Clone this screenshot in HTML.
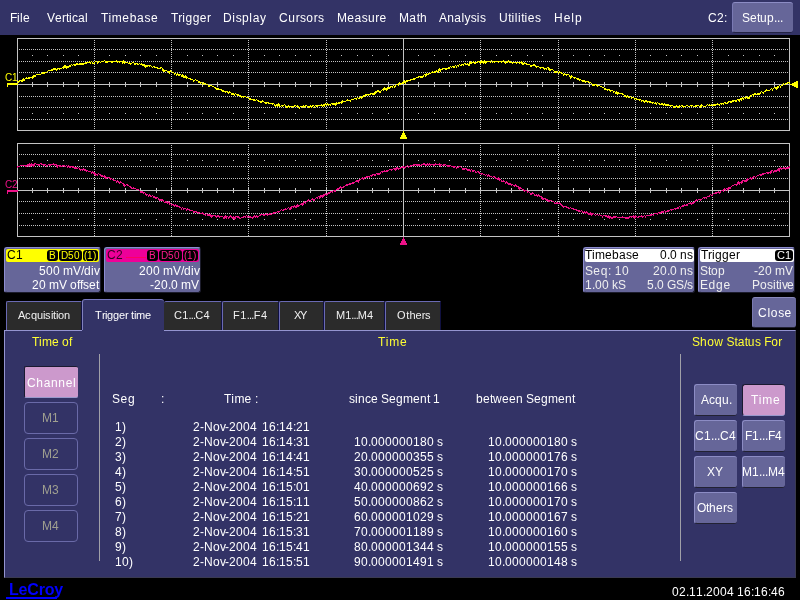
<!DOCTYPE html><html><head><meta charset="utf-8"><style>
*{margin:0;padding:0;box-sizing:border-box}
html,body{width:800px;height:600px;overflow:hidden;background:#000;font-family:"Liberation Sans", sans-serif;}
.a{position:absolute;white-space:pre;line-height:1}
.a b{display:inline-block;font-weight:normal}
</style></head><body><div style="position:absolute;left:0;top:0;width:800px;height:600px;will-change:transform">
<div style="position:absolute;left:0px;top:0px;width:800px;height:35px;background:#333366"></div><div class="a" style="left:10px;top:12px;font-size:12px;color:#fff;"><b style="width:7.000px">F</b><b style="width:3.000px">i</b><b style="width:3.000px">l</b><b style="width:7.000px">e</b></div><div class="a" style="left:47px;top:12px;font-size:12px;color:#fff;"><b style="width:8.000px">V</b><b style="width:7.000px">e</b><b style="width:4.000px">r</b><b style="width:3.000px">t</b><b style="width:3.000px">i</b><b style="width:6.000px">c</b><b style="width:7.000px">a</b><b style="width:3.000px">l</b></div><div class="a" style="left:101px;top:12px;font-size:12px;color:#fff;"><b style="width:7.429px">T</b><b style="width:3.429px">i</b><b style="width:10.429px">m</b><b style="width:7.429px">e</b><b style="width:7.429px">b</b><b style="width:7.429px">a</b><b style="width:6.429px">s</b><b style="width:7.000px">e</b></div><div class="a" style="left:171px;top:12px;font-size:12px;color:#fff;"><b style="width:7.167px">T</b><b style="width:4.167px">r</b><b style="width:3.167px">i</b><b style="width:7.167px">g</b><b style="width:7.167px">g</b><b style="width:7.167px">e</b><b style="width:4.000px">r</b></div><div class="a" style="left:223px;top:12px;font-size:12px;color:#fff;"><b style="width:9.333px">D</b><b style="width:3.333px">i</b><b style="width:6.333px">s</b><b style="width:7.333px">p</b><b style="width:3.333px">l</b><b style="width:7.333px">a</b><b style="width:6.000px">y</b></div><div class="a" style="left:279px;top:12px;font-size:12px;color:#fff;"><b style="width:9.333px">C</b><b style="width:7.333px">u</b><b style="width:4.333px">r</b><b style="width:6.333px">s</b><b style="width:7.333px">o</b><b style="width:4.333px">r</b><b style="width:6.000px">s</b></div><div class="a" style="left:337px;top:12px;font-size:12px;color:#fff;"><b style="width:10.250px">M</b><b style="width:7.250px">e</b><b style="width:7.250px">a</b><b style="width:6.250px">s</b><b style="width:7.250px">u</b><b style="width:4.250px">r</b><b style="width:7.000px">e</b></div><div class="a" style="left:399px;top:12px;font-size:12px;color:#fff;"><b style="width:10.333px">M</b><b style="width:7.333px">a</b><b style="width:3.333px">t</b><b style="width:7.000px">h</b></div><div class="a" style="left:439px;top:12px;font-size:12px;color:#fff;"><b style="width:8.143px">A</b><b style="width:7.143px">n</b><b style="width:7.143px">a</b><b style="width:3.143px">l</b><b style="width:6.143px">y</b><b style="width:6.143px">s</b><b style="width:3.143px">i</b><b style="width:6.000px">s</b></div><div class="a" style="left:499px;top:12px;font-size:12px;color:#fff;"><b style="width:9.250px">U</b><b style="width:3.250px">t</b><b style="width:3.250px">i</b><b style="width:3.250px">l</b><b style="width:3.250px">i</b><b style="width:3.250px">t</b><b style="width:3.250px">i</b><b style="width:7.250px">e</b><b style="width:6.000px">s</b></div><div class="a" style="left:554px;top:12px;font-size:12px;color:#fff;"><b style="width:9.667px">H</b><b style="width:7.667px">e</b><b style="width:3.667px">l</b><b style="width:7.000px">p</b></div><div class="a" style="left:708px;top:12px;font-size:12px;color:#fff;"><b style="width:9.000px">C</b><b style="width:7.000px">2</b><b style="width:3.000px">:</b></div><div style="position:absolute;left:732px;top:2px;width:61px;height:31px;background:#666699;border-radius:3px;border-top:1px solid #8c8cc4;border-left:1px solid #7a7ab4;border-bottom:1px solid #222244"></div><div class="a" style="left:742px;top:12px;font-size:12px;color:#fff;"><b style="width:8.000px">S</b><b style="width:7.000px">e</b><b style="width:3.000px">t</b><b style="width:7.000px">u</b><b style="width:7.000px">p</b><b style="width:3.000px">.</b><b style="width:3.000px">.</b><b style="width:3.000px">.</b></div><svg width="800" height="300" style="position:absolute;left:0;top:0" shape-rendering="crispEdges">
<rect x="17.5" y="38.5" width="772" height="92" fill="none" stroke="#c4c4c4" stroke-width="1"/><path d="M19 49h1v1h-1zM21 49h1v1h-1zM23 49h1v1h-1zM25 49h1v1h-1zM27 49h1v1h-1zM29 49h1v1h-1zM31 49h1v1h-1zM33 49h1v1h-1zM35 49h1v1h-1zM37 49h1v1h-1zM39 49h1v1h-1zM41 49h1v1h-1zM43 49h1v1h-1zM45 49h1v1h-1zM47 49h1v1h-1zM49 49h1v1h-1zM51 49h1v1h-1zM53 49h1v1h-1zM55 49h1v1h-1zM57 49h1v1h-1zM59 49h1v1h-1zM61 49h1v1h-1zM63 49h1v1h-1zM65 49h1v1h-1zM67 49h1v1h-1zM69 49h1v1h-1zM71 49h1v1h-1zM73 49h1v1h-1zM75 49h1v1h-1zM77 49h1v1h-1zM79 49h1v1h-1zM81 49h1v1h-1zM83 49h1v1h-1zM85 49h1v1h-1zM87 49h1v1h-1zM89 49h1v1h-1zM91 49h1v1h-1zM93 49h1v1h-1zM95 49h1v1h-1zM97 49h1v1h-1zM99 49h1v1h-1zM101 49h1v1h-1zM103 49h1v1h-1zM105 49h1v1h-1zM107 49h1v1h-1zM109 49h1v1h-1zM111 49h1v1h-1zM113 49h1v1h-1zM115 49h1v1h-1zM117 49h1v1h-1zM119 49h1v1h-1zM121 49h1v1h-1zM123 49h1v1h-1zM125 49h1v1h-1zM127 49h1v1h-1zM129 49h1v1h-1zM131 49h1v1h-1zM133 49h1v1h-1zM135 49h1v1h-1zM137 49h1v1h-1zM139 49h1v1h-1zM141 49h1v1h-1zM143 49h1v1h-1zM145 49h1v1h-1zM147 49h1v1h-1zM149 49h1v1h-1zM151 49h1v1h-1zM153 49h1v1h-1zM155 49h1v1h-1zM157 49h1v1h-1zM159 49h1v1h-1zM161 49h1v1h-1zM163 49h1v1h-1zM165 49h1v1h-1zM167 49h1v1h-1zM169 49h1v1h-1zM171 49h1v1h-1zM173 49h1v1h-1zM175 49h1v1h-1zM177 49h1v1h-1zM179 49h1v1h-1zM181 49h1v1h-1zM183 49h1v1h-1zM185 49h1v1h-1zM187 49h1v1h-1zM189 49h1v1h-1zM191 49h1v1h-1zM193 49h1v1h-1zM195 49h1v1h-1zM197 49h1v1h-1zM199 49h1v1h-1zM201 49h1v1h-1zM203 49h1v1h-1zM205 49h1v1h-1zM207 49h1v1h-1zM209 49h1v1h-1zM211 49h1v1h-1zM213 49h1v1h-1zM215 49h1v1h-1zM217 49h1v1h-1zM219 49h1v1h-1zM221 49h1v1h-1zM223 49h1v1h-1zM225 49h1v1h-1zM227 49h1v1h-1zM229 49h1v1h-1zM231 49h1v1h-1zM233 49h1v1h-1zM235 49h1v1h-1zM237 49h1v1h-1zM239 49h1v1h-1zM241 49h1v1h-1zM243 49h1v1h-1zM245 49h1v1h-1zM247 49h1v1h-1zM249 49h1v1h-1zM251 49h1v1h-1zM253 49h1v1h-1zM255 49h1v1h-1zM257 49h1v1h-1zM259 49h1v1h-1zM261 49h1v1h-1zM263 49h1v1h-1zM265 49h1v1h-1zM267 49h1v1h-1zM269 49h1v1h-1zM271 49h1v1h-1zM273 49h1v1h-1zM275 49h1v1h-1zM277 49h1v1h-1zM279 49h1v1h-1zM281 49h1v1h-1zM283 49h1v1h-1zM285 49h1v1h-1zM287 49h1v1h-1zM289 49h1v1h-1zM291 49h1v1h-1zM293 49h1v1h-1zM295 49h1v1h-1zM297 49h1v1h-1zM299 49h1v1h-1zM301 49h1v1h-1zM303 49h1v1h-1zM305 49h1v1h-1zM307 49h1v1h-1zM309 49h1v1h-1zM311 49h1v1h-1zM313 49h1v1h-1zM315 49h1v1h-1zM317 49h1v1h-1zM319 49h1v1h-1zM321 49h1v1h-1zM323 49h1v1h-1zM325 49h1v1h-1zM327 49h1v1h-1zM329 49h1v1h-1zM331 49h1v1h-1zM333 49h1v1h-1zM335 49h1v1h-1zM337 49h1v1h-1zM339 49h1v1h-1zM341 49h1v1h-1zM343 49h1v1h-1zM345 49h1v1h-1zM347 49h1v1h-1zM349 49h1v1h-1zM351 49h1v1h-1zM353 49h1v1h-1zM355 49h1v1h-1zM357 49h1v1h-1zM359 49h1v1h-1zM361 49h1v1h-1zM363 49h1v1h-1zM365 49h1v1h-1zM367 49h1v1h-1zM369 49h1v1h-1zM371 49h1v1h-1zM373 49h1v1h-1zM375 49h1v1h-1zM377 49h1v1h-1zM379 49h1v1h-1zM381 49h1v1h-1zM383 49h1v1h-1zM385 49h1v1h-1zM387 49h1v1h-1zM389 49h1v1h-1zM391 49h1v1h-1zM393 49h1v1h-1zM395 49h1v1h-1zM397 49h1v1h-1zM399 49h1v1h-1zM401 49h1v1h-1zM405 49h1v1h-1zM407 49h1v1h-1zM409 49h1v1h-1zM411 49h1v1h-1zM413 49h1v1h-1zM415 49h1v1h-1zM417 49h1v1h-1zM419 49h1v1h-1zM421 49h1v1h-1zM423 49h1v1h-1zM425 49h1v1h-1zM427 49h1v1h-1zM429 49h1v1h-1zM431 49h1v1h-1zM433 49h1v1h-1zM435 49h1v1h-1zM437 49h1v1h-1zM439 49h1v1h-1zM441 49h1v1h-1zM443 49h1v1h-1zM445 49h1v1h-1zM447 49h1v1h-1zM449 49h1v1h-1zM451 49h1v1h-1zM453 49h1v1h-1zM455 49h1v1h-1zM457 49h1v1h-1zM459 49h1v1h-1zM461 49h1v1h-1zM463 49h1v1h-1zM465 49h1v1h-1zM467 49h1v1h-1zM469 49h1v1h-1zM471 49h1v1h-1zM473 49h1v1h-1zM475 49h1v1h-1zM477 49h1v1h-1zM479 49h1v1h-1zM481 49h1v1h-1zM483 49h1v1h-1zM485 49h1v1h-1zM487 49h1v1h-1zM489 49h1v1h-1zM491 49h1v1h-1zM493 49h1v1h-1zM495 49h1v1h-1zM497 49h1v1h-1zM499 49h1v1h-1zM501 49h1v1h-1zM503 49h1v1h-1zM505 49h1v1h-1zM507 49h1v1h-1zM509 49h1v1h-1zM511 49h1v1h-1zM513 49h1v1h-1zM515 49h1v1h-1zM517 49h1v1h-1zM519 49h1v1h-1zM521 49h1v1h-1zM523 49h1v1h-1zM525 49h1v1h-1zM527 49h1v1h-1zM529 49h1v1h-1zM531 49h1v1h-1zM533 49h1v1h-1zM535 49h1v1h-1zM537 49h1v1h-1zM539 49h1v1h-1zM541 49h1v1h-1zM543 49h1v1h-1zM545 49h1v1h-1zM547 49h1v1h-1zM549 49h1v1h-1zM551 49h1v1h-1zM553 49h1v1h-1zM555 49h1v1h-1zM557 49h1v1h-1zM559 49h1v1h-1zM561 49h1v1h-1zM563 49h1v1h-1zM565 49h1v1h-1zM567 49h1v1h-1zM569 49h1v1h-1zM571 49h1v1h-1zM573 49h1v1h-1zM575 49h1v1h-1zM577 49h1v1h-1zM579 49h1v1h-1zM581 49h1v1h-1zM583 49h1v1h-1zM585 49h1v1h-1zM587 49h1v1h-1zM589 49h1v1h-1zM591 49h1v1h-1zM593 49h1v1h-1zM595 49h1v1h-1zM597 49h1v1h-1zM599 49h1v1h-1zM601 49h1v1h-1zM603 49h1v1h-1zM605 49h1v1h-1zM607 49h1v1h-1zM609 49h1v1h-1zM611 49h1v1h-1zM613 49h1v1h-1zM615 49h1v1h-1zM617 49h1v1h-1zM619 49h1v1h-1zM621 49h1v1h-1zM623 49h1v1h-1zM625 49h1v1h-1zM627 49h1v1h-1zM629 49h1v1h-1zM631 49h1v1h-1zM633 49h1v1h-1zM635 49h1v1h-1zM637 49h1v1h-1zM639 49h1v1h-1zM641 49h1v1h-1zM643 49h1v1h-1zM645 49h1v1h-1zM647 49h1v1h-1zM649 49h1v1h-1zM651 49h1v1h-1zM653 49h1v1h-1zM655 49h1v1h-1zM657 49h1v1h-1zM659 49h1v1h-1zM661 49h1v1h-1zM663 49h1v1h-1zM665 49h1v1h-1zM667 49h1v1h-1zM669 49h1v1h-1zM671 49h1v1h-1zM673 49h1v1h-1zM675 49h1v1h-1zM677 49h1v1h-1zM679 49h1v1h-1zM681 49h1v1h-1zM683 49h1v1h-1zM685 49h1v1h-1zM687 49h1v1h-1zM689 49h1v1h-1zM691 49h1v1h-1zM693 49h1v1h-1zM695 49h1v1h-1zM697 49h1v1h-1zM699 49h1v1h-1zM701 49h1v1h-1zM703 49h1v1h-1zM705 49h1v1h-1zM707 49h1v1h-1zM709 49h1v1h-1zM711 49h1v1h-1zM713 49h1v1h-1zM715 49h1v1h-1zM717 49h1v1h-1zM719 49h1v1h-1zM721 49h1v1h-1zM723 49h1v1h-1zM725 49h1v1h-1zM727 49h1v1h-1zM729 49h1v1h-1zM731 49h1v1h-1zM733 49h1v1h-1zM735 49h1v1h-1zM737 49h1v1h-1zM739 49h1v1h-1zM741 49h1v1h-1zM743 49h1v1h-1zM745 49h1v1h-1zM747 49h1v1h-1zM749 49h1v1h-1zM751 49h1v1h-1zM753 49h1v1h-1zM755 49h1v1h-1zM757 49h1v1h-1zM759 49h1v1h-1zM761 49h1v1h-1zM763 49h1v1h-1zM765 49h1v1h-1zM767 49h1v1h-1zM769 49h1v1h-1zM771 49h1v1h-1zM773 49h1v1h-1zM775 49h1v1h-1zM777 49h1v1h-1zM779 49h1v1h-1zM781 49h1v1h-1zM783 49h1v1h-1zM785 49h1v1h-1zM787 49h1v1h-1z" fill="#c4c4c4"/><path d="M19 61h1v1h-1zM21 61h1v1h-1zM23 61h1v1h-1zM25 61h1v1h-1zM27 61h1v1h-1zM29 61h1v1h-1zM31 61h1v1h-1zM33 61h1v1h-1zM35 61h1v1h-1zM37 61h1v1h-1zM39 61h1v1h-1zM41 61h1v1h-1zM43 61h1v1h-1zM45 61h1v1h-1zM47 61h1v1h-1zM49 61h1v1h-1zM51 61h1v1h-1zM53 61h1v1h-1zM55 61h1v1h-1zM57 61h1v1h-1zM59 61h1v1h-1zM61 61h1v1h-1zM63 61h1v1h-1zM65 61h1v1h-1zM67 61h1v1h-1zM69 61h1v1h-1zM71 61h1v1h-1zM73 61h1v1h-1zM75 61h1v1h-1zM77 61h1v1h-1zM79 61h1v1h-1zM81 61h1v1h-1zM83 61h1v1h-1zM85 61h1v1h-1zM87 61h1v1h-1zM89 61h1v1h-1zM91 61h1v1h-1zM93 61h1v1h-1zM95 61h1v1h-1zM97 61h1v1h-1zM99 61h1v1h-1zM101 61h1v1h-1zM103 61h1v1h-1zM105 61h1v1h-1zM107 61h1v1h-1zM109 61h1v1h-1zM111 61h1v1h-1zM113 61h1v1h-1zM115 61h1v1h-1zM117 61h1v1h-1zM119 61h1v1h-1zM121 61h1v1h-1zM123 61h1v1h-1zM125 61h1v1h-1zM127 61h1v1h-1zM129 61h1v1h-1zM131 61h1v1h-1zM133 61h1v1h-1zM135 61h1v1h-1zM137 61h1v1h-1zM139 61h1v1h-1zM141 61h1v1h-1zM143 61h1v1h-1zM145 61h1v1h-1zM147 61h1v1h-1zM149 61h1v1h-1zM151 61h1v1h-1zM153 61h1v1h-1zM155 61h1v1h-1zM157 61h1v1h-1zM159 61h1v1h-1zM161 61h1v1h-1zM163 61h1v1h-1zM165 61h1v1h-1zM167 61h1v1h-1zM169 61h1v1h-1zM171 61h1v1h-1zM173 61h1v1h-1zM175 61h1v1h-1zM177 61h1v1h-1zM179 61h1v1h-1zM181 61h1v1h-1zM183 61h1v1h-1zM185 61h1v1h-1zM187 61h1v1h-1zM189 61h1v1h-1zM191 61h1v1h-1zM193 61h1v1h-1zM195 61h1v1h-1zM197 61h1v1h-1zM199 61h1v1h-1zM201 61h1v1h-1zM203 61h1v1h-1zM205 61h1v1h-1zM207 61h1v1h-1zM209 61h1v1h-1zM211 61h1v1h-1zM213 61h1v1h-1zM215 61h1v1h-1zM217 61h1v1h-1zM219 61h1v1h-1zM221 61h1v1h-1zM223 61h1v1h-1zM225 61h1v1h-1zM227 61h1v1h-1zM229 61h1v1h-1zM231 61h1v1h-1zM233 61h1v1h-1zM235 61h1v1h-1zM237 61h1v1h-1zM239 61h1v1h-1zM241 61h1v1h-1zM243 61h1v1h-1zM245 61h1v1h-1zM247 61h1v1h-1zM249 61h1v1h-1zM251 61h1v1h-1zM253 61h1v1h-1zM255 61h1v1h-1zM257 61h1v1h-1zM259 61h1v1h-1zM261 61h1v1h-1zM263 61h1v1h-1zM265 61h1v1h-1zM267 61h1v1h-1zM269 61h1v1h-1zM271 61h1v1h-1zM273 61h1v1h-1zM275 61h1v1h-1zM277 61h1v1h-1zM279 61h1v1h-1zM281 61h1v1h-1zM283 61h1v1h-1zM285 61h1v1h-1zM287 61h1v1h-1zM289 61h1v1h-1zM291 61h1v1h-1zM293 61h1v1h-1zM295 61h1v1h-1zM297 61h1v1h-1zM299 61h1v1h-1zM301 61h1v1h-1zM303 61h1v1h-1zM305 61h1v1h-1zM307 61h1v1h-1zM309 61h1v1h-1zM311 61h1v1h-1zM313 61h1v1h-1zM315 61h1v1h-1zM317 61h1v1h-1zM319 61h1v1h-1zM321 61h1v1h-1zM323 61h1v1h-1zM325 61h1v1h-1zM327 61h1v1h-1zM329 61h1v1h-1zM331 61h1v1h-1zM333 61h1v1h-1zM335 61h1v1h-1zM337 61h1v1h-1zM339 61h1v1h-1zM341 61h1v1h-1zM343 61h1v1h-1zM345 61h1v1h-1zM347 61h1v1h-1zM349 61h1v1h-1zM351 61h1v1h-1zM353 61h1v1h-1zM355 61h1v1h-1zM357 61h1v1h-1zM359 61h1v1h-1zM361 61h1v1h-1zM363 61h1v1h-1zM365 61h1v1h-1zM367 61h1v1h-1zM369 61h1v1h-1zM371 61h1v1h-1zM373 61h1v1h-1zM375 61h1v1h-1zM377 61h1v1h-1zM379 61h1v1h-1zM381 61h1v1h-1zM383 61h1v1h-1zM385 61h1v1h-1zM387 61h1v1h-1zM389 61h1v1h-1zM391 61h1v1h-1zM393 61h1v1h-1zM395 61h1v1h-1zM397 61h1v1h-1zM399 61h1v1h-1zM401 61h1v1h-1zM405 61h1v1h-1zM407 61h1v1h-1zM409 61h1v1h-1zM411 61h1v1h-1zM413 61h1v1h-1zM415 61h1v1h-1zM417 61h1v1h-1zM419 61h1v1h-1zM421 61h1v1h-1zM423 61h1v1h-1zM425 61h1v1h-1zM427 61h1v1h-1zM429 61h1v1h-1zM431 61h1v1h-1zM433 61h1v1h-1zM435 61h1v1h-1zM437 61h1v1h-1zM439 61h1v1h-1zM441 61h1v1h-1zM443 61h1v1h-1zM445 61h1v1h-1zM447 61h1v1h-1zM449 61h1v1h-1zM451 61h1v1h-1zM453 61h1v1h-1zM455 61h1v1h-1zM457 61h1v1h-1zM459 61h1v1h-1zM461 61h1v1h-1zM463 61h1v1h-1zM465 61h1v1h-1zM467 61h1v1h-1zM469 61h1v1h-1zM471 61h1v1h-1zM473 61h1v1h-1zM475 61h1v1h-1zM477 61h1v1h-1zM479 61h1v1h-1zM481 61h1v1h-1zM483 61h1v1h-1zM485 61h1v1h-1zM487 61h1v1h-1zM489 61h1v1h-1zM491 61h1v1h-1zM493 61h1v1h-1zM495 61h1v1h-1zM497 61h1v1h-1zM499 61h1v1h-1zM501 61h1v1h-1zM503 61h1v1h-1zM505 61h1v1h-1zM507 61h1v1h-1zM509 61h1v1h-1zM511 61h1v1h-1zM513 61h1v1h-1zM515 61h1v1h-1zM517 61h1v1h-1zM519 61h1v1h-1zM521 61h1v1h-1zM523 61h1v1h-1zM525 61h1v1h-1zM527 61h1v1h-1zM529 61h1v1h-1zM531 61h1v1h-1zM533 61h1v1h-1zM535 61h1v1h-1zM537 61h1v1h-1zM539 61h1v1h-1zM541 61h1v1h-1zM543 61h1v1h-1zM545 61h1v1h-1zM547 61h1v1h-1zM549 61h1v1h-1zM551 61h1v1h-1zM553 61h1v1h-1zM555 61h1v1h-1zM557 61h1v1h-1zM559 61h1v1h-1zM561 61h1v1h-1zM563 61h1v1h-1zM565 61h1v1h-1zM567 61h1v1h-1zM569 61h1v1h-1zM571 61h1v1h-1zM573 61h1v1h-1zM575 61h1v1h-1zM577 61h1v1h-1zM579 61h1v1h-1zM581 61h1v1h-1zM583 61h1v1h-1zM585 61h1v1h-1zM587 61h1v1h-1zM589 61h1v1h-1zM591 61h1v1h-1zM593 61h1v1h-1zM595 61h1v1h-1zM597 61h1v1h-1zM599 61h1v1h-1zM601 61h1v1h-1zM603 61h1v1h-1zM605 61h1v1h-1zM607 61h1v1h-1zM609 61h1v1h-1zM611 61h1v1h-1zM613 61h1v1h-1zM615 61h1v1h-1zM617 61h1v1h-1zM619 61h1v1h-1zM621 61h1v1h-1zM623 61h1v1h-1zM625 61h1v1h-1zM627 61h1v1h-1zM629 61h1v1h-1zM631 61h1v1h-1zM633 61h1v1h-1zM635 61h1v1h-1zM637 61h1v1h-1zM639 61h1v1h-1zM641 61h1v1h-1zM643 61h1v1h-1zM645 61h1v1h-1zM647 61h1v1h-1zM649 61h1v1h-1zM651 61h1v1h-1zM653 61h1v1h-1zM655 61h1v1h-1zM657 61h1v1h-1zM659 61h1v1h-1zM661 61h1v1h-1zM663 61h1v1h-1zM665 61h1v1h-1zM667 61h1v1h-1zM669 61h1v1h-1zM671 61h1v1h-1zM673 61h1v1h-1zM675 61h1v1h-1zM677 61h1v1h-1zM679 61h1v1h-1zM681 61h1v1h-1zM683 61h1v1h-1zM685 61h1v1h-1zM687 61h1v1h-1zM689 61h1v1h-1zM691 61h1v1h-1zM693 61h1v1h-1zM695 61h1v1h-1zM697 61h1v1h-1zM699 61h1v1h-1zM701 61h1v1h-1zM703 61h1v1h-1zM705 61h1v1h-1zM707 61h1v1h-1zM709 61h1v1h-1zM711 61h1v1h-1zM713 61h1v1h-1zM715 61h1v1h-1zM717 61h1v1h-1zM719 61h1v1h-1zM721 61h1v1h-1zM723 61h1v1h-1zM725 61h1v1h-1zM727 61h1v1h-1zM729 61h1v1h-1zM731 61h1v1h-1zM733 61h1v1h-1zM735 61h1v1h-1zM737 61h1v1h-1zM739 61h1v1h-1zM741 61h1v1h-1zM743 61h1v1h-1zM745 61h1v1h-1zM747 61h1v1h-1zM749 61h1v1h-1zM751 61h1v1h-1zM753 61h1v1h-1zM755 61h1v1h-1zM757 61h1v1h-1zM759 61h1v1h-1zM761 61h1v1h-1zM763 61h1v1h-1zM765 61h1v1h-1zM767 61h1v1h-1zM769 61h1v1h-1zM771 61h1v1h-1zM773 61h1v1h-1zM775 61h1v1h-1zM777 61h1v1h-1zM779 61h1v1h-1zM781 61h1v1h-1zM783 61h1v1h-1zM785 61h1v1h-1zM787 61h1v1h-1z" fill="#c4c4c4"/><path d="M19 72h1v1h-1zM21 72h1v1h-1zM23 72h1v1h-1zM25 72h1v1h-1zM27 72h1v1h-1zM29 72h1v1h-1zM31 72h1v1h-1zM33 72h1v1h-1zM35 72h1v1h-1zM37 72h1v1h-1zM39 72h1v1h-1zM41 72h1v1h-1zM43 72h1v1h-1zM45 72h1v1h-1zM47 72h1v1h-1zM49 72h1v1h-1zM51 72h1v1h-1zM53 72h1v1h-1zM55 72h1v1h-1zM57 72h1v1h-1zM59 72h1v1h-1zM61 72h1v1h-1zM63 72h1v1h-1zM65 72h1v1h-1zM67 72h1v1h-1zM69 72h1v1h-1zM71 72h1v1h-1zM73 72h1v1h-1zM75 72h1v1h-1zM77 72h1v1h-1zM79 72h1v1h-1zM81 72h1v1h-1zM83 72h1v1h-1zM85 72h1v1h-1zM87 72h1v1h-1zM89 72h1v1h-1zM91 72h1v1h-1zM93 72h1v1h-1zM95 72h1v1h-1zM97 72h1v1h-1zM99 72h1v1h-1zM101 72h1v1h-1zM103 72h1v1h-1zM105 72h1v1h-1zM107 72h1v1h-1zM109 72h1v1h-1zM111 72h1v1h-1zM113 72h1v1h-1zM115 72h1v1h-1zM117 72h1v1h-1zM119 72h1v1h-1zM121 72h1v1h-1zM123 72h1v1h-1zM125 72h1v1h-1zM127 72h1v1h-1zM129 72h1v1h-1zM131 72h1v1h-1zM133 72h1v1h-1zM135 72h1v1h-1zM137 72h1v1h-1zM139 72h1v1h-1zM141 72h1v1h-1zM143 72h1v1h-1zM145 72h1v1h-1zM147 72h1v1h-1zM149 72h1v1h-1zM151 72h1v1h-1zM153 72h1v1h-1zM155 72h1v1h-1zM157 72h1v1h-1zM159 72h1v1h-1zM161 72h1v1h-1zM163 72h1v1h-1zM165 72h1v1h-1zM167 72h1v1h-1zM169 72h1v1h-1zM171 72h1v1h-1zM173 72h1v1h-1zM175 72h1v1h-1zM177 72h1v1h-1zM179 72h1v1h-1zM181 72h1v1h-1zM183 72h1v1h-1zM185 72h1v1h-1zM187 72h1v1h-1zM189 72h1v1h-1zM191 72h1v1h-1zM193 72h1v1h-1zM195 72h1v1h-1zM197 72h1v1h-1zM199 72h1v1h-1zM201 72h1v1h-1zM203 72h1v1h-1zM205 72h1v1h-1zM207 72h1v1h-1zM209 72h1v1h-1zM211 72h1v1h-1zM213 72h1v1h-1zM215 72h1v1h-1zM217 72h1v1h-1zM219 72h1v1h-1zM221 72h1v1h-1zM223 72h1v1h-1zM225 72h1v1h-1zM227 72h1v1h-1zM229 72h1v1h-1zM231 72h1v1h-1zM233 72h1v1h-1zM235 72h1v1h-1zM237 72h1v1h-1zM239 72h1v1h-1zM241 72h1v1h-1zM243 72h1v1h-1zM245 72h1v1h-1zM247 72h1v1h-1zM249 72h1v1h-1zM251 72h1v1h-1zM253 72h1v1h-1zM255 72h1v1h-1zM257 72h1v1h-1zM259 72h1v1h-1zM261 72h1v1h-1zM263 72h1v1h-1zM265 72h1v1h-1zM267 72h1v1h-1zM269 72h1v1h-1zM271 72h1v1h-1zM273 72h1v1h-1zM275 72h1v1h-1zM277 72h1v1h-1zM279 72h1v1h-1zM281 72h1v1h-1zM283 72h1v1h-1zM285 72h1v1h-1zM287 72h1v1h-1zM289 72h1v1h-1zM291 72h1v1h-1zM293 72h1v1h-1zM295 72h1v1h-1zM297 72h1v1h-1zM299 72h1v1h-1zM301 72h1v1h-1zM303 72h1v1h-1zM305 72h1v1h-1zM307 72h1v1h-1zM309 72h1v1h-1zM311 72h1v1h-1zM313 72h1v1h-1zM315 72h1v1h-1zM317 72h1v1h-1zM319 72h1v1h-1zM321 72h1v1h-1zM323 72h1v1h-1zM325 72h1v1h-1zM327 72h1v1h-1zM329 72h1v1h-1zM331 72h1v1h-1zM333 72h1v1h-1zM335 72h1v1h-1zM337 72h1v1h-1zM339 72h1v1h-1zM341 72h1v1h-1zM343 72h1v1h-1zM345 72h1v1h-1zM347 72h1v1h-1zM349 72h1v1h-1zM351 72h1v1h-1zM353 72h1v1h-1zM355 72h1v1h-1zM357 72h1v1h-1zM359 72h1v1h-1zM361 72h1v1h-1zM363 72h1v1h-1zM365 72h1v1h-1zM367 72h1v1h-1zM369 72h1v1h-1zM371 72h1v1h-1zM373 72h1v1h-1zM375 72h1v1h-1zM377 72h1v1h-1zM379 72h1v1h-1zM381 72h1v1h-1zM383 72h1v1h-1zM385 72h1v1h-1zM387 72h1v1h-1zM389 72h1v1h-1zM391 72h1v1h-1zM393 72h1v1h-1zM395 72h1v1h-1zM397 72h1v1h-1zM399 72h1v1h-1zM401 72h1v1h-1zM405 72h1v1h-1zM407 72h1v1h-1zM409 72h1v1h-1zM411 72h1v1h-1zM413 72h1v1h-1zM415 72h1v1h-1zM417 72h1v1h-1zM419 72h1v1h-1zM421 72h1v1h-1zM423 72h1v1h-1zM425 72h1v1h-1zM427 72h1v1h-1zM429 72h1v1h-1zM431 72h1v1h-1zM433 72h1v1h-1zM435 72h1v1h-1zM437 72h1v1h-1zM439 72h1v1h-1zM441 72h1v1h-1zM443 72h1v1h-1zM445 72h1v1h-1zM447 72h1v1h-1zM449 72h1v1h-1zM451 72h1v1h-1zM453 72h1v1h-1zM455 72h1v1h-1zM457 72h1v1h-1zM459 72h1v1h-1zM461 72h1v1h-1zM463 72h1v1h-1zM465 72h1v1h-1zM467 72h1v1h-1zM469 72h1v1h-1zM471 72h1v1h-1zM473 72h1v1h-1zM475 72h1v1h-1zM477 72h1v1h-1zM479 72h1v1h-1zM481 72h1v1h-1zM483 72h1v1h-1zM485 72h1v1h-1zM487 72h1v1h-1zM489 72h1v1h-1zM491 72h1v1h-1zM493 72h1v1h-1zM495 72h1v1h-1zM497 72h1v1h-1zM499 72h1v1h-1zM501 72h1v1h-1zM503 72h1v1h-1zM505 72h1v1h-1zM507 72h1v1h-1zM509 72h1v1h-1zM511 72h1v1h-1zM513 72h1v1h-1zM515 72h1v1h-1zM517 72h1v1h-1zM519 72h1v1h-1zM521 72h1v1h-1zM523 72h1v1h-1zM525 72h1v1h-1zM527 72h1v1h-1zM529 72h1v1h-1zM531 72h1v1h-1zM533 72h1v1h-1zM535 72h1v1h-1zM537 72h1v1h-1zM539 72h1v1h-1zM541 72h1v1h-1zM543 72h1v1h-1zM545 72h1v1h-1zM547 72h1v1h-1zM549 72h1v1h-1zM551 72h1v1h-1zM553 72h1v1h-1zM555 72h1v1h-1zM557 72h1v1h-1zM559 72h1v1h-1zM561 72h1v1h-1zM563 72h1v1h-1zM565 72h1v1h-1zM567 72h1v1h-1zM569 72h1v1h-1zM571 72h1v1h-1zM573 72h1v1h-1zM575 72h1v1h-1zM577 72h1v1h-1zM579 72h1v1h-1zM581 72h1v1h-1zM583 72h1v1h-1zM585 72h1v1h-1zM587 72h1v1h-1zM589 72h1v1h-1zM591 72h1v1h-1zM593 72h1v1h-1zM595 72h1v1h-1zM597 72h1v1h-1zM599 72h1v1h-1zM601 72h1v1h-1zM603 72h1v1h-1zM605 72h1v1h-1zM607 72h1v1h-1zM609 72h1v1h-1zM611 72h1v1h-1zM613 72h1v1h-1zM615 72h1v1h-1zM617 72h1v1h-1zM619 72h1v1h-1zM621 72h1v1h-1zM623 72h1v1h-1zM625 72h1v1h-1zM627 72h1v1h-1zM629 72h1v1h-1zM631 72h1v1h-1zM633 72h1v1h-1zM635 72h1v1h-1zM637 72h1v1h-1zM639 72h1v1h-1zM641 72h1v1h-1zM643 72h1v1h-1zM645 72h1v1h-1zM647 72h1v1h-1zM649 72h1v1h-1zM651 72h1v1h-1zM653 72h1v1h-1zM655 72h1v1h-1zM657 72h1v1h-1zM659 72h1v1h-1zM661 72h1v1h-1zM663 72h1v1h-1zM665 72h1v1h-1zM667 72h1v1h-1zM669 72h1v1h-1zM671 72h1v1h-1zM673 72h1v1h-1zM675 72h1v1h-1zM677 72h1v1h-1zM679 72h1v1h-1zM681 72h1v1h-1zM683 72h1v1h-1zM685 72h1v1h-1zM687 72h1v1h-1zM689 72h1v1h-1zM691 72h1v1h-1zM693 72h1v1h-1zM695 72h1v1h-1zM697 72h1v1h-1zM699 72h1v1h-1zM701 72h1v1h-1zM703 72h1v1h-1zM705 72h1v1h-1zM707 72h1v1h-1zM709 72h1v1h-1zM711 72h1v1h-1zM713 72h1v1h-1zM715 72h1v1h-1zM717 72h1v1h-1zM719 72h1v1h-1zM721 72h1v1h-1zM723 72h1v1h-1zM725 72h1v1h-1zM727 72h1v1h-1zM729 72h1v1h-1zM731 72h1v1h-1zM733 72h1v1h-1zM735 72h1v1h-1zM737 72h1v1h-1zM739 72h1v1h-1zM741 72h1v1h-1zM743 72h1v1h-1zM745 72h1v1h-1zM747 72h1v1h-1zM749 72h1v1h-1zM751 72h1v1h-1zM753 72h1v1h-1zM755 72h1v1h-1zM757 72h1v1h-1zM759 72h1v1h-1zM761 72h1v1h-1zM763 72h1v1h-1zM765 72h1v1h-1zM767 72h1v1h-1zM769 72h1v1h-1zM771 72h1v1h-1zM773 72h1v1h-1zM775 72h1v1h-1zM777 72h1v1h-1zM779 72h1v1h-1zM781 72h1v1h-1zM783 72h1v1h-1zM785 72h1v1h-1zM787 72h1v1h-1z" fill="#c4c4c4"/><path d="M19 96h1v1h-1zM21 96h1v1h-1zM23 96h1v1h-1zM25 96h1v1h-1zM27 96h1v1h-1zM29 96h1v1h-1zM31 96h1v1h-1zM33 96h1v1h-1zM35 96h1v1h-1zM37 96h1v1h-1zM39 96h1v1h-1zM41 96h1v1h-1zM43 96h1v1h-1zM45 96h1v1h-1zM47 96h1v1h-1zM49 96h1v1h-1zM51 96h1v1h-1zM53 96h1v1h-1zM55 96h1v1h-1zM57 96h1v1h-1zM59 96h1v1h-1zM61 96h1v1h-1zM63 96h1v1h-1zM65 96h1v1h-1zM67 96h1v1h-1zM69 96h1v1h-1zM71 96h1v1h-1zM73 96h1v1h-1zM75 96h1v1h-1zM77 96h1v1h-1zM79 96h1v1h-1zM81 96h1v1h-1zM83 96h1v1h-1zM85 96h1v1h-1zM87 96h1v1h-1zM89 96h1v1h-1zM91 96h1v1h-1zM93 96h1v1h-1zM95 96h1v1h-1zM97 96h1v1h-1zM99 96h1v1h-1zM101 96h1v1h-1zM103 96h1v1h-1zM105 96h1v1h-1zM107 96h1v1h-1zM109 96h1v1h-1zM111 96h1v1h-1zM113 96h1v1h-1zM115 96h1v1h-1zM117 96h1v1h-1zM119 96h1v1h-1zM121 96h1v1h-1zM123 96h1v1h-1zM125 96h1v1h-1zM127 96h1v1h-1zM129 96h1v1h-1zM131 96h1v1h-1zM133 96h1v1h-1zM135 96h1v1h-1zM137 96h1v1h-1zM139 96h1v1h-1zM141 96h1v1h-1zM143 96h1v1h-1zM145 96h1v1h-1zM147 96h1v1h-1zM149 96h1v1h-1zM151 96h1v1h-1zM153 96h1v1h-1zM155 96h1v1h-1zM157 96h1v1h-1zM159 96h1v1h-1zM161 96h1v1h-1zM163 96h1v1h-1zM165 96h1v1h-1zM167 96h1v1h-1zM169 96h1v1h-1zM171 96h1v1h-1zM173 96h1v1h-1zM175 96h1v1h-1zM177 96h1v1h-1zM179 96h1v1h-1zM181 96h1v1h-1zM183 96h1v1h-1zM185 96h1v1h-1zM187 96h1v1h-1zM189 96h1v1h-1zM191 96h1v1h-1zM193 96h1v1h-1zM195 96h1v1h-1zM197 96h1v1h-1zM199 96h1v1h-1zM201 96h1v1h-1zM203 96h1v1h-1zM205 96h1v1h-1zM207 96h1v1h-1zM209 96h1v1h-1zM211 96h1v1h-1zM213 96h1v1h-1zM215 96h1v1h-1zM217 96h1v1h-1zM219 96h1v1h-1zM221 96h1v1h-1zM223 96h1v1h-1zM225 96h1v1h-1zM227 96h1v1h-1zM229 96h1v1h-1zM231 96h1v1h-1zM233 96h1v1h-1zM235 96h1v1h-1zM237 96h1v1h-1zM239 96h1v1h-1zM241 96h1v1h-1zM243 96h1v1h-1zM245 96h1v1h-1zM247 96h1v1h-1zM249 96h1v1h-1zM251 96h1v1h-1zM253 96h1v1h-1zM255 96h1v1h-1zM257 96h1v1h-1zM259 96h1v1h-1zM261 96h1v1h-1zM263 96h1v1h-1zM265 96h1v1h-1zM267 96h1v1h-1zM269 96h1v1h-1zM271 96h1v1h-1zM273 96h1v1h-1zM275 96h1v1h-1zM277 96h1v1h-1zM279 96h1v1h-1zM281 96h1v1h-1zM283 96h1v1h-1zM285 96h1v1h-1zM287 96h1v1h-1zM289 96h1v1h-1zM291 96h1v1h-1zM293 96h1v1h-1zM295 96h1v1h-1zM297 96h1v1h-1zM299 96h1v1h-1zM301 96h1v1h-1zM303 96h1v1h-1zM305 96h1v1h-1zM307 96h1v1h-1zM309 96h1v1h-1zM311 96h1v1h-1zM313 96h1v1h-1zM315 96h1v1h-1zM317 96h1v1h-1zM319 96h1v1h-1zM321 96h1v1h-1zM323 96h1v1h-1zM325 96h1v1h-1zM327 96h1v1h-1zM329 96h1v1h-1zM331 96h1v1h-1zM333 96h1v1h-1zM335 96h1v1h-1zM337 96h1v1h-1zM339 96h1v1h-1zM341 96h1v1h-1zM343 96h1v1h-1zM345 96h1v1h-1zM347 96h1v1h-1zM349 96h1v1h-1zM351 96h1v1h-1zM353 96h1v1h-1zM355 96h1v1h-1zM357 96h1v1h-1zM359 96h1v1h-1zM361 96h1v1h-1zM363 96h1v1h-1zM365 96h1v1h-1zM367 96h1v1h-1zM369 96h1v1h-1zM371 96h1v1h-1zM373 96h1v1h-1zM375 96h1v1h-1zM377 96h1v1h-1zM379 96h1v1h-1zM381 96h1v1h-1zM383 96h1v1h-1zM385 96h1v1h-1zM387 96h1v1h-1zM389 96h1v1h-1zM391 96h1v1h-1zM393 96h1v1h-1zM395 96h1v1h-1zM397 96h1v1h-1zM399 96h1v1h-1zM401 96h1v1h-1zM405 96h1v1h-1zM407 96h1v1h-1zM409 96h1v1h-1zM411 96h1v1h-1zM413 96h1v1h-1zM415 96h1v1h-1zM417 96h1v1h-1zM419 96h1v1h-1zM421 96h1v1h-1zM423 96h1v1h-1zM425 96h1v1h-1zM427 96h1v1h-1zM429 96h1v1h-1zM431 96h1v1h-1zM433 96h1v1h-1zM435 96h1v1h-1zM437 96h1v1h-1zM439 96h1v1h-1zM441 96h1v1h-1zM443 96h1v1h-1zM445 96h1v1h-1zM447 96h1v1h-1zM449 96h1v1h-1zM451 96h1v1h-1zM453 96h1v1h-1zM455 96h1v1h-1zM457 96h1v1h-1zM459 96h1v1h-1zM461 96h1v1h-1zM463 96h1v1h-1zM465 96h1v1h-1zM467 96h1v1h-1zM469 96h1v1h-1zM471 96h1v1h-1zM473 96h1v1h-1zM475 96h1v1h-1zM477 96h1v1h-1zM479 96h1v1h-1zM481 96h1v1h-1zM483 96h1v1h-1zM485 96h1v1h-1zM487 96h1v1h-1zM489 96h1v1h-1zM491 96h1v1h-1zM493 96h1v1h-1zM495 96h1v1h-1zM497 96h1v1h-1zM499 96h1v1h-1zM501 96h1v1h-1zM503 96h1v1h-1zM505 96h1v1h-1zM507 96h1v1h-1zM509 96h1v1h-1zM511 96h1v1h-1zM513 96h1v1h-1zM515 96h1v1h-1zM517 96h1v1h-1zM519 96h1v1h-1zM521 96h1v1h-1zM523 96h1v1h-1zM525 96h1v1h-1zM527 96h1v1h-1zM529 96h1v1h-1zM531 96h1v1h-1zM533 96h1v1h-1zM535 96h1v1h-1zM537 96h1v1h-1zM539 96h1v1h-1zM541 96h1v1h-1zM543 96h1v1h-1zM545 96h1v1h-1zM547 96h1v1h-1zM549 96h1v1h-1zM551 96h1v1h-1zM553 96h1v1h-1zM555 96h1v1h-1zM557 96h1v1h-1zM559 96h1v1h-1zM561 96h1v1h-1zM563 96h1v1h-1zM565 96h1v1h-1zM567 96h1v1h-1zM569 96h1v1h-1zM571 96h1v1h-1zM573 96h1v1h-1zM575 96h1v1h-1zM577 96h1v1h-1zM579 96h1v1h-1zM581 96h1v1h-1zM583 96h1v1h-1zM585 96h1v1h-1zM587 96h1v1h-1zM589 96h1v1h-1zM591 96h1v1h-1zM593 96h1v1h-1zM595 96h1v1h-1zM597 96h1v1h-1zM599 96h1v1h-1zM601 96h1v1h-1zM603 96h1v1h-1zM605 96h1v1h-1zM607 96h1v1h-1zM609 96h1v1h-1zM611 96h1v1h-1zM613 96h1v1h-1zM615 96h1v1h-1zM617 96h1v1h-1zM619 96h1v1h-1zM621 96h1v1h-1zM623 96h1v1h-1zM625 96h1v1h-1zM627 96h1v1h-1zM629 96h1v1h-1zM631 96h1v1h-1zM633 96h1v1h-1zM635 96h1v1h-1zM637 96h1v1h-1zM639 96h1v1h-1zM641 96h1v1h-1zM643 96h1v1h-1zM645 96h1v1h-1zM647 96h1v1h-1zM649 96h1v1h-1zM651 96h1v1h-1zM653 96h1v1h-1zM655 96h1v1h-1zM657 96h1v1h-1zM659 96h1v1h-1zM661 96h1v1h-1zM663 96h1v1h-1zM665 96h1v1h-1zM667 96h1v1h-1zM669 96h1v1h-1zM671 96h1v1h-1zM673 96h1v1h-1zM675 96h1v1h-1zM677 96h1v1h-1zM679 96h1v1h-1zM681 96h1v1h-1zM683 96h1v1h-1zM685 96h1v1h-1zM687 96h1v1h-1zM689 96h1v1h-1zM691 96h1v1h-1zM693 96h1v1h-1zM695 96h1v1h-1zM697 96h1v1h-1zM699 96h1v1h-1zM701 96h1v1h-1zM703 96h1v1h-1zM705 96h1v1h-1zM707 96h1v1h-1zM709 96h1v1h-1zM711 96h1v1h-1zM713 96h1v1h-1zM715 96h1v1h-1zM717 96h1v1h-1zM719 96h1v1h-1zM721 96h1v1h-1zM723 96h1v1h-1zM725 96h1v1h-1zM727 96h1v1h-1zM729 96h1v1h-1zM731 96h1v1h-1zM733 96h1v1h-1zM735 96h1v1h-1zM737 96h1v1h-1zM739 96h1v1h-1zM741 96h1v1h-1zM743 96h1v1h-1zM745 96h1v1h-1zM747 96h1v1h-1zM749 96h1v1h-1zM751 96h1v1h-1zM753 96h1v1h-1zM755 96h1v1h-1zM757 96h1v1h-1zM759 96h1v1h-1zM761 96h1v1h-1zM763 96h1v1h-1zM765 96h1v1h-1zM767 96h1v1h-1zM769 96h1v1h-1zM771 96h1v1h-1zM773 96h1v1h-1zM775 96h1v1h-1zM777 96h1v1h-1zM779 96h1v1h-1zM781 96h1v1h-1zM783 96h1v1h-1zM785 96h1v1h-1zM787 96h1v1h-1z" fill="#c4c4c4"/><path d="M19 107h1v1h-1zM21 107h1v1h-1zM23 107h1v1h-1zM25 107h1v1h-1zM27 107h1v1h-1zM29 107h1v1h-1zM31 107h1v1h-1zM33 107h1v1h-1zM35 107h1v1h-1zM37 107h1v1h-1zM39 107h1v1h-1zM41 107h1v1h-1zM43 107h1v1h-1zM45 107h1v1h-1zM47 107h1v1h-1zM49 107h1v1h-1zM51 107h1v1h-1zM53 107h1v1h-1zM55 107h1v1h-1zM57 107h1v1h-1zM59 107h1v1h-1zM61 107h1v1h-1zM63 107h1v1h-1zM65 107h1v1h-1zM67 107h1v1h-1zM69 107h1v1h-1zM71 107h1v1h-1zM73 107h1v1h-1zM75 107h1v1h-1zM77 107h1v1h-1zM79 107h1v1h-1zM81 107h1v1h-1zM83 107h1v1h-1zM85 107h1v1h-1zM87 107h1v1h-1zM89 107h1v1h-1zM91 107h1v1h-1zM93 107h1v1h-1zM95 107h1v1h-1zM97 107h1v1h-1zM99 107h1v1h-1zM101 107h1v1h-1zM103 107h1v1h-1zM105 107h1v1h-1zM107 107h1v1h-1zM109 107h1v1h-1zM111 107h1v1h-1zM113 107h1v1h-1zM115 107h1v1h-1zM117 107h1v1h-1zM119 107h1v1h-1zM121 107h1v1h-1zM123 107h1v1h-1zM125 107h1v1h-1zM127 107h1v1h-1zM129 107h1v1h-1zM131 107h1v1h-1zM133 107h1v1h-1zM135 107h1v1h-1zM137 107h1v1h-1zM139 107h1v1h-1zM141 107h1v1h-1zM143 107h1v1h-1zM145 107h1v1h-1zM147 107h1v1h-1zM149 107h1v1h-1zM151 107h1v1h-1zM153 107h1v1h-1zM155 107h1v1h-1zM157 107h1v1h-1zM159 107h1v1h-1zM161 107h1v1h-1zM163 107h1v1h-1zM165 107h1v1h-1zM167 107h1v1h-1zM169 107h1v1h-1zM171 107h1v1h-1zM173 107h1v1h-1zM175 107h1v1h-1zM177 107h1v1h-1zM179 107h1v1h-1zM181 107h1v1h-1zM183 107h1v1h-1zM185 107h1v1h-1zM187 107h1v1h-1zM189 107h1v1h-1zM191 107h1v1h-1zM193 107h1v1h-1zM195 107h1v1h-1zM197 107h1v1h-1zM199 107h1v1h-1zM201 107h1v1h-1zM203 107h1v1h-1zM205 107h1v1h-1zM207 107h1v1h-1zM209 107h1v1h-1zM211 107h1v1h-1zM213 107h1v1h-1zM215 107h1v1h-1zM217 107h1v1h-1zM219 107h1v1h-1zM221 107h1v1h-1zM223 107h1v1h-1zM225 107h1v1h-1zM227 107h1v1h-1zM229 107h1v1h-1zM231 107h1v1h-1zM233 107h1v1h-1zM235 107h1v1h-1zM237 107h1v1h-1zM239 107h1v1h-1zM241 107h1v1h-1zM243 107h1v1h-1zM245 107h1v1h-1zM247 107h1v1h-1zM249 107h1v1h-1zM251 107h1v1h-1zM253 107h1v1h-1zM255 107h1v1h-1zM257 107h1v1h-1zM259 107h1v1h-1zM261 107h1v1h-1zM263 107h1v1h-1zM265 107h1v1h-1zM267 107h1v1h-1zM269 107h1v1h-1zM271 107h1v1h-1zM273 107h1v1h-1zM275 107h1v1h-1zM277 107h1v1h-1zM279 107h1v1h-1zM281 107h1v1h-1zM283 107h1v1h-1zM285 107h1v1h-1zM287 107h1v1h-1zM289 107h1v1h-1zM291 107h1v1h-1zM293 107h1v1h-1zM295 107h1v1h-1zM297 107h1v1h-1zM299 107h1v1h-1zM301 107h1v1h-1zM303 107h1v1h-1zM305 107h1v1h-1zM307 107h1v1h-1zM309 107h1v1h-1zM311 107h1v1h-1zM313 107h1v1h-1zM315 107h1v1h-1zM317 107h1v1h-1zM319 107h1v1h-1zM321 107h1v1h-1zM323 107h1v1h-1zM325 107h1v1h-1zM327 107h1v1h-1zM329 107h1v1h-1zM331 107h1v1h-1zM333 107h1v1h-1zM335 107h1v1h-1zM337 107h1v1h-1zM339 107h1v1h-1zM341 107h1v1h-1zM343 107h1v1h-1zM345 107h1v1h-1zM347 107h1v1h-1zM349 107h1v1h-1zM351 107h1v1h-1zM353 107h1v1h-1zM355 107h1v1h-1zM357 107h1v1h-1zM359 107h1v1h-1zM361 107h1v1h-1zM363 107h1v1h-1zM365 107h1v1h-1zM367 107h1v1h-1zM369 107h1v1h-1zM371 107h1v1h-1zM373 107h1v1h-1zM375 107h1v1h-1zM377 107h1v1h-1zM379 107h1v1h-1zM381 107h1v1h-1zM383 107h1v1h-1zM385 107h1v1h-1zM387 107h1v1h-1zM389 107h1v1h-1zM391 107h1v1h-1zM393 107h1v1h-1zM395 107h1v1h-1zM397 107h1v1h-1zM399 107h1v1h-1zM401 107h1v1h-1zM405 107h1v1h-1zM407 107h1v1h-1zM409 107h1v1h-1zM411 107h1v1h-1zM413 107h1v1h-1zM415 107h1v1h-1zM417 107h1v1h-1zM419 107h1v1h-1zM421 107h1v1h-1zM423 107h1v1h-1zM425 107h1v1h-1zM427 107h1v1h-1zM429 107h1v1h-1zM431 107h1v1h-1zM433 107h1v1h-1zM435 107h1v1h-1zM437 107h1v1h-1zM439 107h1v1h-1zM441 107h1v1h-1zM443 107h1v1h-1zM445 107h1v1h-1zM447 107h1v1h-1zM449 107h1v1h-1zM451 107h1v1h-1zM453 107h1v1h-1zM455 107h1v1h-1zM457 107h1v1h-1zM459 107h1v1h-1zM461 107h1v1h-1zM463 107h1v1h-1zM465 107h1v1h-1zM467 107h1v1h-1zM469 107h1v1h-1zM471 107h1v1h-1zM473 107h1v1h-1zM475 107h1v1h-1zM477 107h1v1h-1zM479 107h1v1h-1zM481 107h1v1h-1zM483 107h1v1h-1zM485 107h1v1h-1zM487 107h1v1h-1zM489 107h1v1h-1zM491 107h1v1h-1zM493 107h1v1h-1zM495 107h1v1h-1zM497 107h1v1h-1zM499 107h1v1h-1zM501 107h1v1h-1zM503 107h1v1h-1zM505 107h1v1h-1zM507 107h1v1h-1zM509 107h1v1h-1zM511 107h1v1h-1zM513 107h1v1h-1zM515 107h1v1h-1zM517 107h1v1h-1zM519 107h1v1h-1zM521 107h1v1h-1zM523 107h1v1h-1zM525 107h1v1h-1zM527 107h1v1h-1zM529 107h1v1h-1zM531 107h1v1h-1zM533 107h1v1h-1zM535 107h1v1h-1zM537 107h1v1h-1zM539 107h1v1h-1zM541 107h1v1h-1zM543 107h1v1h-1zM545 107h1v1h-1zM547 107h1v1h-1zM549 107h1v1h-1zM551 107h1v1h-1zM553 107h1v1h-1zM555 107h1v1h-1zM557 107h1v1h-1zM559 107h1v1h-1zM561 107h1v1h-1zM563 107h1v1h-1zM565 107h1v1h-1zM567 107h1v1h-1zM569 107h1v1h-1zM571 107h1v1h-1zM573 107h1v1h-1zM575 107h1v1h-1zM577 107h1v1h-1zM579 107h1v1h-1zM581 107h1v1h-1zM583 107h1v1h-1zM585 107h1v1h-1zM587 107h1v1h-1zM589 107h1v1h-1zM591 107h1v1h-1zM593 107h1v1h-1zM595 107h1v1h-1zM597 107h1v1h-1zM599 107h1v1h-1zM601 107h1v1h-1zM603 107h1v1h-1zM605 107h1v1h-1zM607 107h1v1h-1zM609 107h1v1h-1zM611 107h1v1h-1zM613 107h1v1h-1zM615 107h1v1h-1zM617 107h1v1h-1zM619 107h1v1h-1zM621 107h1v1h-1zM623 107h1v1h-1zM625 107h1v1h-1zM627 107h1v1h-1zM629 107h1v1h-1zM631 107h1v1h-1zM633 107h1v1h-1zM635 107h1v1h-1zM637 107h1v1h-1zM639 107h1v1h-1zM641 107h1v1h-1zM643 107h1v1h-1zM645 107h1v1h-1zM647 107h1v1h-1zM649 107h1v1h-1zM651 107h1v1h-1zM653 107h1v1h-1zM655 107h1v1h-1zM657 107h1v1h-1zM659 107h1v1h-1zM661 107h1v1h-1zM663 107h1v1h-1zM665 107h1v1h-1zM667 107h1v1h-1zM669 107h1v1h-1zM671 107h1v1h-1zM673 107h1v1h-1zM675 107h1v1h-1zM677 107h1v1h-1zM679 107h1v1h-1zM681 107h1v1h-1zM683 107h1v1h-1zM685 107h1v1h-1zM687 107h1v1h-1zM689 107h1v1h-1zM691 107h1v1h-1zM693 107h1v1h-1zM695 107h1v1h-1zM697 107h1v1h-1zM699 107h1v1h-1zM701 107h1v1h-1zM703 107h1v1h-1zM705 107h1v1h-1zM707 107h1v1h-1zM709 107h1v1h-1zM711 107h1v1h-1zM713 107h1v1h-1zM715 107h1v1h-1zM717 107h1v1h-1zM719 107h1v1h-1zM721 107h1v1h-1zM723 107h1v1h-1zM725 107h1v1h-1zM727 107h1v1h-1zM729 107h1v1h-1zM731 107h1v1h-1zM733 107h1v1h-1zM735 107h1v1h-1zM737 107h1v1h-1zM739 107h1v1h-1zM741 107h1v1h-1zM743 107h1v1h-1zM745 107h1v1h-1zM747 107h1v1h-1zM749 107h1v1h-1zM751 107h1v1h-1zM753 107h1v1h-1zM755 107h1v1h-1zM757 107h1v1h-1zM759 107h1v1h-1zM761 107h1v1h-1zM763 107h1v1h-1zM765 107h1v1h-1zM767 107h1v1h-1zM769 107h1v1h-1zM771 107h1v1h-1zM773 107h1v1h-1zM775 107h1v1h-1zM777 107h1v1h-1zM779 107h1v1h-1zM781 107h1v1h-1zM783 107h1v1h-1zM785 107h1v1h-1zM787 107h1v1h-1z" fill="#c4c4c4"/><path d="M19 119h1v1h-1zM21 119h1v1h-1zM23 119h1v1h-1zM25 119h1v1h-1zM27 119h1v1h-1zM29 119h1v1h-1zM31 119h1v1h-1zM33 119h1v1h-1zM35 119h1v1h-1zM37 119h1v1h-1zM39 119h1v1h-1zM41 119h1v1h-1zM43 119h1v1h-1zM45 119h1v1h-1zM47 119h1v1h-1zM49 119h1v1h-1zM51 119h1v1h-1zM53 119h1v1h-1zM55 119h1v1h-1zM57 119h1v1h-1zM59 119h1v1h-1zM61 119h1v1h-1zM63 119h1v1h-1zM65 119h1v1h-1zM67 119h1v1h-1zM69 119h1v1h-1zM71 119h1v1h-1zM73 119h1v1h-1zM75 119h1v1h-1zM77 119h1v1h-1zM79 119h1v1h-1zM81 119h1v1h-1zM83 119h1v1h-1zM85 119h1v1h-1zM87 119h1v1h-1zM89 119h1v1h-1zM91 119h1v1h-1zM93 119h1v1h-1zM95 119h1v1h-1zM97 119h1v1h-1zM99 119h1v1h-1zM101 119h1v1h-1zM103 119h1v1h-1zM105 119h1v1h-1zM107 119h1v1h-1zM109 119h1v1h-1zM111 119h1v1h-1zM113 119h1v1h-1zM115 119h1v1h-1zM117 119h1v1h-1zM119 119h1v1h-1zM121 119h1v1h-1zM123 119h1v1h-1zM125 119h1v1h-1zM127 119h1v1h-1zM129 119h1v1h-1zM131 119h1v1h-1zM133 119h1v1h-1zM135 119h1v1h-1zM137 119h1v1h-1zM139 119h1v1h-1zM141 119h1v1h-1zM143 119h1v1h-1zM145 119h1v1h-1zM147 119h1v1h-1zM149 119h1v1h-1zM151 119h1v1h-1zM153 119h1v1h-1zM155 119h1v1h-1zM157 119h1v1h-1zM159 119h1v1h-1zM161 119h1v1h-1zM163 119h1v1h-1zM165 119h1v1h-1zM167 119h1v1h-1zM169 119h1v1h-1zM171 119h1v1h-1zM173 119h1v1h-1zM175 119h1v1h-1zM177 119h1v1h-1zM179 119h1v1h-1zM181 119h1v1h-1zM183 119h1v1h-1zM185 119h1v1h-1zM187 119h1v1h-1zM189 119h1v1h-1zM191 119h1v1h-1zM193 119h1v1h-1zM195 119h1v1h-1zM197 119h1v1h-1zM199 119h1v1h-1zM201 119h1v1h-1zM203 119h1v1h-1zM205 119h1v1h-1zM207 119h1v1h-1zM209 119h1v1h-1zM211 119h1v1h-1zM213 119h1v1h-1zM215 119h1v1h-1zM217 119h1v1h-1zM219 119h1v1h-1zM221 119h1v1h-1zM223 119h1v1h-1zM225 119h1v1h-1zM227 119h1v1h-1zM229 119h1v1h-1zM231 119h1v1h-1zM233 119h1v1h-1zM235 119h1v1h-1zM237 119h1v1h-1zM239 119h1v1h-1zM241 119h1v1h-1zM243 119h1v1h-1zM245 119h1v1h-1zM247 119h1v1h-1zM249 119h1v1h-1zM251 119h1v1h-1zM253 119h1v1h-1zM255 119h1v1h-1zM257 119h1v1h-1zM259 119h1v1h-1zM261 119h1v1h-1zM263 119h1v1h-1zM265 119h1v1h-1zM267 119h1v1h-1zM269 119h1v1h-1zM271 119h1v1h-1zM273 119h1v1h-1zM275 119h1v1h-1zM277 119h1v1h-1zM279 119h1v1h-1zM281 119h1v1h-1zM283 119h1v1h-1zM285 119h1v1h-1zM287 119h1v1h-1zM289 119h1v1h-1zM291 119h1v1h-1zM293 119h1v1h-1zM295 119h1v1h-1zM297 119h1v1h-1zM299 119h1v1h-1zM301 119h1v1h-1zM303 119h1v1h-1zM305 119h1v1h-1zM307 119h1v1h-1zM309 119h1v1h-1zM311 119h1v1h-1zM313 119h1v1h-1zM315 119h1v1h-1zM317 119h1v1h-1zM319 119h1v1h-1zM321 119h1v1h-1zM323 119h1v1h-1zM325 119h1v1h-1zM327 119h1v1h-1zM329 119h1v1h-1zM331 119h1v1h-1zM333 119h1v1h-1zM335 119h1v1h-1zM337 119h1v1h-1zM339 119h1v1h-1zM341 119h1v1h-1zM343 119h1v1h-1zM345 119h1v1h-1zM347 119h1v1h-1zM349 119h1v1h-1zM351 119h1v1h-1zM353 119h1v1h-1zM355 119h1v1h-1zM357 119h1v1h-1zM359 119h1v1h-1zM361 119h1v1h-1zM363 119h1v1h-1zM365 119h1v1h-1zM367 119h1v1h-1zM369 119h1v1h-1zM371 119h1v1h-1zM373 119h1v1h-1zM375 119h1v1h-1zM377 119h1v1h-1zM379 119h1v1h-1zM381 119h1v1h-1zM383 119h1v1h-1zM385 119h1v1h-1zM387 119h1v1h-1zM389 119h1v1h-1zM391 119h1v1h-1zM393 119h1v1h-1zM395 119h1v1h-1zM397 119h1v1h-1zM399 119h1v1h-1zM401 119h1v1h-1zM405 119h1v1h-1zM407 119h1v1h-1zM409 119h1v1h-1zM411 119h1v1h-1zM413 119h1v1h-1zM415 119h1v1h-1zM417 119h1v1h-1zM419 119h1v1h-1zM421 119h1v1h-1zM423 119h1v1h-1zM425 119h1v1h-1zM427 119h1v1h-1zM429 119h1v1h-1zM431 119h1v1h-1zM433 119h1v1h-1zM435 119h1v1h-1zM437 119h1v1h-1zM439 119h1v1h-1zM441 119h1v1h-1zM443 119h1v1h-1zM445 119h1v1h-1zM447 119h1v1h-1zM449 119h1v1h-1zM451 119h1v1h-1zM453 119h1v1h-1zM455 119h1v1h-1zM457 119h1v1h-1zM459 119h1v1h-1zM461 119h1v1h-1zM463 119h1v1h-1zM465 119h1v1h-1zM467 119h1v1h-1zM469 119h1v1h-1zM471 119h1v1h-1zM473 119h1v1h-1zM475 119h1v1h-1zM477 119h1v1h-1zM479 119h1v1h-1zM481 119h1v1h-1zM483 119h1v1h-1zM485 119h1v1h-1zM487 119h1v1h-1zM489 119h1v1h-1zM491 119h1v1h-1zM493 119h1v1h-1zM495 119h1v1h-1zM497 119h1v1h-1zM499 119h1v1h-1zM501 119h1v1h-1zM503 119h1v1h-1zM505 119h1v1h-1zM507 119h1v1h-1zM509 119h1v1h-1zM511 119h1v1h-1zM513 119h1v1h-1zM515 119h1v1h-1zM517 119h1v1h-1zM519 119h1v1h-1zM521 119h1v1h-1zM523 119h1v1h-1zM525 119h1v1h-1zM527 119h1v1h-1zM529 119h1v1h-1zM531 119h1v1h-1zM533 119h1v1h-1zM535 119h1v1h-1zM537 119h1v1h-1zM539 119h1v1h-1zM541 119h1v1h-1zM543 119h1v1h-1zM545 119h1v1h-1zM547 119h1v1h-1zM549 119h1v1h-1zM551 119h1v1h-1zM553 119h1v1h-1zM555 119h1v1h-1zM557 119h1v1h-1zM559 119h1v1h-1zM561 119h1v1h-1zM563 119h1v1h-1zM565 119h1v1h-1zM567 119h1v1h-1zM569 119h1v1h-1zM571 119h1v1h-1zM573 119h1v1h-1zM575 119h1v1h-1zM577 119h1v1h-1zM579 119h1v1h-1zM581 119h1v1h-1zM583 119h1v1h-1zM585 119h1v1h-1zM587 119h1v1h-1zM589 119h1v1h-1zM591 119h1v1h-1zM593 119h1v1h-1zM595 119h1v1h-1zM597 119h1v1h-1zM599 119h1v1h-1zM601 119h1v1h-1zM603 119h1v1h-1zM605 119h1v1h-1zM607 119h1v1h-1zM609 119h1v1h-1zM611 119h1v1h-1zM613 119h1v1h-1zM615 119h1v1h-1zM617 119h1v1h-1zM619 119h1v1h-1zM621 119h1v1h-1zM623 119h1v1h-1zM625 119h1v1h-1zM627 119h1v1h-1zM629 119h1v1h-1zM631 119h1v1h-1zM633 119h1v1h-1zM635 119h1v1h-1zM637 119h1v1h-1zM639 119h1v1h-1zM641 119h1v1h-1zM643 119h1v1h-1zM645 119h1v1h-1zM647 119h1v1h-1zM649 119h1v1h-1zM651 119h1v1h-1zM653 119h1v1h-1zM655 119h1v1h-1zM657 119h1v1h-1zM659 119h1v1h-1zM661 119h1v1h-1zM663 119h1v1h-1zM665 119h1v1h-1zM667 119h1v1h-1zM669 119h1v1h-1zM671 119h1v1h-1zM673 119h1v1h-1zM675 119h1v1h-1zM677 119h1v1h-1zM679 119h1v1h-1zM681 119h1v1h-1zM683 119h1v1h-1zM685 119h1v1h-1zM687 119h1v1h-1zM689 119h1v1h-1zM691 119h1v1h-1zM693 119h1v1h-1zM695 119h1v1h-1zM697 119h1v1h-1zM699 119h1v1h-1zM701 119h1v1h-1zM703 119h1v1h-1zM705 119h1v1h-1zM707 119h1v1h-1zM709 119h1v1h-1zM711 119h1v1h-1zM713 119h1v1h-1zM715 119h1v1h-1zM717 119h1v1h-1zM719 119h1v1h-1zM721 119h1v1h-1zM723 119h1v1h-1zM725 119h1v1h-1zM727 119h1v1h-1zM729 119h1v1h-1zM731 119h1v1h-1zM733 119h1v1h-1zM735 119h1v1h-1zM737 119h1v1h-1zM739 119h1v1h-1zM741 119h1v1h-1zM743 119h1v1h-1zM745 119h1v1h-1zM747 119h1v1h-1zM749 119h1v1h-1zM751 119h1v1h-1zM753 119h1v1h-1zM755 119h1v1h-1zM757 119h1v1h-1zM759 119h1v1h-1zM761 119h1v1h-1zM763 119h1v1h-1zM765 119h1v1h-1zM767 119h1v1h-1zM769 119h1v1h-1zM771 119h1v1h-1zM773 119h1v1h-1zM775 119h1v1h-1zM777 119h1v1h-1zM779 119h1v1h-1zM781 119h1v1h-1zM783 119h1v1h-1zM785 119h1v1h-1zM787 119h1v1h-1z" fill="#c4c4c4"/><rect x="17" y="84" width="772" height="1" fill="#c4c4c4"/><rect x="403" y="38" width="1" height="92" fill="#c4c4c4"/><path d="M94 40h1v1h-1zM94 42h1v1h-1zM94 44h1v1h-1zM94 46h1v1h-1zM94 48h1v1h-1zM94 50h1v1h-1zM94 52h1v1h-1zM94 54h1v1h-1zM94 56h1v1h-1zM94 58h1v1h-1zM94 60h1v1h-1zM94 62h1v1h-1zM94 64h1v1h-1zM94 66h1v1h-1zM94 68h1v1h-1zM94 70h1v1h-1zM94 72h1v1h-1zM94 74h1v1h-1zM94 76h1v1h-1zM94 78h1v1h-1zM94 80h1v1h-1zM94 82h1v1h-1zM94 84h1v1h-1zM94 86h1v1h-1zM94 88h1v1h-1zM94 90h1v1h-1zM94 92h1v1h-1zM94 94h1v1h-1zM94 96h1v1h-1zM94 98h1v1h-1zM94 100h1v1h-1zM94 102h1v1h-1zM94 104h1v1h-1zM94 106h1v1h-1zM94 108h1v1h-1zM94 110h1v1h-1zM94 112h1v1h-1zM94 114h1v1h-1zM94 116h1v1h-1zM94 118h1v1h-1zM94 120h1v1h-1zM94 122h1v1h-1zM94 124h1v1h-1zM94 126h1v1h-1zM94 128h1v1h-1z" fill="#c4c4c4"/><path d="M171 40h1v1h-1zM171 42h1v1h-1zM171 44h1v1h-1zM171 46h1v1h-1zM171 48h1v1h-1zM171 50h1v1h-1zM171 52h1v1h-1zM171 54h1v1h-1zM171 56h1v1h-1zM171 58h1v1h-1zM171 60h1v1h-1zM171 62h1v1h-1zM171 64h1v1h-1zM171 66h1v1h-1zM171 68h1v1h-1zM171 70h1v1h-1zM171 72h1v1h-1zM171 74h1v1h-1zM171 76h1v1h-1zM171 78h1v1h-1zM171 80h1v1h-1zM171 82h1v1h-1zM171 84h1v1h-1zM171 86h1v1h-1zM171 88h1v1h-1zM171 90h1v1h-1zM171 92h1v1h-1zM171 94h1v1h-1zM171 96h1v1h-1zM171 98h1v1h-1zM171 100h1v1h-1zM171 102h1v1h-1zM171 104h1v1h-1zM171 106h1v1h-1zM171 108h1v1h-1zM171 110h1v1h-1zM171 112h1v1h-1zM171 114h1v1h-1zM171 116h1v1h-1zM171 118h1v1h-1zM171 120h1v1h-1zM171 122h1v1h-1zM171 124h1v1h-1zM171 126h1v1h-1zM171 128h1v1h-1z" fill="#c4c4c4"/><path d="M248 40h1v1h-1zM248 42h1v1h-1zM248 44h1v1h-1zM248 46h1v1h-1zM248 48h1v1h-1zM248 50h1v1h-1zM248 52h1v1h-1zM248 54h1v1h-1zM248 56h1v1h-1zM248 58h1v1h-1zM248 60h1v1h-1zM248 62h1v1h-1zM248 64h1v1h-1zM248 66h1v1h-1zM248 68h1v1h-1zM248 70h1v1h-1zM248 72h1v1h-1zM248 74h1v1h-1zM248 76h1v1h-1zM248 78h1v1h-1zM248 80h1v1h-1zM248 82h1v1h-1zM248 84h1v1h-1zM248 86h1v1h-1zM248 88h1v1h-1zM248 90h1v1h-1zM248 92h1v1h-1zM248 94h1v1h-1zM248 96h1v1h-1zM248 98h1v1h-1zM248 100h1v1h-1zM248 102h1v1h-1zM248 104h1v1h-1zM248 106h1v1h-1zM248 108h1v1h-1zM248 110h1v1h-1zM248 112h1v1h-1zM248 114h1v1h-1zM248 116h1v1h-1zM248 118h1v1h-1zM248 120h1v1h-1zM248 122h1v1h-1zM248 124h1v1h-1zM248 126h1v1h-1zM248 128h1v1h-1z" fill="#c4c4c4"/><path d="M326 40h1v1h-1zM326 42h1v1h-1zM326 44h1v1h-1zM326 46h1v1h-1zM326 48h1v1h-1zM326 50h1v1h-1zM326 52h1v1h-1zM326 54h1v1h-1zM326 56h1v1h-1zM326 58h1v1h-1zM326 60h1v1h-1zM326 62h1v1h-1zM326 64h1v1h-1zM326 66h1v1h-1zM326 68h1v1h-1zM326 70h1v1h-1zM326 72h1v1h-1zM326 74h1v1h-1zM326 76h1v1h-1zM326 78h1v1h-1zM326 80h1v1h-1zM326 82h1v1h-1zM326 84h1v1h-1zM326 86h1v1h-1zM326 88h1v1h-1zM326 90h1v1h-1zM326 92h1v1h-1zM326 94h1v1h-1zM326 96h1v1h-1zM326 98h1v1h-1zM326 100h1v1h-1zM326 102h1v1h-1zM326 104h1v1h-1zM326 106h1v1h-1zM326 108h1v1h-1zM326 110h1v1h-1zM326 112h1v1h-1zM326 114h1v1h-1zM326 116h1v1h-1zM326 118h1v1h-1zM326 120h1v1h-1zM326 122h1v1h-1zM326 124h1v1h-1zM326 126h1v1h-1zM326 128h1v1h-1z" fill="#c4c4c4"/><path d="M480 40h1v1h-1zM480 42h1v1h-1zM480 44h1v1h-1zM480 46h1v1h-1zM480 48h1v1h-1zM480 50h1v1h-1zM480 52h1v1h-1zM480 54h1v1h-1zM480 56h1v1h-1zM480 58h1v1h-1zM480 60h1v1h-1zM480 62h1v1h-1zM480 64h1v1h-1zM480 66h1v1h-1zM480 68h1v1h-1zM480 70h1v1h-1zM480 72h1v1h-1zM480 74h1v1h-1zM480 76h1v1h-1zM480 78h1v1h-1zM480 80h1v1h-1zM480 82h1v1h-1zM480 84h1v1h-1zM480 86h1v1h-1zM480 88h1v1h-1zM480 90h1v1h-1zM480 92h1v1h-1zM480 94h1v1h-1zM480 96h1v1h-1zM480 98h1v1h-1zM480 100h1v1h-1zM480 102h1v1h-1zM480 104h1v1h-1zM480 106h1v1h-1zM480 108h1v1h-1zM480 110h1v1h-1zM480 112h1v1h-1zM480 114h1v1h-1zM480 116h1v1h-1zM480 118h1v1h-1zM480 120h1v1h-1zM480 122h1v1h-1zM480 124h1v1h-1zM480 126h1v1h-1zM480 128h1v1h-1z" fill="#c4c4c4"/><path d="M558 40h1v1h-1zM558 42h1v1h-1zM558 44h1v1h-1zM558 46h1v1h-1zM558 48h1v1h-1zM558 50h1v1h-1zM558 52h1v1h-1zM558 54h1v1h-1zM558 56h1v1h-1zM558 58h1v1h-1zM558 60h1v1h-1zM558 62h1v1h-1zM558 64h1v1h-1zM558 66h1v1h-1zM558 68h1v1h-1zM558 70h1v1h-1zM558 72h1v1h-1zM558 74h1v1h-1zM558 76h1v1h-1zM558 78h1v1h-1zM558 80h1v1h-1zM558 82h1v1h-1zM558 84h1v1h-1zM558 86h1v1h-1zM558 88h1v1h-1zM558 90h1v1h-1zM558 92h1v1h-1zM558 94h1v1h-1zM558 96h1v1h-1zM558 98h1v1h-1zM558 100h1v1h-1zM558 102h1v1h-1zM558 104h1v1h-1zM558 106h1v1h-1zM558 108h1v1h-1zM558 110h1v1h-1zM558 112h1v1h-1zM558 114h1v1h-1zM558 116h1v1h-1zM558 118h1v1h-1zM558 120h1v1h-1zM558 122h1v1h-1zM558 124h1v1h-1zM558 126h1v1h-1zM558 128h1v1h-1z" fill="#c4c4c4"/><path d="M635 40h1v1h-1zM635 42h1v1h-1zM635 44h1v1h-1zM635 46h1v1h-1zM635 48h1v1h-1zM635 50h1v1h-1zM635 52h1v1h-1zM635 54h1v1h-1zM635 56h1v1h-1zM635 58h1v1h-1zM635 60h1v1h-1zM635 62h1v1h-1zM635 64h1v1h-1zM635 66h1v1h-1zM635 68h1v1h-1zM635 70h1v1h-1zM635 72h1v1h-1zM635 74h1v1h-1zM635 76h1v1h-1zM635 78h1v1h-1zM635 80h1v1h-1zM635 82h1v1h-1zM635 84h1v1h-1zM635 86h1v1h-1zM635 88h1v1h-1zM635 90h1v1h-1zM635 92h1v1h-1zM635 94h1v1h-1zM635 96h1v1h-1zM635 98h1v1h-1zM635 100h1v1h-1zM635 102h1v1h-1zM635 104h1v1h-1zM635 106h1v1h-1zM635 108h1v1h-1zM635 110h1v1h-1zM635 112h1v1h-1zM635 114h1v1h-1zM635 116h1v1h-1zM635 118h1v1h-1zM635 120h1v1h-1zM635 122h1v1h-1zM635 124h1v1h-1zM635 126h1v1h-1zM635 128h1v1h-1z" fill="#c4c4c4"/><path d="M712 40h1v1h-1zM712 42h1v1h-1zM712 44h1v1h-1zM712 46h1v1h-1zM712 48h1v1h-1zM712 50h1v1h-1zM712 52h1v1h-1zM712 54h1v1h-1zM712 56h1v1h-1zM712 58h1v1h-1zM712 60h1v1h-1zM712 62h1v1h-1zM712 64h1v1h-1zM712 66h1v1h-1zM712 68h1v1h-1zM712 70h1v1h-1zM712 72h1v1h-1zM712 74h1v1h-1zM712 76h1v1h-1zM712 78h1v1h-1zM712 80h1v1h-1zM712 82h1v1h-1zM712 84h1v1h-1zM712 86h1v1h-1zM712 88h1v1h-1zM712 90h1v1h-1zM712 92h1v1h-1zM712 94h1v1h-1zM712 96h1v1h-1zM712 98h1v1h-1zM712 100h1v1h-1zM712 102h1v1h-1zM712 104h1v1h-1zM712 106h1v1h-1zM712 108h1v1h-1zM712 110h1v1h-1zM712 112h1v1h-1zM712 114h1v1h-1zM712 116h1v1h-1zM712 118h1v1h-1zM712 120h1v1h-1zM712 122h1v1h-1zM712 124h1v1h-1zM712 126h1v1h-1zM712 128h1v1h-1z" fill="#c4c4c4"/><path d="M32 82h1v5h-1zM47 82h1v5h-1zM63 82h1v5h-1zM78 82h1v5h-1zM94 82h1v5h-1zM109 82h1v5h-1zM125 82h1v5h-1zM140 82h1v5h-1zM156 82h1v5h-1zM171 82h1v5h-1zM187 82h1v5h-1zM202 82h1v5h-1zM217 82h1v5h-1zM233 82h1v5h-1zM248 82h1v5h-1zM264 82h1v5h-1zM279 82h1v5h-1zM295 82h1v5h-1zM310 82h1v5h-1zM326 82h1v5h-1zM341 82h1v5h-1zM357 82h1v5h-1zM372 82h1v5h-1zM388 82h1v5h-1zM418 82h1v5h-1zM434 82h1v5h-1zM449 82h1v5h-1zM465 82h1v5h-1zM480 82h1v5h-1zM496 82h1v5h-1zM511 82h1v5h-1zM527 82h1v5h-1zM542 82h1v5h-1zM558 82h1v5h-1zM573 82h1v5h-1zM589 82h1v5h-1zM604 82h1v5h-1zM619 82h1v5h-1zM635 82h1v5h-1zM650 82h1v5h-1zM666 82h1v5h-1zM681 82h1v5h-1zM697 82h1v5h-1zM712 82h1v5h-1zM728 82h1v5h-1zM743 82h1v5h-1zM759 82h1v5h-1zM774 82h1v5h-1z" fill="#c4c4c4"/><path d="M32 55h1v1h-1zM32 113h1v1h-1zM47 55h1v1h-1zM47 113h1v1h-1zM63 55h1v1h-1zM63 113h1v1h-1zM78 55h1v1h-1zM78 113h1v1h-1zM109 55h1v1h-1zM109 113h1v1h-1zM125 55h1v1h-1zM125 113h1v1h-1zM140 55h1v1h-1zM140 113h1v1h-1zM156 55h1v1h-1zM156 113h1v1h-1zM187 55h1v1h-1zM187 113h1v1h-1zM202 55h1v1h-1zM202 113h1v1h-1zM217 55h1v1h-1zM217 113h1v1h-1zM233 55h1v1h-1zM233 113h1v1h-1zM264 55h1v1h-1zM264 113h1v1h-1zM279 55h1v1h-1zM279 113h1v1h-1zM295 55h1v1h-1zM295 113h1v1h-1zM310 55h1v1h-1zM310 113h1v1h-1zM341 55h1v1h-1zM341 113h1v1h-1zM357 55h1v1h-1zM357 113h1v1h-1zM372 55h1v1h-1zM372 113h1v1h-1zM388 55h1v1h-1zM388 113h1v1h-1zM418 55h1v1h-1zM418 113h1v1h-1zM434 55h1v1h-1zM434 113h1v1h-1zM449 55h1v1h-1zM449 113h1v1h-1zM465 55h1v1h-1zM465 113h1v1h-1zM496 55h1v1h-1zM496 113h1v1h-1zM511 55h1v1h-1zM511 113h1v1h-1zM527 55h1v1h-1zM527 113h1v1h-1zM542 55h1v1h-1zM542 113h1v1h-1zM573 55h1v1h-1zM573 113h1v1h-1zM589 55h1v1h-1zM589 113h1v1h-1zM604 55h1v1h-1zM604 113h1v1h-1zM619 55h1v1h-1zM619 113h1v1h-1zM650 55h1v1h-1zM650 113h1v1h-1zM666 55h1v1h-1zM666 113h1v1h-1zM681 55h1v1h-1zM681 113h1v1h-1zM697 55h1v1h-1zM697 113h1v1h-1zM728 55h1v1h-1zM728 113h1v1h-1zM743 55h1v1h-1zM743 113h1v1h-1zM759 55h1v1h-1zM759 113h1v1h-1zM774 55h1v1h-1zM774 113h1v1h-1z" fill="#c4c4c4"/><rect x="17.5" y="143.5" width="772" height="93" fill="none" stroke="#c4c4c4" stroke-width="1"/><path d="M19 154h1v1h-1zM21 154h1v1h-1zM23 154h1v1h-1zM25 154h1v1h-1zM27 154h1v1h-1zM29 154h1v1h-1zM31 154h1v1h-1zM33 154h1v1h-1zM35 154h1v1h-1zM37 154h1v1h-1zM39 154h1v1h-1zM41 154h1v1h-1zM43 154h1v1h-1zM45 154h1v1h-1zM47 154h1v1h-1zM49 154h1v1h-1zM51 154h1v1h-1zM53 154h1v1h-1zM55 154h1v1h-1zM57 154h1v1h-1zM59 154h1v1h-1zM61 154h1v1h-1zM63 154h1v1h-1zM65 154h1v1h-1zM67 154h1v1h-1zM69 154h1v1h-1zM71 154h1v1h-1zM73 154h1v1h-1zM75 154h1v1h-1zM77 154h1v1h-1zM79 154h1v1h-1zM81 154h1v1h-1zM83 154h1v1h-1zM85 154h1v1h-1zM87 154h1v1h-1zM89 154h1v1h-1zM91 154h1v1h-1zM93 154h1v1h-1zM95 154h1v1h-1zM97 154h1v1h-1zM99 154h1v1h-1zM101 154h1v1h-1zM103 154h1v1h-1zM105 154h1v1h-1zM107 154h1v1h-1zM109 154h1v1h-1zM111 154h1v1h-1zM113 154h1v1h-1zM115 154h1v1h-1zM117 154h1v1h-1zM119 154h1v1h-1zM121 154h1v1h-1zM123 154h1v1h-1zM125 154h1v1h-1zM127 154h1v1h-1zM129 154h1v1h-1zM131 154h1v1h-1zM133 154h1v1h-1zM135 154h1v1h-1zM137 154h1v1h-1zM139 154h1v1h-1zM141 154h1v1h-1zM143 154h1v1h-1zM145 154h1v1h-1zM147 154h1v1h-1zM149 154h1v1h-1zM151 154h1v1h-1zM153 154h1v1h-1zM155 154h1v1h-1zM157 154h1v1h-1zM159 154h1v1h-1zM161 154h1v1h-1zM163 154h1v1h-1zM165 154h1v1h-1zM167 154h1v1h-1zM169 154h1v1h-1zM171 154h1v1h-1zM173 154h1v1h-1zM175 154h1v1h-1zM177 154h1v1h-1zM179 154h1v1h-1zM181 154h1v1h-1zM183 154h1v1h-1zM185 154h1v1h-1zM187 154h1v1h-1zM189 154h1v1h-1zM191 154h1v1h-1zM193 154h1v1h-1zM195 154h1v1h-1zM197 154h1v1h-1zM199 154h1v1h-1zM201 154h1v1h-1zM203 154h1v1h-1zM205 154h1v1h-1zM207 154h1v1h-1zM209 154h1v1h-1zM211 154h1v1h-1zM213 154h1v1h-1zM215 154h1v1h-1zM217 154h1v1h-1zM219 154h1v1h-1zM221 154h1v1h-1zM223 154h1v1h-1zM225 154h1v1h-1zM227 154h1v1h-1zM229 154h1v1h-1zM231 154h1v1h-1zM233 154h1v1h-1zM235 154h1v1h-1zM237 154h1v1h-1zM239 154h1v1h-1zM241 154h1v1h-1zM243 154h1v1h-1zM245 154h1v1h-1zM247 154h1v1h-1zM249 154h1v1h-1zM251 154h1v1h-1zM253 154h1v1h-1zM255 154h1v1h-1zM257 154h1v1h-1zM259 154h1v1h-1zM261 154h1v1h-1zM263 154h1v1h-1zM265 154h1v1h-1zM267 154h1v1h-1zM269 154h1v1h-1zM271 154h1v1h-1zM273 154h1v1h-1zM275 154h1v1h-1zM277 154h1v1h-1zM279 154h1v1h-1zM281 154h1v1h-1zM283 154h1v1h-1zM285 154h1v1h-1zM287 154h1v1h-1zM289 154h1v1h-1zM291 154h1v1h-1zM293 154h1v1h-1zM295 154h1v1h-1zM297 154h1v1h-1zM299 154h1v1h-1zM301 154h1v1h-1zM303 154h1v1h-1zM305 154h1v1h-1zM307 154h1v1h-1zM309 154h1v1h-1zM311 154h1v1h-1zM313 154h1v1h-1zM315 154h1v1h-1zM317 154h1v1h-1zM319 154h1v1h-1zM321 154h1v1h-1zM323 154h1v1h-1zM325 154h1v1h-1zM327 154h1v1h-1zM329 154h1v1h-1zM331 154h1v1h-1zM333 154h1v1h-1zM335 154h1v1h-1zM337 154h1v1h-1zM339 154h1v1h-1zM341 154h1v1h-1zM343 154h1v1h-1zM345 154h1v1h-1zM347 154h1v1h-1zM349 154h1v1h-1zM351 154h1v1h-1zM353 154h1v1h-1zM355 154h1v1h-1zM357 154h1v1h-1zM359 154h1v1h-1zM361 154h1v1h-1zM363 154h1v1h-1zM365 154h1v1h-1zM367 154h1v1h-1zM369 154h1v1h-1zM371 154h1v1h-1zM373 154h1v1h-1zM375 154h1v1h-1zM377 154h1v1h-1zM379 154h1v1h-1zM381 154h1v1h-1zM383 154h1v1h-1zM385 154h1v1h-1zM387 154h1v1h-1zM389 154h1v1h-1zM391 154h1v1h-1zM393 154h1v1h-1zM395 154h1v1h-1zM397 154h1v1h-1zM399 154h1v1h-1zM401 154h1v1h-1zM405 154h1v1h-1zM407 154h1v1h-1zM409 154h1v1h-1zM411 154h1v1h-1zM413 154h1v1h-1zM415 154h1v1h-1zM417 154h1v1h-1zM419 154h1v1h-1zM421 154h1v1h-1zM423 154h1v1h-1zM425 154h1v1h-1zM427 154h1v1h-1zM429 154h1v1h-1zM431 154h1v1h-1zM433 154h1v1h-1zM435 154h1v1h-1zM437 154h1v1h-1zM439 154h1v1h-1zM441 154h1v1h-1zM443 154h1v1h-1zM445 154h1v1h-1zM447 154h1v1h-1zM449 154h1v1h-1zM451 154h1v1h-1zM453 154h1v1h-1zM455 154h1v1h-1zM457 154h1v1h-1zM459 154h1v1h-1zM461 154h1v1h-1zM463 154h1v1h-1zM465 154h1v1h-1zM467 154h1v1h-1zM469 154h1v1h-1zM471 154h1v1h-1zM473 154h1v1h-1zM475 154h1v1h-1zM477 154h1v1h-1zM479 154h1v1h-1zM481 154h1v1h-1zM483 154h1v1h-1zM485 154h1v1h-1zM487 154h1v1h-1zM489 154h1v1h-1zM491 154h1v1h-1zM493 154h1v1h-1zM495 154h1v1h-1zM497 154h1v1h-1zM499 154h1v1h-1zM501 154h1v1h-1zM503 154h1v1h-1zM505 154h1v1h-1zM507 154h1v1h-1zM509 154h1v1h-1zM511 154h1v1h-1zM513 154h1v1h-1zM515 154h1v1h-1zM517 154h1v1h-1zM519 154h1v1h-1zM521 154h1v1h-1zM523 154h1v1h-1zM525 154h1v1h-1zM527 154h1v1h-1zM529 154h1v1h-1zM531 154h1v1h-1zM533 154h1v1h-1zM535 154h1v1h-1zM537 154h1v1h-1zM539 154h1v1h-1zM541 154h1v1h-1zM543 154h1v1h-1zM545 154h1v1h-1zM547 154h1v1h-1zM549 154h1v1h-1zM551 154h1v1h-1zM553 154h1v1h-1zM555 154h1v1h-1zM557 154h1v1h-1zM559 154h1v1h-1zM561 154h1v1h-1zM563 154h1v1h-1zM565 154h1v1h-1zM567 154h1v1h-1zM569 154h1v1h-1zM571 154h1v1h-1zM573 154h1v1h-1zM575 154h1v1h-1zM577 154h1v1h-1zM579 154h1v1h-1zM581 154h1v1h-1zM583 154h1v1h-1zM585 154h1v1h-1zM587 154h1v1h-1zM589 154h1v1h-1zM591 154h1v1h-1zM593 154h1v1h-1zM595 154h1v1h-1zM597 154h1v1h-1zM599 154h1v1h-1zM601 154h1v1h-1zM603 154h1v1h-1zM605 154h1v1h-1zM607 154h1v1h-1zM609 154h1v1h-1zM611 154h1v1h-1zM613 154h1v1h-1zM615 154h1v1h-1zM617 154h1v1h-1zM619 154h1v1h-1zM621 154h1v1h-1zM623 154h1v1h-1zM625 154h1v1h-1zM627 154h1v1h-1zM629 154h1v1h-1zM631 154h1v1h-1zM633 154h1v1h-1zM635 154h1v1h-1zM637 154h1v1h-1zM639 154h1v1h-1zM641 154h1v1h-1zM643 154h1v1h-1zM645 154h1v1h-1zM647 154h1v1h-1zM649 154h1v1h-1zM651 154h1v1h-1zM653 154h1v1h-1zM655 154h1v1h-1zM657 154h1v1h-1zM659 154h1v1h-1zM661 154h1v1h-1zM663 154h1v1h-1zM665 154h1v1h-1zM667 154h1v1h-1zM669 154h1v1h-1zM671 154h1v1h-1zM673 154h1v1h-1zM675 154h1v1h-1zM677 154h1v1h-1zM679 154h1v1h-1zM681 154h1v1h-1zM683 154h1v1h-1zM685 154h1v1h-1zM687 154h1v1h-1zM689 154h1v1h-1zM691 154h1v1h-1zM693 154h1v1h-1zM695 154h1v1h-1zM697 154h1v1h-1zM699 154h1v1h-1zM701 154h1v1h-1zM703 154h1v1h-1zM705 154h1v1h-1zM707 154h1v1h-1zM709 154h1v1h-1zM711 154h1v1h-1zM713 154h1v1h-1zM715 154h1v1h-1zM717 154h1v1h-1zM719 154h1v1h-1zM721 154h1v1h-1zM723 154h1v1h-1zM725 154h1v1h-1zM727 154h1v1h-1zM729 154h1v1h-1zM731 154h1v1h-1zM733 154h1v1h-1zM735 154h1v1h-1zM737 154h1v1h-1zM739 154h1v1h-1zM741 154h1v1h-1zM743 154h1v1h-1zM745 154h1v1h-1zM747 154h1v1h-1zM749 154h1v1h-1zM751 154h1v1h-1zM753 154h1v1h-1zM755 154h1v1h-1zM757 154h1v1h-1zM759 154h1v1h-1zM761 154h1v1h-1zM763 154h1v1h-1zM765 154h1v1h-1zM767 154h1v1h-1zM769 154h1v1h-1zM771 154h1v1h-1zM773 154h1v1h-1zM775 154h1v1h-1zM777 154h1v1h-1zM779 154h1v1h-1zM781 154h1v1h-1zM783 154h1v1h-1zM785 154h1v1h-1zM787 154h1v1h-1z" fill="#c4c4c4"/><path d="M19 166h1v1h-1zM21 166h1v1h-1zM23 166h1v1h-1zM25 166h1v1h-1zM27 166h1v1h-1zM29 166h1v1h-1zM31 166h1v1h-1zM33 166h1v1h-1zM35 166h1v1h-1zM37 166h1v1h-1zM39 166h1v1h-1zM41 166h1v1h-1zM43 166h1v1h-1zM45 166h1v1h-1zM47 166h1v1h-1zM49 166h1v1h-1zM51 166h1v1h-1zM53 166h1v1h-1zM55 166h1v1h-1zM57 166h1v1h-1zM59 166h1v1h-1zM61 166h1v1h-1zM63 166h1v1h-1zM65 166h1v1h-1zM67 166h1v1h-1zM69 166h1v1h-1zM71 166h1v1h-1zM73 166h1v1h-1zM75 166h1v1h-1zM77 166h1v1h-1zM79 166h1v1h-1zM81 166h1v1h-1zM83 166h1v1h-1zM85 166h1v1h-1zM87 166h1v1h-1zM89 166h1v1h-1zM91 166h1v1h-1zM93 166h1v1h-1zM95 166h1v1h-1zM97 166h1v1h-1zM99 166h1v1h-1zM101 166h1v1h-1zM103 166h1v1h-1zM105 166h1v1h-1zM107 166h1v1h-1zM109 166h1v1h-1zM111 166h1v1h-1zM113 166h1v1h-1zM115 166h1v1h-1zM117 166h1v1h-1zM119 166h1v1h-1zM121 166h1v1h-1zM123 166h1v1h-1zM125 166h1v1h-1zM127 166h1v1h-1zM129 166h1v1h-1zM131 166h1v1h-1zM133 166h1v1h-1zM135 166h1v1h-1zM137 166h1v1h-1zM139 166h1v1h-1zM141 166h1v1h-1zM143 166h1v1h-1zM145 166h1v1h-1zM147 166h1v1h-1zM149 166h1v1h-1zM151 166h1v1h-1zM153 166h1v1h-1zM155 166h1v1h-1zM157 166h1v1h-1zM159 166h1v1h-1zM161 166h1v1h-1zM163 166h1v1h-1zM165 166h1v1h-1zM167 166h1v1h-1zM169 166h1v1h-1zM171 166h1v1h-1zM173 166h1v1h-1zM175 166h1v1h-1zM177 166h1v1h-1zM179 166h1v1h-1zM181 166h1v1h-1zM183 166h1v1h-1zM185 166h1v1h-1zM187 166h1v1h-1zM189 166h1v1h-1zM191 166h1v1h-1zM193 166h1v1h-1zM195 166h1v1h-1zM197 166h1v1h-1zM199 166h1v1h-1zM201 166h1v1h-1zM203 166h1v1h-1zM205 166h1v1h-1zM207 166h1v1h-1zM209 166h1v1h-1zM211 166h1v1h-1zM213 166h1v1h-1zM215 166h1v1h-1zM217 166h1v1h-1zM219 166h1v1h-1zM221 166h1v1h-1zM223 166h1v1h-1zM225 166h1v1h-1zM227 166h1v1h-1zM229 166h1v1h-1zM231 166h1v1h-1zM233 166h1v1h-1zM235 166h1v1h-1zM237 166h1v1h-1zM239 166h1v1h-1zM241 166h1v1h-1zM243 166h1v1h-1zM245 166h1v1h-1zM247 166h1v1h-1zM249 166h1v1h-1zM251 166h1v1h-1zM253 166h1v1h-1zM255 166h1v1h-1zM257 166h1v1h-1zM259 166h1v1h-1zM261 166h1v1h-1zM263 166h1v1h-1zM265 166h1v1h-1zM267 166h1v1h-1zM269 166h1v1h-1zM271 166h1v1h-1zM273 166h1v1h-1zM275 166h1v1h-1zM277 166h1v1h-1zM279 166h1v1h-1zM281 166h1v1h-1zM283 166h1v1h-1zM285 166h1v1h-1zM287 166h1v1h-1zM289 166h1v1h-1zM291 166h1v1h-1zM293 166h1v1h-1zM295 166h1v1h-1zM297 166h1v1h-1zM299 166h1v1h-1zM301 166h1v1h-1zM303 166h1v1h-1zM305 166h1v1h-1zM307 166h1v1h-1zM309 166h1v1h-1zM311 166h1v1h-1zM313 166h1v1h-1zM315 166h1v1h-1zM317 166h1v1h-1zM319 166h1v1h-1zM321 166h1v1h-1zM323 166h1v1h-1zM325 166h1v1h-1zM327 166h1v1h-1zM329 166h1v1h-1zM331 166h1v1h-1zM333 166h1v1h-1zM335 166h1v1h-1zM337 166h1v1h-1zM339 166h1v1h-1zM341 166h1v1h-1zM343 166h1v1h-1zM345 166h1v1h-1zM347 166h1v1h-1zM349 166h1v1h-1zM351 166h1v1h-1zM353 166h1v1h-1zM355 166h1v1h-1zM357 166h1v1h-1zM359 166h1v1h-1zM361 166h1v1h-1zM363 166h1v1h-1zM365 166h1v1h-1zM367 166h1v1h-1zM369 166h1v1h-1zM371 166h1v1h-1zM373 166h1v1h-1zM375 166h1v1h-1zM377 166h1v1h-1zM379 166h1v1h-1zM381 166h1v1h-1zM383 166h1v1h-1zM385 166h1v1h-1zM387 166h1v1h-1zM389 166h1v1h-1zM391 166h1v1h-1zM393 166h1v1h-1zM395 166h1v1h-1zM397 166h1v1h-1zM399 166h1v1h-1zM401 166h1v1h-1zM405 166h1v1h-1zM407 166h1v1h-1zM409 166h1v1h-1zM411 166h1v1h-1zM413 166h1v1h-1zM415 166h1v1h-1zM417 166h1v1h-1zM419 166h1v1h-1zM421 166h1v1h-1zM423 166h1v1h-1zM425 166h1v1h-1zM427 166h1v1h-1zM429 166h1v1h-1zM431 166h1v1h-1zM433 166h1v1h-1zM435 166h1v1h-1zM437 166h1v1h-1zM439 166h1v1h-1zM441 166h1v1h-1zM443 166h1v1h-1zM445 166h1v1h-1zM447 166h1v1h-1zM449 166h1v1h-1zM451 166h1v1h-1zM453 166h1v1h-1zM455 166h1v1h-1zM457 166h1v1h-1zM459 166h1v1h-1zM461 166h1v1h-1zM463 166h1v1h-1zM465 166h1v1h-1zM467 166h1v1h-1zM469 166h1v1h-1zM471 166h1v1h-1zM473 166h1v1h-1zM475 166h1v1h-1zM477 166h1v1h-1zM479 166h1v1h-1zM481 166h1v1h-1zM483 166h1v1h-1zM485 166h1v1h-1zM487 166h1v1h-1zM489 166h1v1h-1zM491 166h1v1h-1zM493 166h1v1h-1zM495 166h1v1h-1zM497 166h1v1h-1zM499 166h1v1h-1zM501 166h1v1h-1zM503 166h1v1h-1zM505 166h1v1h-1zM507 166h1v1h-1zM509 166h1v1h-1zM511 166h1v1h-1zM513 166h1v1h-1zM515 166h1v1h-1zM517 166h1v1h-1zM519 166h1v1h-1zM521 166h1v1h-1zM523 166h1v1h-1zM525 166h1v1h-1zM527 166h1v1h-1zM529 166h1v1h-1zM531 166h1v1h-1zM533 166h1v1h-1zM535 166h1v1h-1zM537 166h1v1h-1zM539 166h1v1h-1zM541 166h1v1h-1zM543 166h1v1h-1zM545 166h1v1h-1zM547 166h1v1h-1zM549 166h1v1h-1zM551 166h1v1h-1zM553 166h1v1h-1zM555 166h1v1h-1zM557 166h1v1h-1zM559 166h1v1h-1zM561 166h1v1h-1zM563 166h1v1h-1zM565 166h1v1h-1zM567 166h1v1h-1zM569 166h1v1h-1zM571 166h1v1h-1zM573 166h1v1h-1zM575 166h1v1h-1zM577 166h1v1h-1zM579 166h1v1h-1zM581 166h1v1h-1zM583 166h1v1h-1zM585 166h1v1h-1zM587 166h1v1h-1zM589 166h1v1h-1zM591 166h1v1h-1zM593 166h1v1h-1zM595 166h1v1h-1zM597 166h1v1h-1zM599 166h1v1h-1zM601 166h1v1h-1zM603 166h1v1h-1zM605 166h1v1h-1zM607 166h1v1h-1zM609 166h1v1h-1zM611 166h1v1h-1zM613 166h1v1h-1zM615 166h1v1h-1zM617 166h1v1h-1zM619 166h1v1h-1zM621 166h1v1h-1zM623 166h1v1h-1zM625 166h1v1h-1zM627 166h1v1h-1zM629 166h1v1h-1zM631 166h1v1h-1zM633 166h1v1h-1zM635 166h1v1h-1zM637 166h1v1h-1zM639 166h1v1h-1zM641 166h1v1h-1zM643 166h1v1h-1zM645 166h1v1h-1zM647 166h1v1h-1zM649 166h1v1h-1zM651 166h1v1h-1zM653 166h1v1h-1zM655 166h1v1h-1zM657 166h1v1h-1zM659 166h1v1h-1zM661 166h1v1h-1zM663 166h1v1h-1zM665 166h1v1h-1zM667 166h1v1h-1zM669 166h1v1h-1zM671 166h1v1h-1zM673 166h1v1h-1zM675 166h1v1h-1zM677 166h1v1h-1zM679 166h1v1h-1zM681 166h1v1h-1zM683 166h1v1h-1zM685 166h1v1h-1zM687 166h1v1h-1zM689 166h1v1h-1zM691 166h1v1h-1zM693 166h1v1h-1zM695 166h1v1h-1zM697 166h1v1h-1zM699 166h1v1h-1zM701 166h1v1h-1zM703 166h1v1h-1zM705 166h1v1h-1zM707 166h1v1h-1zM709 166h1v1h-1zM711 166h1v1h-1zM713 166h1v1h-1zM715 166h1v1h-1zM717 166h1v1h-1zM719 166h1v1h-1zM721 166h1v1h-1zM723 166h1v1h-1zM725 166h1v1h-1zM727 166h1v1h-1zM729 166h1v1h-1zM731 166h1v1h-1zM733 166h1v1h-1zM735 166h1v1h-1zM737 166h1v1h-1zM739 166h1v1h-1zM741 166h1v1h-1zM743 166h1v1h-1zM745 166h1v1h-1zM747 166h1v1h-1zM749 166h1v1h-1zM751 166h1v1h-1zM753 166h1v1h-1zM755 166h1v1h-1zM757 166h1v1h-1zM759 166h1v1h-1zM761 166h1v1h-1zM763 166h1v1h-1zM765 166h1v1h-1zM767 166h1v1h-1zM769 166h1v1h-1zM771 166h1v1h-1zM773 166h1v1h-1zM775 166h1v1h-1zM777 166h1v1h-1zM779 166h1v1h-1zM781 166h1v1h-1zM783 166h1v1h-1zM785 166h1v1h-1zM787 166h1v1h-1z" fill="#c4c4c4"/><path d="M19 178h1v1h-1zM21 178h1v1h-1zM23 178h1v1h-1zM25 178h1v1h-1zM27 178h1v1h-1zM29 178h1v1h-1zM31 178h1v1h-1zM33 178h1v1h-1zM35 178h1v1h-1zM37 178h1v1h-1zM39 178h1v1h-1zM41 178h1v1h-1zM43 178h1v1h-1zM45 178h1v1h-1zM47 178h1v1h-1zM49 178h1v1h-1zM51 178h1v1h-1zM53 178h1v1h-1zM55 178h1v1h-1zM57 178h1v1h-1zM59 178h1v1h-1zM61 178h1v1h-1zM63 178h1v1h-1zM65 178h1v1h-1zM67 178h1v1h-1zM69 178h1v1h-1zM71 178h1v1h-1zM73 178h1v1h-1zM75 178h1v1h-1zM77 178h1v1h-1zM79 178h1v1h-1zM81 178h1v1h-1zM83 178h1v1h-1zM85 178h1v1h-1zM87 178h1v1h-1zM89 178h1v1h-1zM91 178h1v1h-1zM93 178h1v1h-1zM95 178h1v1h-1zM97 178h1v1h-1zM99 178h1v1h-1zM101 178h1v1h-1zM103 178h1v1h-1zM105 178h1v1h-1zM107 178h1v1h-1zM109 178h1v1h-1zM111 178h1v1h-1zM113 178h1v1h-1zM115 178h1v1h-1zM117 178h1v1h-1zM119 178h1v1h-1zM121 178h1v1h-1zM123 178h1v1h-1zM125 178h1v1h-1zM127 178h1v1h-1zM129 178h1v1h-1zM131 178h1v1h-1zM133 178h1v1h-1zM135 178h1v1h-1zM137 178h1v1h-1zM139 178h1v1h-1zM141 178h1v1h-1zM143 178h1v1h-1zM145 178h1v1h-1zM147 178h1v1h-1zM149 178h1v1h-1zM151 178h1v1h-1zM153 178h1v1h-1zM155 178h1v1h-1zM157 178h1v1h-1zM159 178h1v1h-1zM161 178h1v1h-1zM163 178h1v1h-1zM165 178h1v1h-1zM167 178h1v1h-1zM169 178h1v1h-1zM171 178h1v1h-1zM173 178h1v1h-1zM175 178h1v1h-1zM177 178h1v1h-1zM179 178h1v1h-1zM181 178h1v1h-1zM183 178h1v1h-1zM185 178h1v1h-1zM187 178h1v1h-1zM189 178h1v1h-1zM191 178h1v1h-1zM193 178h1v1h-1zM195 178h1v1h-1zM197 178h1v1h-1zM199 178h1v1h-1zM201 178h1v1h-1zM203 178h1v1h-1zM205 178h1v1h-1zM207 178h1v1h-1zM209 178h1v1h-1zM211 178h1v1h-1zM213 178h1v1h-1zM215 178h1v1h-1zM217 178h1v1h-1zM219 178h1v1h-1zM221 178h1v1h-1zM223 178h1v1h-1zM225 178h1v1h-1zM227 178h1v1h-1zM229 178h1v1h-1zM231 178h1v1h-1zM233 178h1v1h-1zM235 178h1v1h-1zM237 178h1v1h-1zM239 178h1v1h-1zM241 178h1v1h-1zM243 178h1v1h-1zM245 178h1v1h-1zM247 178h1v1h-1zM249 178h1v1h-1zM251 178h1v1h-1zM253 178h1v1h-1zM255 178h1v1h-1zM257 178h1v1h-1zM259 178h1v1h-1zM261 178h1v1h-1zM263 178h1v1h-1zM265 178h1v1h-1zM267 178h1v1h-1zM269 178h1v1h-1zM271 178h1v1h-1zM273 178h1v1h-1zM275 178h1v1h-1zM277 178h1v1h-1zM279 178h1v1h-1zM281 178h1v1h-1zM283 178h1v1h-1zM285 178h1v1h-1zM287 178h1v1h-1zM289 178h1v1h-1zM291 178h1v1h-1zM293 178h1v1h-1zM295 178h1v1h-1zM297 178h1v1h-1zM299 178h1v1h-1zM301 178h1v1h-1zM303 178h1v1h-1zM305 178h1v1h-1zM307 178h1v1h-1zM309 178h1v1h-1zM311 178h1v1h-1zM313 178h1v1h-1zM315 178h1v1h-1zM317 178h1v1h-1zM319 178h1v1h-1zM321 178h1v1h-1zM323 178h1v1h-1zM325 178h1v1h-1zM327 178h1v1h-1zM329 178h1v1h-1zM331 178h1v1h-1zM333 178h1v1h-1zM335 178h1v1h-1zM337 178h1v1h-1zM339 178h1v1h-1zM341 178h1v1h-1zM343 178h1v1h-1zM345 178h1v1h-1zM347 178h1v1h-1zM349 178h1v1h-1zM351 178h1v1h-1zM353 178h1v1h-1zM355 178h1v1h-1zM357 178h1v1h-1zM359 178h1v1h-1zM361 178h1v1h-1zM363 178h1v1h-1zM365 178h1v1h-1zM367 178h1v1h-1zM369 178h1v1h-1zM371 178h1v1h-1zM373 178h1v1h-1zM375 178h1v1h-1zM377 178h1v1h-1zM379 178h1v1h-1zM381 178h1v1h-1zM383 178h1v1h-1zM385 178h1v1h-1zM387 178h1v1h-1zM389 178h1v1h-1zM391 178h1v1h-1zM393 178h1v1h-1zM395 178h1v1h-1zM397 178h1v1h-1zM399 178h1v1h-1zM401 178h1v1h-1zM405 178h1v1h-1zM407 178h1v1h-1zM409 178h1v1h-1zM411 178h1v1h-1zM413 178h1v1h-1zM415 178h1v1h-1zM417 178h1v1h-1zM419 178h1v1h-1zM421 178h1v1h-1zM423 178h1v1h-1zM425 178h1v1h-1zM427 178h1v1h-1zM429 178h1v1h-1zM431 178h1v1h-1zM433 178h1v1h-1zM435 178h1v1h-1zM437 178h1v1h-1zM439 178h1v1h-1zM441 178h1v1h-1zM443 178h1v1h-1zM445 178h1v1h-1zM447 178h1v1h-1zM449 178h1v1h-1zM451 178h1v1h-1zM453 178h1v1h-1zM455 178h1v1h-1zM457 178h1v1h-1zM459 178h1v1h-1zM461 178h1v1h-1zM463 178h1v1h-1zM465 178h1v1h-1zM467 178h1v1h-1zM469 178h1v1h-1zM471 178h1v1h-1zM473 178h1v1h-1zM475 178h1v1h-1zM477 178h1v1h-1zM479 178h1v1h-1zM481 178h1v1h-1zM483 178h1v1h-1zM485 178h1v1h-1zM487 178h1v1h-1zM489 178h1v1h-1zM491 178h1v1h-1zM493 178h1v1h-1zM495 178h1v1h-1zM497 178h1v1h-1zM499 178h1v1h-1zM501 178h1v1h-1zM503 178h1v1h-1zM505 178h1v1h-1zM507 178h1v1h-1zM509 178h1v1h-1zM511 178h1v1h-1zM513 178h1v1h-1zM515 178h1v1h-1zM517 178h1v1h-1zM519 178h1v1h-1zM521 178h1v1h-1zM523 178h1v1h-1zM525 178h1v1h-1zM527 178h1v1h-1zM529 178h1v1h-1zM531 178h1v1h-1zM533 178h1v1h-1zM535 178h1v1h-1zM537 178h1v1h-1zM539 178h1v1h-1zM541 178h1v1h-1zM543 178h1v1h-1zM545 178h1v1h-1zM547 178h1v1h-1zM549 178h1v1h-1zM551 178h1v1h-1zM553 178h1v1h-1zM555 178h1v1h-1zM557 178h1v1h-1zM559 178h1v1h-1zM561 178h1v1h-1zM563 178h1v1h-1zM565 178h1v1h-1zM567 178h1v1h-1zM569 178h1v1h-1zM571 178h1v1h-1zM573 178h1v1h-1zM575 178h1v1h-1zM577 178h1v1h-1zM579 178h1v1h-1zM581 178h1v1h-1zM583 178h1v1h-1zM585 178h1v1h-1zM587 178h1v1h-1zM589 178h1v1h-1zM591 178h1v1h-1zM593 178h1v1h-1zM595 178h1v1h-1zM597 178h1v1h-1zM599 178h1v1h-1zM601 178h1v1h-1zM603 178h1v1h-1zM605 178h1v1h-1zM607 178h1v1h-1zM609 178h1v1h-1zM611 178h1v1h-1zM613 178h1v1h-1zM615 178h1v1h-1zM617 178h1v1h-1zM619 178h1v1h-1zM621 178h1v1h-1zM623 178h1v1h-1zM625 178h1v1h-1zM627 178h1v1h-1zM629 178h1v1h-1zM631 178h1v1h-1zM633 178h1v1h-1zM635 178h1v1h-1zM637 178h1v1h-1zM639 178h1v1h-1zM641 178h1v1h-1zM643 178h1v1h-1zM645 178h1v1h-1zM647 178h1v1h-1zM649 178h1v1h-1zM651 178h1v1h-1zM653 178h1v1h-1zM655 178h1v1h-1zM657 178h1v1h-1zM659 178h1v1h-1zM661 178h1v1h-1zM663 178h1v1h-1zM665 178h1v1h-1zM667 178h1v1h-1zM669 178h1v1h-1zM671 178h1v1h-1zM673 178h1v1h-1zM675 178h1v1h-1zM677 178h1v1h-1zM679 178h1v1h-1zM681 178h1v1h-1zM683 178h1v1h-1zM685 178h1v1h-1zM687 178h1v1h-1zM689 178h1v1h-1zM691 178h1v1h-1zM693 178h1v1h-1zM695 178h1v1h-1zM697 178h1v1h-1zM699 178h1v1h-1zM701 178h1v1h-1zM703 178h1v1h-1zM705 178h1v1h-1zM707 178h1v1h-1zM709 178h1v1h-1zM711 178h1v1h-1zM713 178h1v1h-1zM715 178h1v1h-1zM717 178h1v1h-1zM719 178h1v1h-1zM721 178h1v1h-1zM723 178h1v1h-1zM725 178h1v1h-1zM727 178h1v1h-1zM729 178h1v1h-1zM731 178h1v1h-1zM733 178h1v1h-1zM735 178h1v1h-1zM737 178h1v1h-1zM739 178h1v1h-1zM741 178h1v1h-1zM743 178h1v1h-1zM745 178h1v1h-1zM747 178h1v1h-1zM749 178h1v1h-1zM751 178h1v1h-1zM753 178h1v1h-1zM755 178h1v1h-1zM757 178h1v1h-1zM759 178h1v1h-1zM761 178h1v1h-1zM763 178h1v1h-1zM765 178h1v1h-1zM767 178h1v1h-1zM769 178h1v1h-1zM771 178h1v1h-1zM773 178h1v1h-1zM775 178h1v1h-1zM777 178h1v1h-1zM779 178h1v1h-1zM781 178h1v1h-1zM783 178h1v1h-1zM785 178h1v1h-1zM787 178h1v1h-1z" fill="#c4c4c4"/><path d="M19 201h1v1h-1zM21 201h1v1h-1zM23 201h1v1h-1zM25 201h1v1h-1zM27 201h1v1h-1zM29 201h1v1h-1zM31 201h1v1h-1zM33 201h1v1h-1zM35 201h1v1h-1zM37 201h1v1h-1zM39 201h1v1h-1zM41 201h1v1h-1zM43 201h1v1h-1zM45 201h1v1h-1zM47 201h1v1h-1zM49 201h1v1h-1zM51 201h1v1h-1zM53 201h1v1h-1zM55 201h1v1h-1zM57 201h1v1h-1zM59 201h1v1h-1zM61 201h1v1h-1zM63 201h1v1h-1zM65 201h1v1h-1zM67 201h1v1h-1zM69 201h1v1h-1zM71 201h1v1h-1zM73 201h1v1h-1zM75 201h1v1h-1zM77 201h1v1h-1zM79 201h1v1h-1zM81 201h1v1h-1zM83 201h1v1h-1zM85 201h1v1h-1zM87 201h1v1h-1zM89 201h1v1h-1zM91 201h1v1h-1zM93 201h1v1h-1zM95 201h1v1h-1zM97 201h1v1h-1zM99 201h1v1h-1zM101 201h1v1h-1zM103 201h1v1h-1zM105 201h1v1h-1zM107 201h1v1h-1zM109 201h1v1h-1zM111 201h1v1h-1zM113 201h1v1h-1zM115 201h1v1h-1zM117 201h1v1h-1zM119 201h1v1h-1zM121 201h1v1h-1zM123 201h1v1h-1zM125 201h1v1h-1zM127 201h1v1h-1zM129 201h1v1h-1zM131 201h1v1h-1zM133 201h1v1h-1zM135 201h1v1h-1zM137 201h1v1h-1zM139 201h1v1h-1zM141 201h1v1h-1zM143 201h1v1h-1zM145 201h1v1h-1zM147 201h1v1h-1zM149 201h1v1h-1zM151 201h1v1h-1zM153 201h1v1h-1zM155 201h1v1h-1zM157 201h1v1h-1zM159 201h1v1h-1zM161 201h1v1h-1zM163 201h1v1h-1zM165 201h1v1h-1zM167 201h1v1h-1zM169 201h1v1h-1zM171 201h1v1h-1zM173 201h1v1h-1zM175 201h1v1h-1zM177 201h1v1h-1zM179 201h1v1h-1zM181 201h1v1h-1zM183 201h1v1h-1zM185 201h1v1h-1zM187 201h1v1h-1zM189 201h1v1h-1zM191 201h1v1h-1zM193 201h1v1h-1zM195 201h1v1h-1zM197 201h1v1h-1zM199 201h1v1h-1zM201 201h1v1h-1zM203 201h1v1h-1zM205 201h1v1h-1zM207 201h1v1h-1zM209 201h1v1h-1zM211 201h1v1h-1zM213 201h1v1h-1zM215 201h1v1h-1zM217 201h1v1h-1zM219 201h1v1h-1zM221 201h1v1h-1zM223 201h1v1h-1zM225 201h1v1h-1zM227 201h1v1h-1zM229 201h1v1h-1zM231 201h1v1h-1zM233 201h1v1h-1zM235 201h1v1h-1zM237 201h1v1h-1zM239 201h1v1h-1zM241 201h1v1h-1zM243 201h1v1h-1zM245 201h1v1h-1zM247 201h1v1h-1zM249 201h1v1h-1zM251 201h1v1h-1zM253 201h1v1h-1zM255 201h1v1h-1zM257 201h1v1h-1zM259 201h1v1h-1zM261 201h1v1h-1zM263 201h1v1h-1zM265 201h1v1h-1zM267 201h1v1h-1zM269 201h1v1h-1zM271 201h1v1h-1zM273 201h1v1h-1zM275 201h1v1h-1zM277 201h1v1h-1zM279 201h1v1h-1zM281 201h1v1h-1zM283 201h1v1h-1zM285 201h1v1h-1zM287 201h1v1h-1zM289 201h1v1h-1zM291 201h1v1h-1zM293 201h1v1h-1zM295 201h1v1h-1zM297 201h1v1h-1zM299 201h1v1h-1zM301 201h1v1h-1zM303 201h1v1h-1zM305 201h1v1h-1zM307 201h1v1h-1zM309 201h1v1h-1zM311 201h1v1h-1zM313 201h1v1h-1zM315 201h1v1h-1zM317 201h1v1h-1zM319 201h1v1h-1zM321 201h1v1h-1zM323 201h1v1h-1zM325 201h1v1h-1zM327 201h1v1h-1zM329 201h1v1h-1zM331 201h1v1h-1zM333 201h1v1h-1zM335 201h1v1h-1zM337 201h1v1h-1zM339 201h1v1h-1zM341 201h1v1h-1zM343 201h1v1h-1zM345 201h1v1h-1zM347 201h1v1h-1zM349 201h1v1h-1zM351 201h1v1h-1zM353 201h1v1h-1zM355 201h1v1h-1zM357 201h1v1h-1zM359 201h1v1h-1zM361 201h1v1h-1zM363 201h1v1h-1zM365 201h1v1h-1zM367 201h1v1h-1zM369 201h1v1h-1zM371 201h1v1h-1zM373 201h1v1h-1zM375 201h1v1h-1zM377 201h1v1h-1zM379 201h1v1h-1zM381 201h1v1h-1zM383 201h1v1h-1zM385 201h1v1h-1zM387 201h1v1h-1zM389 201h1v1h-1zM391 201h1v1h-1zM393 201h1v1h-1zM395 201h1v1h-1zM397 201h1v1h-1zM399 201h1v1h-1zM401 201h1v1h-1zM405 201h1v1h-1zM407 201h1v1h-1zM409 201h1v1h-1zM411 201h1v1h-1zM413 201h1v1h-1zM415 201h1v1h-1zM417 201h1v1h-1zM419 201h1v1h-1zM421 201h1v1h-1zM423 201h1v1h-1zM425 201h1v1h-1zM427 201h1v1h-1zM429 201h1v1h-1zM431 201h1v1h-1zM433 201h1v1h-1zM435 201h1v1h-1zM437 201h1v1h-1zM439 201h1v1h-1zM441 201h1v1h-1zM443 201h1v1h-1zM445 201h1v1h-1zM447 201h1v1h-1zM449 201h1v1h-1zM451 201h1v1h-1zM453 201h1v1h-1zM455 201h1v1h-1zM457 201h1v1h-1zM459 201h1v1h-1zM461 201h1v1h-1zM463 201h1v1h-1zM465 201h1v1h-1zM467 201h1v1h-1zM469 201h1v1h-1zM471 201h1v1h-1zM473 201h1v1h-1zM475 201h1v1h-1zM477 201h1v1h-1zM479 201h1v1h-1zM481 201h1v1h-1zM483 201h1v1h-1zM485 201h1v1h-1zM487 201h1v1h-1zM489 201h1v1h-1zM491 201h1v1h-1zM493 201h1v1h-1zM495 201h1v1h-1zM497 201h1v1h-1zM499 201h1v1h-1zM501 201h1v1h-1zM503 201h1v1h-1zM505 201h1v1h-1zM507 201h1v1h-1zM509 201h1v1h-1zM511 201h1v1h-1zM513 201h1v1h-1zM515 201h1v1h-1zM517 201h1v1h-1zM519 201h1v1h-1zM521 201h1v1h-1zM523 201h1v1h-1zM525 201h1v1h-1zM527 201h1v1h-1zM529 201h1v1h-1zM531 201h1v1h-1zM533 201h1v1h-1zM535 201h1v1h-1zM537 201h1v1h-1zM539 201h1v1h-1zM541 201h1v1h-1zM543 201h1v1h-1zM545 201h1v1h-1zM547 201h1v1h-1zM549 201h1v1h-1zM551 201h1v1h-1zM553 201h1v1h-1zM555 201h1v1h-1zM557 201h1v1h-1zM559 201h1v1h-1zM561 201h1v1h-1zM563 201h1v1h-1zM565 201h1v1h-1zM567 201h1v1h-1zM569 201h1v1h-1zM571 201h1v1h-1zM573 201h1v1h-1zM575 201h1v1h-1zM577 201h1v1h-1zM579 201h1v1h-1zM581 201h1v1h-1zM583 201h1v1h-1zM585 201h1v1h-1zM587 201h1v1h-1zM589 201h1v1h-1zM591 201h1v1h-1zM593 201h1v1h-1zM595 201h1v1h-1zM597 201h1v1h-1zM599 201h1v1h-1zM601 201h1v1h-1zM603 201h1v1h-1zM605 201h1v1h-1zM607 201h1v1h-1zM609 201h1v1h-1zM611 201h1v1h-1zM613 201h1v1h-1zM615 201h1v1h-1zM617 201h1v1h-1zM619 201h1v1h-1zM621 201h1v1h-1zM623 201h1v1h-1zM625 201h1v1h-1zM627 201h1v1h-1zM629 201h1v1h-1zM631 201h1v1h-1zM633 201h1v1h-1zM635 201h1v1h-1zM637 201h1v1h-1zM639 201h1v1h-1zM641 201h1v1h-1zM643 201h1v1h-1zM645 201h1v1h-1zM647 201h1v1h-1zM649 201h1v1h-1zM651 201h1v1h-1zM653 201h1v1h-1zM655 201h1v1h-1zM657 201h1v1h-1zM659 201h1v1h-1zM661 201h1v1h-1zM663 201h1v1h-1zM665 201h1v1h-1zM667 201h1v1h-1zM669 201h1v1h-1zM671 201h1v1h-1zM673 201h1v1h-1zM675 201h1v1h-1zM677 201h1v1h-1zM679 201h1v1h-1zM681 201h1v1h-1zM683 201h1v1h-1zM685 201h1v1h-1zM687 201h1v1h-1zM689 201h1v1h-1zM691 201h1v1h-1zM693 201h1v1h-1zM695 201h1v1h-1zM697 201h1v1h-1zM699 201h1v1h-1zM701 201h1v1h-1zM703 201h1v1h-1zM705 201h1v1h-1zM707 201h1v1h-1zM709 201h1v1h-1zM711 201h1v1h-1zM713 201h1v1h-1zM715 201h1v1h-1zM717 201h1v1h-1zM719 201h1v1h-1zM721 201h1v1h-1zM723 201h1v1h-1zM725 201h1v1h-1zM727 201h1v1h-1zM729 201h1v1h-1zM731 201h1v1h-1zM733 201h1v1h-1zM735 201h1v1h-1zM737 201h1v1h-1zM739 201h1v1h-1zM741 201h1v1h-1zM743 201h1v1h-1zM745 201h1v1h-1zM747 201h1v1h-1zM749 201h1v1h-1zM751 201h1v1h-1zM753 201h1v1h-1zM755 201h1v1h-1zM757 201h1v1h-1zM759 201h1v1h-1zM761 201h1v1h-1zM763 201h1v1h-1zM765 201h1v1h-1zM767 201h1v1h-1zM769 201h1v1h-1zM771 201h1v1h-1zM773 201h1v1h-1zM775 201h1v1h-1zM777 201h1v1h-1zM779 201h1v1h-1zM781 201h1v1h-1zM783 201h1v1h-1zM785 201h1v1h-1zM787 201h1v1h-1z" fill="#c4c4c4"/><path d="M19 213h1v1h-1zM21 213h1v1h-1zM23 213h1v1h-1zM25 213h1v1h-1zM27 213h1v1h-1zM29 213h1v1h-1zM31 213h1v1h-1zM33 213h1v1h-1zM35 213h1v1h-1zM37 213h1v1h-1zM39 213h1v1h-1zM41 213h1v1h-1zM43 213h1v1h-1zM45 213h1v1h-1zM47 213h1v1h-1zM49 213h1v1h-1zM51 213h1v1h-1zM53 213h1v1h-1zM55 213h1v1h-1zM57 213h1v1h-1zM59 213h1v1h-1zM61 213h1v1h-1zM63 213h1v1h-1zM65 213h1v1h-1zM67 213h1v1h-1zM69 213h1v1h-1zM71 213h1v1h-1zM73 213h1v1h-1zM75 213h1v1h-1zM77 213h1v1h-1zM79 213h1v1h-1zM81 213h1v1h-1zM83 213h1v1h-1zM85 213h1v1h-1zM87 213h1v1h-1zM89 213h1v1h-1zM91 213h1v1h-1zM93 213h1v1h-1zM95 213h1v1h-1zM97 213h1v1h-1zM99 213h1v1h-1zM101 213h1v1h-1zM103 213h1v1h-1zM105 213h1v1h-1zM107 213h1v1h-1zM109 213h1v1h-1zM111 213h1v1h-1zM113 213h1v1h-1zM115 213h1v1h-1zM117 213h1v1h-1zM119 213h1v1h-1zM121 213h1v1h-1zM123 213h1v1h-1zM125 213h1v1h-1zM127 213h1v1h-1zM129 213h1v1h-1zM131 213h1v1h-1zM133 213h1v1h-1zM135 213h1v1h-1zM137 213h1v1h-1zM139 213h1v1h-1zM141 213h1v1h-1zM143 213h1v1h-1zM145 213h1v1h-1zM147 213h1v1h-1zM149 213h1v1h-1zM151 213h1v1h-1zM153 213h1v1h-1zM155 213h1v1h-1zM157 213h1v1h-1zM159 213h1v1h-1zM161 213h1v1h-1zM163 213h1v1h-1zM165 213h1v1h-1zM167 213h1v1h-1zM169 213h1v1h-1zM171 213h1v1h-1zM173 213h1v1h-1zM175 213h1v1h-1zM177 213h1v1h-1zM179 213h1v1h-1zM181 213h1v1h-1zM183 213h1v1h-1zM185 213h1v1h-1zM187 213h1v1h-1zM189 213h1v1h-1zM191 213h1v1h-1zM193 213h1v1h-1zM195 213h1v1h-1zM197 213h1v1h-1zM199 213h1v1h-1zM201 213h1v1h-1zM203 213h1v1h-1zM205 213h1v1h-1zM207 213h1v1h-1zM209 213h1v1h-1zM211 213h1v1h-1zM213 213h1v1h-1zM215 213h1v1h-1zM217 213h1v1h-1zM219 213h1v1h-1zM221 213h1v1h-1zM223 213h1v1h-1zM225 213h1v1h-1zM227 213h1v1h-1zM229 213h1v1h-1zM231 213h1v1h-1zM233 213h1v1h-1zM235 213h1v1h-1zM237 213h1v1h-1zM239 213h1v1h-1zM241 213h1v1h-1zM243 213h1v1h-1zM245 213h1v1h-1zM247 213h1v1h-1zM249 213h1v1h-1zM251 213h1v1h-1zM253 213h1v1h-1zM255 213h1v1h-1zM257 213h1v1h-1zM259 213h1v1h-1zM261 213h1v1h-1zM263 213h1v1h-1zM265 213h1v1h-1zM267 213h1v1h-1zM269 213h1v1h-1zM271 213h1v1h-1zM273 213h1v1h-1zM275 213h1v1h-1zM277 213h1v1h-1zM279 213h1v1h-1zM281 213h1v1h-1zM283 213h1v1h-1zM285 213h1v1h-1zM287 213h1v1h-1zM289 213h1v1h-1zM291 213h1v1h-1zM293 213h1v1h-1zM295 213h1v1h-1zM297 213h1v1h-1zM299 213h1v1h-1zM301 213h1v1h-1zM303 213h1v1h-1zM305 213h1v1h-1zM307 213h1v1h-1zM309 213h1v1h-1zM311 213h1v1h-1zM313 213h1v1h-1zM315 213h1v1h-1zM317 213h1v1h-1zM319 213h1v1h-1zM321 213h1v1h-1zM323 213h1v1h-1zM325 213h1v1h-1zM327 213h1v1h-1zM329 213h1v1h-1zM331 213h1v1h-1zM333 213h1v1h-1zM335 213h1v1h-1zM337 213h1v1h-1zM339 213h1v1h-1zM341 213h1v1h-1zM343 213h1v1h-1zM345 213h1v1h-1zM347 213h1v1h-1zM349 213h1v1h-1zM351 213h1v1h-1zM353 213h1v1h-1zM355 213h1v1h-1zM357 213h1v1h-1zM359 213h1v1h-1zM361 213h1v1h-1zM363 213h1v1h-1zM365 213h1v1h-1zM367 213h1v1h-1zM369 213h1v1h-1zM371 213h1v1h-1zM373 213h1v1h-1zM375 213h1v1h-1zM377 213h1v1h-1zM379 213h1v1h-1zM381 213h1v1h-1zM383 213h1v1h-1zM385 213h1v1h-1zM387 213h1v1h-1zM389 213h1v1h-1zM391 213h1v1h-1zM393 213h1v1h-1zM395 213h1v1h-1zM397 213h1v1h-1zM399 213h1v1h-1zM401 213h1v1h-1zM405 213h1v1h-1zM407 213h1v1h-1zM409 213h1v1h-1zM411 213h1v1h-1zM413 213h1v1h-1zM415 213h1v1h-1zM417 213h1v1h-1zM419 213h1v1h-1zM421 213h1v1h-1zM423 213h1v1h-1zM425 213h1v1h-1zM427 213h1v1h-1zM429 213h1v1h-1zM431 213h1v1h-1zM433 213h1v1h-1zM435 213h1v1h-1zM437 213h1v1h-1zM439 213h1v1h-1zM441 213h1v1h-1zM443 213h1v1h-1zM445 213h1v1h-1zM447 213h1v1h-1zM449 213h1v1h-1zM451 213h1v1h-1zM453 213h1v1h-1zM455 213h1v1h-1zM457 213h1v1h-1zM459 213h1v1h-1zM461 213h1v1h-1zM463 213h1v1h-1zM465 213h1v1h-1zM467 213h1v1h-1zM469 213h1v1h-1zM471 213h1v1h-1zM473 213h1v1h-1zM475 213h1v1h-1zM477 213h1v1h-1zM479 213h1v1h-1zM481 213h1v1h-1zM483 213h1v1h-1zM485 213h1v1h-1zM487 213h1v1h-1zM489 213h1v1h-1zM491 213h1v1h-1zM493 213h1v1h-1zM495 213h1v1h-1zM497 213h1v1h-1zM499 213h1v1h-1zM501 213h1v1h-1zM503 213h1v1h-1zM505 213h1v1h-1zM507 213h1v1h-1zM509 213h1v1h-1zM511 213h1v1h-1zM513 213h1v1h-1zM515 213h1v1h-1zM517 213h1v1h-1zM519 213h1v1h-1zM521 213h1v1h-1zM523 213h1v1h-1zM525 213h1v1h-1zM527 213h1v1h-1zM529 213h1v1h-1zM531 213h1v1h-1zM533 213h1v1h-1zM535 213h1v1h-1zM537 213h1v1h-1zM539 213h1v1h-1zM541 213h1v1h-1zM543 213h1v1h-1zM545 213h1v1h-1zM547 213h1v1h-1zM549 213h1v1h-1zM551 213h1v1h-1zM553 213h1v1h-1zM555 213h1v1h-1zM557 213h1v1h-1zM559 213h1v1h-1zM561 213h1v1h-1zM563 213h1v1h-1zM565 213h1v1h-1zM567 213h1v1h-1zM569 213h1v1h-1zM571 213h1v1h-1zM573 213h1v1h-1zM575 213h1v1h-1zM577 213h1v1h-1zM579 213h1v1h-1zM581 213h1v1h-1zM583 213h1v1h-1zM585 213h1v1h-1zM587 213h1v1h-1zM589 213h1v1h-1zM591 213h1v1h-1zM593 213h1v1h-1zM595 213h1v1h-1zM597 213h1v1h-1zM599 213h1v1h-1zM601 213h1v1h-1zM603 213h1v1h-1zM605 213h1v1h-1zM607 213h1v1h-1zM609 213h1v1h-1zM611 213h1v1h-1zM613 213h1v1h-1zM615 213h1v1h-1zM617 213h1v1h-1zM619 213h1v1h-1zM621 213h1v1h-1zM623 213h1v1h-1zM625 213h1v1h-1zM627 213h1v1h-1zM629 213h1v1h-1zM631 213h1v1h-1zM633 213h1v1h-1zM635 213h1v1h-1zM637 213h1v1h-1zM639 213h1v1h-1zM641 213h1v1h-1zM643 213h1v1h-1zM645 213h1v1h-1zM647 213h1v1h-1zM649 213h1v1h-1zM651 213h1v1h-1zM653 213h1v1h-1zM655 213h1v1h-1zM657 213h1v1h-1zM659 213h1v1h-1zM661 213h1v1h-1zM663 213h1v1h-1zM665 213h1v1h-1zM667 213h1v1h-1zM669 213h1v1h-1zM671 213h1v1h-1zM673 213h1v1h-1zM675 213h1v1h-1zM677 213h1v1h-1zM679 213h1v1h-1zM681 213h1v1h-1zM683 213h1v1h-1zM685 213h1v1h-1zM687 213h1v1h-1zM689 213h1v1h-1zM691 213h1v1h-1zM693 213h1v1h-1zM695 213h1v1h-1zM697 213h1v1h-1zM699 213h1v1h-1zM701 213h1v1h-1zM703 213h1v1h-1zM705 213h1v1h-1zM707 213h1v1h-1zM709 213h1v1h-1zM711 213h1v1h-1zM713 213h1v1h-1zM715 213h1v1h-1zM717 213h1v1h-1zM719 213h1v1h-1zM721 213h1v1h-1zM723 213h1v1h-1zM725 213h1v1h-1zM727 213h1v1h-1zM729 213h1v1h-1zM731 213h1v1h-1zM733 213h1v1h-1zM735 213h1v1h-1zM737 213h1v1h-1zM739 213h1v1h-1zM741 213h1v1h-1zM743 213h1v1h-1zM745 213h1v1h-1zM747 213h1v1h-1zM749 213h1v1h-1zM751 213h1v1h-1zM753 213h1v1h-1zM755 213h1v1h-1zM757 213h1v1h-1zM759 213h1v1h-1zM761 213h1v1h-1zM763 213h1v1h-1zM765 213h1v1h-1zM767 213h1v1h-1zM769 213h1v1h-1zM771 213h1v1h-1zM773 213h1v1h-1zM775 213h1v1h-1zM777 213h1v1h-1zM779 213h1v1h-1zM781 213h1v1h-1zM783 213h1v1h-1zM785 213h1v1h-1zM787 213h1v1h-1z" fill="#c4c4c4"/><path d="M19 225h1v1h-1zM21 225h1v1h-1zM23 225h1v1h-1zM25 225h1v1h-1zM27 225h1v1h-1zM29 225h1v1h-1zM31 225h1v1h-1zM33 225h1v1h-1zM35 225h1v1h-1zM37 225h1v1h-1zM39 225h1v1h-1zM41 225h1v1h-1zM43 225h1v1h-1zM45 225h1v1h-1zM47 225h1v1h-1zM49 225h1v1h-1zM51 225h1v1h-1zM53 225h1v1h-1zM55 225h1v1h-1zM57 225h1v1h-1zM59 225h1v1h-1zM61 225h1v1h-1zM63 225h1v1h-1zM65 225h1v1h-1zM67 225h1v1h-1zM69 225h1v1h-1zM71 225h1v1h-1zM73 225h1v1h-1zM75 225h1v1h-1zM77 225h1v1h-1zM79 225h1v1h-1zM81 225h1v1h-1zM83 225h1v1h-1zM85 225h1v1h-1zM87 225h1v1h-1zM89 225h1v1h-1zM91 225h1v1h-1zM93 225h1v1h-1zM95 225h1v1h-1zM97 225h1v1h-1zM99 225h1v1h-1zM101 225h1v1h-1zM103 225h1v1h-1zM105 225h1v1h-1zM107 225h1v1h-1zM109 225h1v1h-1zM111 225h1v1h-1zM113 225h1v1h-1zM115 225h1v1h-1zM117 225h1v1h-1zM119 225h1v1h-1zM121 225h1v1h-1zM123 225h1v1h-1zM125 225h1v1h-1zM127 225h1v1h-1zM129 225h1v1h-1zM131 225h1v1h-1zM133 225h1v1h-1zM135 225h1v1h-1zM137 225h1v1h-1zM139 225h1v1h-1zM141 225h1v1h-1zM143 225h1v1h-1zM145 225h1v1h-1zM147 225h1v1h-1zM149 225h1v1h-1zM151 225h1v1h-1zM153 225h1v1h-1zM155 225h1v1h-1zM157 225h1v1h-1zM159 225h1v1h-1zM161 225h1v1h-1zM163 225h1v1h-1zM165 225h1v1h-1zM167 225h1v1h-1zM169 225h1v1h-1zM171 225h1v1h-1zM173 225h1v1h-1zM175 225h1v1h-1zM177 225h1v1h-1zM179 225h1v1h-1zM181 225h1v1h-1zM183 225h1v1h-1zM185 225h1v1h-1zM187 225h1v1h-1zM189 225h1v1h-1zM191 225h1v1h-1zM193 225h1v1h-1zM195 225h1v1h-1zM197 225h1v1h-1zM199 225h1v1h-1zM201 225h1v1h-1zM203 225h1v1h-1zM205 225h1v1h-1zM207 225h1v1h-1zM209 225h1v1h-1zM211 225h1v1h-1zM213 225h1v1h-1zM215 225h1v1h-1zM217 225h1v1h-1zM219 225h1v1h-1zM221 225h1v1h-1zM223 225h1v1h-1zM225 225h1v1h-1zM227 225h1v1h-1zM229 225h1v1h-1zM231 225h1v1h-1zM233 225h1v1h-1zM235 225h1v1h-1zM237 225h1v1h-1zM239 225h1v1h-1zM241 225h1v1h-1zM243 225h1v1h-1zM245 225h1v1h-1zM247 225h1v1h-1zM249 225h1v1h-1zM251 225h1v1h-1zM253 225h1v1h-1zM255 225h1v1h-1zM257 225h1v1h-1zM259 225h1v1h-1zM261 225h1v1h-1zM263 225h1v1h-1zM265 225h1v1h-1zM267 225h1v1h-1zM269 225h1v1h-1zM271 225h1v1h-1zM273 225h1v1h-1zM275 225h1v1h-1zM277 225h1v1h-1zM279 225h1v1h-1zM281 225h1v1h-1zM283 225h1v1h-1zM285 225h1v1h-1zM287 225h1v1h-1zM289 225h1v1h-1zM291 225h1v1h-1zM293 225h1v1h-1zM295 225h1v1h-1zM297 225h1v1h-1zM299 225h1v1h-1zM301 225h1v1h-1zM303 225h1v1h-1zM305 225h1v1h-1zM307 225h1v1h-1zM309 225h1v1h-1zM311 225h1v1h-1zM313 225h1v1h-1zM315 225h1v1h-1zM317 225h1v1h-1zM319 225h1v1h-1zM321 225h1v1h-1zM323 225h1v1h-1zM325 225h1v1h-1zM327 225h1v1h-1zM329 225h1v1h-1zM331 225h1v1h-1zM333 225h1v1h-1zM335 225h1v1h-1zM337 225h1v1h-1zM339 225h1v1h-1zM341 225h1v1h-1zM343 225h1v1h-1zM345 225h1v1h-1zM347 225h1v1h-1zM349 225h1v1h-1zM351 225h1v1h-1zM353 225h1v1h-1zM355 225h1v1h-1zM357 225h1v1h-1zM359 225h1v1h-1zM361 225h1v1h-1zM363 225h1v1h-1zM365 225h1v1h-1zM367 225h1v1h-1zM369 225h1v1h-1zM371 225h1v1h-1zM373 225h1v1h-1zM375 225h1v1h-1zM377 225h1v1h-1zM379 225h1v1h-1zM381 225h1v1h-1zM383 225h1v1h-1zM385 225h1v1h-1zM387 225h1v1h-1zM389 225h1v1h-1zM391 225h1v1h-1zM393 225h1v1h-1zM395 225h1v1h-1zM397 225h1v1h-1zM399 225h1v1h-1zM401 225h1v1h-1zM405 225h1v1h-1zM407 225h1v1h-1zM409 225h1v1h-1zM411 225h1v1h-1zM413 225h1v1h-1zM415 225h1v1h-1zM417 225h1v1h-1zM419 225h1v1h-1zM421 225h1v1h-1zM423 225h1v1h-1zM425 225h1v1h-1zM427 225h1v1h-1zM429 225h1v1h-1zM431 225h1v1h-1zM433 225h1v1h-1zM435 225h1v1h-1zM437 225h1v1h-1zM439 225h1v1h-1zM441 225h1v1h-1zM443 225h1v1h-1zM445 225h1v1h-1zM447 225h1v1h-1zM449 225h1v1h-1zM451 225h1v1h-1zM453 225h1v1h-1zM455 225h1v1h-1zM457 225h1v1h-1zM459 225h1v1h-1zM461 225h1v1h-1zM463 225h1v1h-1zM465 225h1v1h-1zM467 225h1v1h-1zM469 225h1v1h-1zM471 225h1v1h-1zM473 225h1v1h-1zM475 225h1v1h-1zM477 225h1v1h-1zM479 225h1v1h-1zM481 225h1v1h-1zM483 225h1v1h-1zM485 225h1v1h-1zM487 225h1v1h-1zM489 225h1v1h-1zM491 225h1v1h-1zM493 225h1v1h-1zM495 225h1v1h-1zM497 225h1v1h-1zM499 225h1v1h-1zM501 225h1v1h-1zM503 225h1v1h-1zM505 225h1v1h-1zM507 225h1v1h-1zM509 225h1v1h-1zM511 225h1v1h-1zM513 225h1v1h-1zM515 225h1v1h-1zM517 225h1v1h-1zM519 225h1v1h-1zM521 225h1v1h-1zM523 225h1v1h-1zM525 225h1v1h-1zM527 225h1v1h-1zM529 225h1v1h-1zM531 225h1v1h-1zM533 225h1v1h-1zM535 225h1v1h-1zM537 225h1v1h-1zM539 225h1v1h-1zM541 225h1v1h-1zM543 225h1v1h-1zM545 225h1v1h-1zM547 225h1v1h-1zM549 225h1v1h-1zM551 225h1v1h-1zM553 225h1v1h-1zM555 225h1v1h-1zM557 225h1v1h-1zM559 225h1v1h-1zM561 225h1v1h-1zM563 225h1v1h-1zM565 225h1v1h-1zM567 225h1v1h-1zM569 225h1v1h-1zM571 225h1v1h-1zM573 225h1v1h-1zM575 225h1v1h-1zM577 225h1v1h-1zM579 225h1v1h-1zM581 225h1v1h-1zM583 225h1v1h-1zM585 225h1v1h-1zM587 225h1v1h-1zM589 225h1v1h-1zM591 225h1v1h-1zM593 225h1v1h-1zM595 225h1v1h-1zM597 225h1v1h-1zM599 225h1v1h-1zM601 225h1v1h-1zM603 225h1v1h-1zM605 225h1v1h-1zM607 225h1v1h-1zM609 225h1v1h-1zM611 225h1v1h-1zM613 225h1v1h-1zM615 225h1v1h-1zM617 225h1v1h-1zM619 225h1v1h-1zM621 225h1v1h-1zM623 225h1v1h-1zM625 225h1v1h-1zM627 225h1v1h-1zM629 225h1v1h-1zM631 225h1v1h-1zM633 225h1v1h-1zM635 225h1v1h-1zM637 225h1v1h-1zM639 225h1v1h-1zM641 225h1v1h-1zM643 225h1v1h-1zM645 225h1v1h-1zM647 225h1v1h-1zM649 225h1v1h-1zM651 225h1v1h-1zM653 225h1v1h-1zM655 225h1v1h-1zM657 225h1v1h-1zM659 225h1v1h-1zM661 225h1v1h-1zM663 225h1v1h-1zM665 225h1v1h-1zM667 225h1v1h-1zM669 225h1v1h-1zM671 225h1v1h-1zM673 225h1v1h-1zM675 225h1v1h-1zM677 225h1v1h-1zM679 225h1v1h-1zM681 225h1v1h-1zM683 225h1v1h-1zM685 225h1v1h-1zM687 225h1v1h-1zM689 225h1v1h-1zM691 225h1v1h-1zM693 225h1v1h-1zM695 225h1v1h-1zM697 225h1v1h-1zM699 225h1v1h-1zM701 225h1v1h-1zM703 225h1v1h-1zM705 225h1v1h-1zM707 225h1v1h-1zM709 225h1v1h-1zM711 225h1v1h-1zM713 225h1v1h-1zM715 225h1v1h-1zM717 225h1v1h-1zM719 225h1v1h-1zM721 225h1v1h-1zM723 225h1v1h-1zM725 225h1v1h-1zM727 225h1v1h-1zM729 225h1v1h-1zM731 225h1v1h-1zM733 225h1v1h-1zM735 225h1v1h-1zM737 225h1v1h-1zM739 225h1v1h-1zM741 225h1v1h-1zM743 225h1v1h-1zM745 225h1v1h-1zM747 225h1v1h-1zM749 225h1v1h-1zM751 225h1v1h-1zM753 225h1v1h-1zM755 225h1v1h-1zM757 225h1v1h-1zM759 225h1v1h-1zM761 225h1v1h-1zM763 225h1v1h-1zM765 225h1v1h-1zM767 225h1v1h-1zM769 225h1v1h-1zM771 225h1v1h-1zM773 225h1v1h-1zM775 225h1v1h-1zM777 225h1v1h-1zM779 225h1v1h-1zM781 225h1v1h-1zM783 225h1v1h-1zM785 225h1v1h-1zM787 225h1v1h-1z" fill="#c4c4c4"/><rect x="17" y="190" width="772" height="1" fill="#c4c4c4"/><rect x="403" y="143" width="1" height="93" fill="#c4c4c4"/><path d="M94 145h1v1h-1zM94 147h1v1h-1zM94 149h1v1h-1zM94 151h1v1h-1zM94 153h1v1h-1zM94 155h1v1h-1zM94 157h1v1h-1zM94 159h1v1h-1zM94 161h1v1h-1zM94 163h1v1h-1zM94 165h1v1h-1zM94 167h1v1h-1zM94 169h1v1h-1zM94 171h1v1h-1zM94 173h1v1h-1zM94 175h1v1h-1zM94 177h1v1h-1zM94 179h1v1h-1zM94 181h1v1h-1zM94 183h1v1h-1zM94 185h1v1h-1zM94 187h1v1h-1zM94 189h1v1h-1zM94 191h1v1h-1zM94 193h1v1h-1zM94 195h1v1h-1zM94 197h1v1h-1zM94 199h1v1h-1zM94 201h1v1h-1zM94 203h1v1h-1zM94 205h1v1h-1zM94 207h1v1h-1zM94 209h1v1h-1zM94 211h1v1h-1zM94 213h1v1h-1zM94 215h1v1h-1zM94 217h1v1h-1zM94 219h1v1h-1zM94 221h1v1h-1zM94 223h1v1h-1zM94 225h1v1h-1zM94 227h1v1h-1zM94 229h1v1h-1zM94 231h1v1h-1zM94 233h1v1h-1zM94 235h1v1h-1z" fill="#c4c4c4"/><path d="M171 145h1v1h-1zM171 147h1v1h-1zM171 149h1v1h-1zM171 151h1v1h-1zM171 153h1v1h-1zM171 155h1v1h-1zM171 157h1v1h-1zM171 159h1v1h-1zM171 161h1v1h-1zM171 163h1v1h-1zM171 165h1v1h-1zM171 167h1v1h-1zM171 169h1v1h-1zM171 171h1v1h-1zM171 173h1v1h-1zM171 175h1v1h-1zM171 177h1v1h-1zM171 179h1v1h-1zM171 181h1v1h-1zM171 183h1v1h-1zM171 185h1v1h-1zM171 187h1v1h-1zM171 189h1v1h-1zM171 191h1v1h-1zM171 193h1v1h-1zM171 195h1v1h-1zM171 197h1v1h-1zM171 199h1v1h-1zM171 201h1v1h-1zM171 203h1v1h-1zM171 205h1v1h-1zM171 207h1v1h-1zM171 209h1v1h-1zM171 211h1v1h-1zM171 213h1v1h-1zM171 215h1v1h-1zM171 217h1v1h-1zM171 219h1v1h-1zM171 221h1v1h-1zM171 223h1v1h-1zM171 225h1v1h-1zM171 227h1v1h-1zM171 229h1v1h-1zM171 231h1v1h-1zM171 233h1v1h-1zM171 235h1v1h-1z" fill="#c4c4c4"/><path d="M248 145h1v1h-1zM248 147h1v1h-1zM248 149h1v1h-1zM248 151h1v1h-1zM248 153h1v1h-1zM248 155h1v1h-1zM248 157h1v1h-1zM248 159h1v1h-1zM248 161h1v1h-1zM248 163h1v1h-1zM248 165h1v1h-1zM248 167h1v1h-1zM248 169h1v1h-1zM248 171h1v1h-1zM248 173h1v1h-1zM248 175h1v1h-1zM248 177h1v1h-1zM248 179h1v1h-1zM248 181h1v1h-1zM248 183h1v1h-1zM248 185h1v1h-1zM248 187h1v1h-1zM248 189h1v1h-1zM248 191h1v1h-1zM248 193h1v1h-1zM248 195h1v1h-1zM248 197h1v1h-1zM248 199h1v1h-1zM248 201h1v1h-1zM248 203h1v1h-1zM248 205h1v1h-1zM248 207h1v1h-1zM248 209h1v1h-1zM248 211h1v1h-1zM248 213h1v1h-1zM248 215h1v1h-1zM248 217h1v1h-1zM248 219h1v1h-1zM248 221h1v1h-1zM248 223h1v1h-1zM248 225h1v1h-1zM248 227h1v1h-1zM248 229h1v1h-1zM248 231h1v1h-1zM248 233h1v1h-1zM248 235h1v1h-1z" fill="#c4c4c4"/><path d="M326 145h1v1h-1zM326 147h1v1h-1zM326 149h1v1h-1zM326 151h1v1h-1zM326 153h1v1h-1zM326 155h1v1h-1zM326 157h1v1h-1zM326 159h1v1h-1zM326 161h1v1h-1zM326 163h1v1h-1zM326 165h1v1h-1zM326 167h1v1h-1zM326 169h1v1h-1zM326 171h1v1h-1zM326 173h1v1h-1zM326 175h1v1h-1zM326 177h1v1h-1zM326 179h1v1h-1zM326 181h1v1h-1zM326 183h1v1h-1zM326 185h1v1h-1zM326 187h1v1h-1zM326 189h1v1h-1zM326 191h1v1h-1zM326 193h1v1h-1zM326 195h1v1h-1zM326 197h1v1h-1zM326 199h1v1h-1zM326 201h1v1h-1zM326 203h1v1h-1zM326 205h1v1h-1zM326 207h1v1h-1zM326 209h1v1h-1zM326 211h1v1h-1zM326 213h1v1h-1zM326 215h1v1h-1zM326 217h1v1h-1zM326 219h1v1h-1zM326 221h1v1h-1zM326 223h1v1h-1zM326 225h1v1h-1zM326 227h1v1h-1zM326 229h1v1h-1zM326 231h1v1h-1zM326 233h1v1h-1zM326 235h1v1h-1z" fill="#c4c4c4"/><path d="M480 145h1v1h-1zM480 147h1v1h-1zM480 149h1v1h-1zM480 151h1v1h-1zM480 153h1v1h-1zM480 155h1v1h-1zM480 157h1v1h-1zM480 159h1v1h-1zM480 161h1v1h-1zM480 163h1v1h-1zM480 165h1v1h-1zM480 167h1v1h-1zM480 169h1v1h-1zM480 171h1v1h-1zM480 173h1v1h-1zM480 175h1v1h-1zM480 177h1v1h-1zM480 179h1v1h-1zM480 181h1v1h-1zM480 183h1v1h-1zM480 185h1v1h-1zM480 187h1v1h-1zM480 189h1v1h-1zM480 191h1v1h-1zM480 193h1v1h-1zM480 195h1v1h-1zM480 197h1v1h-1zM480 199h1v1h-1zM480 201h1v1h-1zM480 203h1v1h-1zM480 205h1v1h-1zM480 207h1v1h-1zM480 209h1v1h-1zM480 211h1v1h-1zM480 213h1v1h-1zM480 215h1v1h-1zM480 217h1v1h-1zM480 219h1v1h-1zM480 221h1v1h-1zM480 223h1v1h-1zM480 225h1v1h-1zM480 227h1v1h-1zM480 229h1v1h-1zM480 231h1v1h-1zM480 233h1v1h-1zM480 235h1v1h-1z" fill="#c4c4c4"/><path d="M558 145h1v1h-1zM558 147h1v1h-1zM558 149h1v1h-1zM558 151h1v1h-1zM558 153h1v1h-1zM558 155h1v1h-1zM558 157h1v1h-1zM558 159h1v1h-1zM558 161h1v1h-1zM558 163h1v1h-1zM558 165h1v1h-1zM558 167h1v1h-1zM558 169h1v1h-1zM558 171h1v1h-1zM558 173h1v1h-1zM558 175h1v1h-1zM558 177h1v1h-1zM558 179h1v1h-1zM558 181h1v1h-1zM558 183h1v1h-1zM558 185h1v1h-1zM558 187h1v1h-1zM558 189h1v1h-1zM558 191h1v1h-1zM558 193h1v1h-1zM558 195h1v1h-1zM558 197h1v1h-1zM558 199h1v1h-1zM558 201h1v1h-1zM558 203h1v1h-1zM558 205h1v1h-1zM558 207h1v1h-1zM558 209h1v1h-1zM558 211h1v1h-1zM558 213h1v1h-1zM558 215h1v1h-1zM558 217h1v1h-1zM558 219h1v1h-1zM558 221h1v1h-1zM558 223h1v1h-1zM558 225h1v1h-1zM558 227h1v1h-1zM558 229h1v1h-1zM558 231h1v1h-1zM558 233h1v1h-1zM558 235h1v1h-1z" fill="#c4c4c4"/><path d="M635 145h1v1h-1zM635 147h1v1h-1zM635 149h1v1h-1zM635 151h1v1h-1zM635 153h1v1h-1zM635 155h1v1h-1zM635 157h1v1h-1zM635 159h1v1h-1zM635 161h1v1h-1zM635 163h1v1h-1zM635 165h1v1h-1zM635 167h1v1h-1zM635 169h1v1h-1zM635 171h1v1h-1zM635 173h1v1h-1zM635 175h1v1h-1zM635 177h1v1h-1zM635 179h1v1h-1zM635 181h1v1h-1zM635 183h1v1h-1zM635 185h1v1h-1zM635 187h1v1h-1zM635 189h1v1h-1zM635 191h1v1h-1zM635 193h1v1h-1zM635 195h1v1h-1zM635 197h1v1h-1zM635 199h1v1h-1zM635 201h1v1h-1zM635 203h1v1h-1zM635 205h1v1h-1zM635 207h1v1h-1zM635 209h1v1h-1zM635 211h1v1h-1zM635 213h1v1h-1zM635 215h1v1h-1zM635 217h1v1h-1zM635 219h1v1h-1zM635 221h1v1h-1zM635 223h1v1h-1zM635 225h1v1h-1zM635 227h1v1h-1zM635 229h1v1h-1zM635 231h1v1h-1zM635 233h1v1h-1zM635 235h1v1h-1z" fill="#c4c4c4"/><path d="M712 145h1v1h-1zM712 147h1v1h-1zM712 149h1v1h-1zM712 151h1v1h-1zM712 153h1v1h-1zM712 155h1v1h-1zM712 157h1v1h-1zM712 159h1v1h-1zM712 161h1v1h-1zM712 163h1v1h-1zM712 165h1v1h-1zM712 167h1v1h-1zM712 169h1v1h-1zM712 171h1v1h-1zM712 173h1v1h-1zM712 175h1v1h-1zM712 177h1v1h-1zM712 179h1v1h-1zM712 181h1v1h-1zM712 183h1v1h-1zM712 185h1v1h-1zM712 187h1v1h-1zM712 189h1v1h-1zM712 191h1v1h-1zM712 193h1v1h-1zM712 195h1v1h-1zM712 197h1v1h-1zM712 199h1v1h-1zM712 201h1v1h-1zM712 203h1v1h-1zM712 205h1v1h-1zM712 207h1v1h-1zM712 209h1v1h-1zM712 211h1v1h-1zM712 213h1v1h-1zM712 215h1v1h-1zM712 217h1v1h-1zM712 219h1v1h-1zM712 221h1v1h-1zM712 223h1v1h-1zM712 225h1v1h-1zM712 227h1v1h-1zM712 229h1v1h-1zM712 231h1v1h-1zM712 233h1v1h-1zM712 235h1v1h-1z" fill="#c4c4c4"/><path d="M32 188h1v5h-1zM47 188h1v5h-1zM63 188h1v5h-1zM78 188h1v5h-1zM94 188h1v5h-1zM109 188h1v5h-1zM125 188h1v5h-1zM140 188h1v5h-1zM156 188h1v5h-1zM171 188h1v5h-1zM187 188h1v5h-1zM202 188h1v5h-1zM217 188h1v5h-1zM233 188h1v5h-1zM248 188h1v5h-1zM264 188h1v5h-1zM279 188h1v5h-1zM295 188h1v5h-1zM310 188h1v5h-1zM326 188h1v5h-1zM341 188h1v5h-1zM357 188h1v5h-1zM372 188h1v5h-1zM388 188h1v5h-1zM418 188h1v5h-1zM434 188h1v5h-1zM449 188h1v5h-1zM465 188h1v5h-1zM480 188h1v5h-1zM496 188h1v5h-1zM511 188h1v5h-1zM527 188h1v5h-1zM542 188h1v5h-1zM558 188h1v5h-1zM573 188h1v5h-1zM589 188h1v5h-1zM604 188h1v5h-1zM619 188h1v5h-1zM635 188h1v5h-1zM650 188h1v5h-1zM666 188h1v5h-1zM681 188h1v5h-1zM697 188h1v5h-1zM712 188h1v5h-1zM728 188h1v5h-1zM743 188h1v5h-1zM759 188h1v5h-1zM774 188h1v5h-1z" fill="#c4c4c4"/><path d="M32 160h1v1h-1zM32 219h1v1h-1zM47 160h1v1h-1zM47 219h1v1h-1zM63 160h1v1h-1zM63 219h1v1h-1zM78 160h1v1h-1zM78 219h1v1h-1zM109 160h1v1h-1zM109 219h1v1h-1zM125 160h1v1h-1zM125 219h1v1h-1zM140 160h1v1h-1zM140 219h1v1h-1zM156 160h1v1h-1zM156 219h1v1h-1zM187 160h1v1h-1zM187 219h1v1h-1zM202 160h1v1h-1zM202 219h1v1h-1zM217 160h1v1h-1zM217 219h1v1h-1zM233 160h1v1h-1zM233 219h1v1h-1zM264 160h1v1h-1zM264 219h1v1h-1zM279 160h1v1h-1zM279 219h1v1h-1zM295 160h1v1h-1zM295 219h1v1h-1zM310 160h1v1h-1zM310 219h1v1h-1zM341 160h1v1h-1zM341 219h1v1h-1zM357 160h1v1h-1zM357 219h1v1h-1zM372 160h1v1h-1zM372 219h1v1h-1zM388 160h1v1h-1zM388 219h1v1h-1zM418 160h1v1h-1zM418 219h1v1h-1zM434 160h1v1h-1zM434 219h1v1h-1zM449 160h1v1h-1zM449 219h1v1h-1zM465 160h1v1h-1zM465 219h1v1h-1zM496 160h1v1h-1zM496 219h1v1h-1zM511 160h1v1h-1zM511 219h1v1h-1zM527 160h1v1h-1zM527 219h1v1h-1zM542 160h1v1h-1zM542 219h1v1h-1zM573 160h1v1h-1zM573 219h1v1h-1zM589 160h1v1h-1zM589 219h1v1h-1zM604 160h1v1h-1zM604 219h1v1h-1zM619 160h1v1h-1zM619 219h1v1h-1zM650 160h1v1h-1zM650 219h1v1h-1zM666 160h1v1h-1zM666 219h1v1h-1zM681 160h1v1h-1zM681 219h1v1h-1zM697 160h1v1h-1zM697 219h1v1h-1zM728 160h1v1h-1zM728 219h1v1h-1zM743 160h1v1h-1zM743 219h1v1h-1zM759 160h1v1h-1zM759 219h1v1h-1zM774 160h1v1h-1zM774 219h1v1h-1z" fill="#c4c4c4"/>
<path d="M17 81h1v1h-1zM18 81h1v2h-1zM19 80h1v2h-1zM20 80h1v1h-1zM21 80h1v2h-1zM22 80h1v2h-1zM22 79h1v3h-1zM23 78h1v3h-1zM24 79h1v2h-1zM25 78h1v1h-1zM26 77h1v2h-1zM27 78h1v1h-1zM28 77h1v2h-1zM29 77h1v2h-1zM30 77h1v1h-1zM31 77h1v1h-1zM32 77h1v2h-1zM32 76h1v3h-1zM33 75h1v3h-1zM34 75h1v2h-1zM35 75h1v2h-1zM36 74h1v1h-1zM37 74h1v1h-1zM38 74h1v1h-1zM39 74h1v1h-1zM40 74h1v1h-1zM41 73h1v1h-1zM42 72h1v2h-1zM43 72h1v2h-1zM44 72h1v2h-1zM45 72h1v1h-1zM46 72h1v1h-1zM47 71h1v1h-1zM48 70h1v1h-1zM49 70h1v1h-1zM50 70h1v1h-1zM51 69h1v2h-1zM52 70h1v1h-1zM52 69h1v2h-1zM53 68h1v2h-1zM54 68h1v2h-1zM55 68h1v2h-1zM56 69h1v2h-1zM57 68h1v2h-1zM58 68h1v1h-1zM59 68h1v2h-1zM60 68h1v1h-1zM61 68h1v1h-1zM62 67h1v1h-1zM63 67h1v2h-1zM63 66h1v3h-1zM64 65h1v3h-1zM65 65h1v1h-1zM65 65h1v3h-1zM66 66h1v3h-1zM67 66h1v2h-1zM68 66h1v2h-1zM69 65h1v2h-1zM70 65h1v2h-1zM71 64h1v1h-1zM72 65h1v1h-1zM73 64h1v1h-1zM74 64h1v2h-1zM75 65h1v1h-1zM75 64h1v2h-1zM76 63h1v2h-1zM77 63h1v2h-1zM78 64h1v1h-1zM79 63h1v2h-1zM80 63h1v2h-1zM81 63h1v2h-1zM82 63h1v2h-1zM83 63h1v2h-1zM84 63h1v1h-1zM85 62h1v2h-1zM86 62h1v2h-1zM87 62h1v1h-1zM88 62h1v1h-1zM89 61h1v2h-1zM90 62h1v2h-1zM91 61h1v1h-1zM92 62h1v2h-1zM93 63h1v1h-1zM94 62h1v2h-1zM95 61h1v1h-1zM96 61h1v1h-1zM97 62h1v2h-1zM98 61h1v2h-1zM99 61h1v1h-1zM100 62h1v1h-1zM101 61h1v1h-1zM102 61h1v1h-1zM103 61h1v1h-1zM104 60h1v1h-1zM105 61h1v2h-1zM106 61h1v2h-1zM107 61h1v2h-1zM108 61h1v1h-1zM109 61h1v1h-1zM110 61h1v1h-1zM111 61h1v2h-1zM112 61h1v2h-1zM113 61h1v1h-1zM114 61h1v1h-1zM115 61h1v1h-1zM116 60h1v1h-1zM116 60h1v2h-1zM117 61h1v2h-1zM118 61h1v1h-1zM119 61h1v2h-1zM120 61h1v1h-1zM121 61h1v1h-1zM122 62h1v2h-1zM122 61h1v2h-1zM123 60h1v2h-1zM123 60h1v3h-1zM124 61h1v3h-1zM125 62h1v1h-1zM126 62h1v1h-1zM127 62h1v1h-1zM128 63h1v1h-1zM129 62h1v2h-1zM130 63h1v2h-1zM131 63h1v1h-1zM132 62h1v1h-1zM133 62h1v1h-1zM134 63h1v2h-1zM135 63h1v2h-1zM136 63h1v1h-1zM137 63h1v2h-1zM138 64h1v1h-1zM139 63h1v1h-1zM140 64h1v1h-1zM141 63h1v1h-1zM141 63h1v2h-1zM142 64h1v2h-1zM143 64h1v2h-1zM144 64h1v2h-1zM144 64h1v3h-1zM145 65h1v3h-1zM146 65h1v2h-1zM147 65h1v2h-1zM148 65h1v1h-1zM149 65h1v2h-1zM150 65h1v1h-1zM151 66h1v1h-1zM152 67h1v1h-1zM153 66h1v1h-1zM154 66h1v2h-1zM155 67h1v1h-1zM156 67h1v1h-1zM157 67h1v2h-1zM158 68h1v1h-1zM159 68h1v1h-1zM160 67h1v2h-1zM161 67h1v1h-1zM162 68h1v2h-1zM162 68h1v3h-1zM163 69h1v3h-1zM164 70h1v2h-1zM165 70h1v1h-1zM166 70h1v1h-1zM167 71h1v1h-1zM168 71h1v2h-1zM169 72h1v2h-1zM169 71h1v2h-1zM170 70h1v2h-1zM171 71h1v1h-1zM172 72h1v1h-1zM173 72h1v1h-1zM174 73h1v2h-1zM175 73h1v1h-1zM176 74h1v2h-1zM177 73h1v2h-1zM178 74h1v2h-1zM179 74h1v2h-1zM180 74h1v1h-1zM181 75h1v2h-1zM182 74h1v2h-1zM182 74h1v3h-1zM183 75h1v3h-1zM184 76h1v2h-1zM185 75h1v1h-1zM185 75h1v3h-1zM186 76h1v3h-1zM187 77h1v1h-1zM188 78h1v1h-1zM189 78h1v1h-1zM190 78h1v2h-1zM191 79h1v1h-1zM192 79h1v1h-1zM193 80h1v2h-1zM194 80h1v1h-1zM195 79h1v1h-1zM196 80h1v1h-1zM197 80h1v1h-1zM198 81h1v2h-1zM199 81h1v2h-1zM200 82h1v2h-1zM201 82h1v1h-1zM202 83h1v2h-1zM203 82h1v2h-1zM204 83h1v2h-1zM205 83h1v1h-1zM206 84h1v1h-1zM207 84h1v1h-1zM208 85h1v2h-1zM209 85h1v2h-1zM210 85h1v1h-1zM211 85h1v1h-1zM212 86h1v1h-1zM213 86h1v1h-1zM214 87h1v1h-1zM215 87h1v2h-1zM216 88h1v2h-1zM217 88h1v2h-1zM218 88h1v2h-1zM219 89h1v1h-1zM220 89h1v1h-1zM221 89h1v2h-1zM222 90h1v2h-1zM223 90h1v2h-1zM224 91h1v1h-1zM225 91h1v2h-1zM226 91h1v1h-1zM227 91h1v2h-1zM228 92h1v2h-1zM229 91h1v2h-1zM230 92h1v1h-1zM231 93h1v2h-1zM232 93h1v2h-1zM233 93h1v2h-1zM234 94h1v2h-1zM235 93h1v1h-1zM236 94h1v1h-1zM237 94h1v2h-1zM238 94h1v2h-1zM239 95h1v1h-1zM240 95h1v1h-1zM240 95h1v2h-1zM241 96h1v2h-1zM242 96h1v1h-1zM243 96h1v2h-1zM244 96h1v1h-1zM245 96h1v1h-1zM246 97h1v1h-1zM247 97h1v1h-1zM248 97h1v1h-1zM249 98h1v2h-1zM250 98h1v2h-1zM251 99h1v1h-1zM252 99h1v1h-1zM253 99h1v2h-1zM254 99h1v2h-1zM255 100h1v1h-1zM256 99h1v1h-1zM257 100h1v1h-1zM258 100h1v2h-1zM259 101h1v1h-1zM260 101h1v2h-1zM261 101h1v2h-1zM262 100h1v2h-1zM263 101h1v1h-1zM264 102h1v1h-1zM265 102h1v2h-1zM266 102h1v2h-1zM267 102h1v1h-1zM268 102h1v2h-1zM269 103h1v1h-1zM270 103h1v1h-1zM271 103h1v1h-1zM272 103h1v2h-1zM273 103h1v1h-1zM274 104h1v2h-1zM275 105h1v2h-1zM276 104h1v2h-1zM277 105h1v2h-1zM277 104h1v3h-1zM278 103h1v3h-1zM278 103h1v3h-1zM279 104h1v3h-1zM280 106h1v1h-1zM281 105h1v1h-1zM282 105h1v2h-1zM283 105h1v1h-1zM284 104h1v1h-1zM285 105h1v2h-1zM286 106h1v2h-1zM287 106h1v2h-1zM288 105h1v2h-1zM289 106h1v2h-1zM290 106h1v1h-1zM291 106h1v1h-1zM292 106h1v2h-1zM293 106h1v1h-1zM294 105h1v2h-1zM295 105h1v1h-1zM296 106h1v1h-1zM297 105h1v2h-1zM298 106h1v2h-1zM299 107h1v2h-1zM300 106h1v1h-1zM301 106h1v1h-1zM302 106h1v2h-1zM303 105h1v1h-1zM303 105h1v2h-1zM304 106h1v2h-1zM304 106h1v2h-1zM305 105h1v2h-1zM306 105h1v1h-1zM307 106h1v1h-1zM308 106h1v2h-1zM309 106h1v2h-1zM310 105h1v2h-1zM311 106h1v2h-1zM312 105h1v2h-1zM313 105h1v1h-1zM314 106h1v2h-1zM315 105h1v1h-1zM316 105h1v2h-1zM317 105h1v2h-1zM318 105h1v1h-1zM319 105h1v1h-1zM320 105h1v1h-1zM321 104h1v2h-1zM322 105h1v2h-1zM323 104h1v2h-1zM324 105h1v2h-1zM324 104h1v2h-1zM325 103h1v2h-1zM326 104h1v2h-1zM327 103h1v2h-1zM328 104h1v2h-1zM329 104h1v1h-1zM330 104h1v2h-1zM331 103h1v1h-1zM332 103h1v2h-1zM333 103h1v2h-1zM334 103h1v2h-1zM335 104h1v1h-1zM335 103h1v3h-1zM336 102h1v3h-1zM337 103h1v1h-1zM338 102h1v2h-1zM339 102h1v2h-1zM340 102h1v1h-1zM341 102h1v1h-1zM341 101h1v3h-1zM342 100h1v3h-1zM343 101h1v1h-1zM344 101h1v1h-1zM345 101h1v1h-1zM346 100h1v1h-1zM347 99h1v2h-1zM348 100h1v1h-1zM349 100h1v1h-1zM350 100h1v2h-1zM351 99h1v1h-1zM352 99h1v1h-1zM353 99h1v1h-1zM354 98h1v1h-1zM355 98h1v1h-1zM356 98h1v2h-1zM357 97h1v1h-1zM358 98h1v1h-1zM359 97h1v2h-1zM360 96h1v2h-1zM361 97h1v2h-1zM362 96h1v2h-1zM363 95h1v2h-1zM364 95h1v2h-1zM365 94h1v2h-1zM366 94h1v2h-1zM367 94h1v1h-1zM368 94h1v2h-1zM369 94h1v1h-1zM370 93h1v2h-1zM371 93h1v1h-1zM372 93h1v2h-1zM373 93h1v2h-1zM374 93h1v1h-1zM374 92h1v3h-1zM375 91h1v3h-1zM376 91h1v2h-1zM377 90h1v2h-1zM378 90h1v2h-1zM379 91h1v2h-1zM380 91h1v2h-1zM381 90h1v1h-1zM382 89h1v1h-1zM383 89h1v1h-1zM383 88h1v3h-1zM384 87h1v3h-1zM384 87h1v2h-1zM385 88h1v2h-1zM386 89h1v2h-1zM386 88h1v3h-1zM387 87h1v3h-1zM388 87h1v2h-1zM389 87h1v2h-1zM390 86h1v2h-1zM391 86h1v1h-1zM392 86h1v2h-1zM393 85h1v1h-1zM394 86h1v2h-1zM395 85h1v2h-1zM396 84h1v1h-1zM397 84h1v1h-1zM398 84h1v2h-1zM398 83h1v2h-1zM399 82h1v2h-1zM400 83h1v2h-1zM401 83h1v1h-1zM402 82h1v2h-1zM403 82h1v2h-1zM403 81h1v3h-1zM404 80h1v3h-1zM404 80h1v3h-1zM405 81h1v3h-1zM405 81h1v2h-1zM406 80h1v2h-1zM407 80h1v2h-1zM408 80h1v1h-1zM409 80h1v1h-1zM410 79h1v2h-1zM411 79h1v1h-1zM412 79h1v1h-1zM413 78h1v2h-1zM414 78h1v2h-1zM415 78h1v1h-1zM416 77h1v1h-1zM417 77h1v1h-1zM418 76h1v2h-1zM419 76h1v1h-1zM420 76h1v2h-1zM421 76h1v2h-1zM422 76h1v2h-1zM423 75h1v2h-1zM424 74h1v1h-1zM425 75h1v2h-1zM425 74h1v3h-1zM426 73h1v3h-1zM427 74h1v1h-1zM428 73h1v2h-1zM429 73h1v1h-1zM430 73h1v1h-1zM431 72h1v1h-1zM432 71h1v2h-1zM433 72h1v1h-1zM434 71h1v2h-1zM435 71h1v2h-1zM436 70h1v2h-1zM437 71h1v1h-1zM438 71h1v2h-1zM438 69h1v3h-1zM439 68h1v2h-1zM439 68h1v3h-1zM440 69h1v3h-1zM441 69h1v1h-1zM442 68h1v2h-1zM443 68h1v1h-1zM444 68h1v1h-1zM445 68h1v2h-1zM446 68h1v2h-1zM447 68h1v1h-1zM448 67h1v2h-1zM449 67h1v2h-1zM450 66h1v1h-1zM451 67h1v1h-1zM452 66h1v1h-1zM453 66h1v2h-1zM454 66h1v2h-1zM455 65h1v1h-1zM456 66h1v2h-1zM457 65h1v1h-1zM458 65h1v2h-1zM459 64h1v1h-1zM460 65h1v1h-1zM461 64h1v2h-1zM462 64h1v1h-1zM463 64h1v2h-1zM464 63h1v1h-1zM465 63h1v2h-1zM466 64h1v1h-1zM467 63h1v2h-1zM468 64h1v2h-1zM469 64h1v2h-1zM469 62h1v4h-1zM470 61h1v3h-1zM471 62h1v2h-1zM472 62h1v1h-1zM473 61h1v2h-1zM473 61h1v2h-1zM474 62h1v2h-1zM475 62h1v2h-1zM476 62h1v1h-1zM477 61h1v2h-1zM478 61h1v1h-1zM479 61h1v2h-1zM480 62h1v2h-1zM480 61h1v3h-1zM481 60h1v3h-1zM482 61h1v2h-1zM483 62h1v2h-1zM483 61h1v3h-1zM484 60h1v3h-1zM484 60h1v3h-1zM485 61h1v3h-1zM486 61h1v2h-1zM487 61h1v1h-1zM488 61h1v1h-1zM489 61h1v1h-1zM490 61h1v2h-1zM491 60h1v1h-1zM492 61h1v2h-1zM493 61h1v1h-1zM494 61h1v2h-1zM495 61h1v1h-1zM496 61h1v1h-1zM497 61h1v1h-1zM498 61h1v2h-1zM499 61h1v1h-1zM500 61h1v1h-1zM501 61h1v2h-1zM502 61h1v1h-1zM503 60h1v2h-1zM504 61h1v2h-1zM505 62h1v2h-1zM506 61h1v2h-1zM507 61h1v2h-1zM508 60h1v2h-1zM509 61h1v2h-1zM510 61h1v2h-1zM511 62h1v1h-1zM512 62h1v2h-1zM513 62h1v1h-1zM514 62h1v1h-1zM515 62h1v1h-1zM516 62h1v2h-1zM517 62h1v1h-1zM518 62h1v1h-1zM519 62h1v2h-1zM520 62h1v1h-1zM521 61h1v1h-1zM521 61h1v3h-1zM522 62h1v3h-1zM523 63h1v2h-1zM524 62h1v2h-1zM525 63h1v1h-1zM526 63h1v2h-1zM527 64h1v1h-1zM528 64h1v1h-1zM529 64h1v1h-1zM530 65h1v2h-1zM531 65h1v2h-1zM532 65h1v1h-1zM533 64h1v2h-1zM534 64h1v1h-1zM534 64h1v2h-1zM535 65h1v2h-1zM536 66h1v2h-1zM537 66h1v1h-1zM538 66h1v1h-1zM539 67h1v1h-1zM540 67h1v2h-1zM541 67h1v1h-1zM542 67h1v1h-1zM543 67h1v2h-1zM544 68h1v2h-1zM545 68h1v1h-1zM546 68h1v2h-1zM547 67h1v1h-1zM548 67h1v1h-1zM548 67h1v3h-1zM549 68h1v3h-1zM550 69h1v2h-1zM551 69h1v1h-1zM552 69h1v1h-1zM553 70h1v1h-1zM554 71h1v2h-1zM555 71h1v2h-1zM556 71h1v2h-1zM557 71h1v1h-1zM558 72h1v2h-1zM559 71h1v2h-1zM560 72h1v1h-1zM561 72h1v2h-1zM562 73h1v1h-1zM563 74h1v2h-1zM564 73h1v2h-1zM565 74h1v1h-1zM566 74h1v2h-1zM567 74h1v1h-1zM568 74h1v1h-1zM569 75h1v2h-1zM569 75h1v2h-1zM570 76h1v2h-1zM570 76h1v3h-1zM571 75h1v3h-1zM572 76h1v1h-1zM573 77h1v1h-1zM574 77h1v2h-1zM575 77h1v1h-1zM576 78h1v1h-1zM577 78h1v2h-1zM578 78h1v2h-1zM578 78h1v2h-1zM579 79h1v2h-1zM580 79h1v1h-1zM581 80h1v1h-1zM582 80h1v2h-1zM583 80h1v2h-1zM584 80h1v2h-1zM585 81h1v2h-1zM586 81h1v1h-1zM587 81h1v1h-1zM588 81h1v2h-1zM589 82h1v1h-1zM590 82h1v1h-1zM591 83h1v1h-1zM592 84h1v2h-1zM593 84h1v2h-1zM594 84h1v2h-1zM595 84h1v1h-1zM596 84h1v2h-1zM597 85h1v2h-1zM598 85h1v1h-1zM599 85h1v1h-1zM600 86h1v1h-1zM601 86h1v1h-1zM602 87h1v1h-1zM603 87h1v1h-1zM604 88h1v2h-1zM605 88h1v2h-1zM606 89h1v1h-1zM607 89h1v2h-1zM608 89h1v1h-1zM609 89h1v2h-1zM610 90h1v2h-1zM611 90h1v1h-1zM612 90h1v1h-1zM613 91h1v2h-1zM614 91h1v1h-1zM615 92h1v2h-1zM616 91h1v1h-1zM616 91h1v3h-1zM617 92h1v3h-1zM618 92h1v2h-1zM619 93h1v1h-1zM620 93h1v1h-1zM621 93h1v1h-1zM622 93h1v2h-1zM623 94h1v1h-1zM624 95h1v2h-1zM625 95h1v2h-1zM626 96h1v2h-1zM627 95h1v2h-1zM628 96h1v2h-1zM629 97h1v1h-1zM630 96h1v1h-1zM631 97h1v2h-1zM632 97h1v1h-1zM633 97h1v1h-1zM634 98h1v2h-1zM635 98h1v1h-1zM636 98h1v2h-1zM637 99h1v1h-1zM638 99h1v1h-1zM639 99h1v2h-1zM640 99h1v1h-1zM641 100h1v2h-1zM642 100h1v1h-1zM643 100h1v2h-1zM644 101h1v2h-1zM645 100h1v2h-1zM646 100h1v1h-1zM646 100h1v2h-1zM647 101h1v2h-1zM648 101h1v1h-1zM649 101h1v2h-1zM650 101h1v2h-1zM651 102h1v1h-1zM652 102h1v2h-1zM653 102h1v1h-1zM654 103h1v1h-1zM655 102h1v2h-1zM656 103h1v2h-1zM657 102h1v1h-1zM658 103h1v1h-1zM659 103h1v2h-1zM660 104h1v1h-1zM661 103h1v2h-1zM662 103h1v2h-1zM663 104h1v2h-1zM664 103h1v2h-1zM665 104h1v2h-1zM666 104h1v2h-1zM667 104h1v2h-1zM668 104h1v2h-1zM669 105h1v1h-1zM670 105h1v2h-1zM671 105h1v1h-1zM672 105h1v1h-1zM673 106h1v2h-1zM674 106h1v2h-1zM675 106h1v1h-1zM676 105h1v2h-1zM677 106h1v2h-1zM678 106h1v2h-1zM679 105h1v2h-1zM680 106h1v1h-1zM681 105h1v1h-1zM682 105h1v2h-1zM683 106h1v2h-1zM684 106h1v1h-1zM685 106h1v1h-1zM686 105h1v1h-1zM687 105h1v1h-1zM688 106h1v1h-1zM689 106h1v1h-1zM690 105h1v1h-1zM691 105h1v2h-1zM692 105h1v1h-1zM693 106h1v1h-1zM694 106h1v1h-1zM695 105h1v2h-1zM696 105h1v2h-1zM697 105h1v1h-1zM698 105h1v1h-1zM699 106h1v1h-1zM700 106h1v2h-1zM700 105h1v3h-1zM701 104h1v3h-1zM702 105h1v1h-1zM703 106h1v1h-1zM704 106h1v1h-1zM705 106h1v1h-1zM706 105h1v1h-1zM707 104h1v1h-1zM708 105h1v1h-1zM709 104h1v2h-1zM710 105h1v1h-1zM711 104h1v2h-1zM712 105h1v1h-1zM713 104h1v2h-1zM714 104h1v2h-1zM715 104h1v2h-1zM716 104h1v1h-1zM717 103h1v2h-1zM718 104h1v1h-1zM719 104h1v2h-1zM720 103h1v1h-1zM721 103h1v2h-1zM722 103h1v1h-1zM723 103h1v2h-1zM724 102h1v1h-1zM725 102h1v2h-1zM726 103h1v1h-1zM727 102h1v2h-1zM728 101h1v2h-1zM729 101h1v1h-1zM730 101h1v2h-1zM731 101h1v2h-1zM732 100h1v2h-1zM733 100h1v2h-1zM734 100h1v1h-1zM735 100h1v2h-1zM736 100h1v2h-1zM737 99h1v1h-1zM738 99h1v2h-1zM739 100h1v2h-1zM739 99h1v2h-1zM740 98h1v2h-1zM741 99h1v2h-1zM741 98h1v2h-1zM742 97h1v2h-1zM743 98h1v2h-1zM744 97h1v1h-1zM745 97h1v2h-1zM746 96h1v2h-1zM747 97h1v2h-1zM748 97h1v2h-1zM749 97h1v2h-1zM749 96h1v2h-1zM750 95h1v2h-1zM751 95h1v1h-1zM752 94h1v1h-1zM753 95h1v2h-1zM753 94h1v2h-1zM754 93h1v2h-1zM755 93h1v2h-1zM756 94h1v1h-1zM757 93h1v2h-1zM758 93h1v2h-1zM759 93h1v2h-1zM760 92h1v2h-1zM761 91h1v1h-1zM762 92h1v1h-1zM763 92h1v2h-1zM764 91h1v1h-1zM765 90h1v2h-1zM766 89h1v2h-1zM767 90h1v1h-1zM768 90h1v1h-1zM769 90h1v1h-1zM770 89h1v1h-1zM771 88h1v1h-1zM772 89h1v2h-1zM773 88h1v1h-1zM774 87h1v1h-1zM775 87h1v2h-1zM776 88h1v2h-1zM776 87h1v3h-1zM777 86h1v3h-1zM778 86h1v2h-1zM779 85h1v1h-1zM780 86h1v2h-1zM781 85h1v1h-1zM782 84h1v2h-1zM783 83h1v1h-1zM784 84h1v1h-1zM785 83h1v2h-1zM786 83h1v1h-1zM787 82h1v2h-1zM788 82h1v1h-1zM789 82h1v2h-1z" fill="#ffff00"/><path d="M17 166h1v2h-1zM18 166h1v1h-1zM19 166h1v1h-1zM20 165h1v1h-1zM21 165h1v1h-1zM22 165h1v1h-1zM23 165h1v1h-1zM24 165h1v1h-1zM25 165h1v2h-1zM26 165h1v2h-1zM27 164h1v2h-1zM28 165h1v1h-1zM28 164h1v3h-1zM29 163h1v3h-1zM29 163h1v2h-1zM30 164h1v2h-1zM30 164h1v3h-1zM31 163h1v3h-1zM32 164h1v2h-1zM33 165h1v2h-1zM33 164h1v3h-1zM34 163h1v3h-1zM35 163h1v1h-1zM36 164h1v1h-1zM37 164h1v1h-1zM38 164h1v2h-1zM39 164h1v2h-1zM40 163h1v1h-1zM41 163h1v2h-1zM42 164h1v1h-1zM43 164h1v2h-1zM44 164h1v2h-1zM45 164h1v1h-1zM46 165h1v2h-1zM47 165h1v1h-1zM48 164h1v1h-1zM49 164h1v2h-1zM50 164h1v2h-1zM51 164h1v1h-1zM52 164h1v1h-1zM53 163h1v2h-1zM54 164h1v2h-1zM55 164h1v1h-1zM56 164h1v1h-1zM56 164h1v3h-1zM57 165h1v3h-1zM58 165h1v1h-1zM59 165h1v2h-1zM60 165h1v2h-1zM61 166h1v1h-1zM62 165h1v2h-1zM63 165h1v1h-1zM64 165h1v2h-1zM65 166h1v1h-1zM66 165h1v1h-1zM67 166h1v2h-1zM68 165h1v1h-1zM68 165h1v2h-1zM69 166h1v2h-1zM70 166h1v2h-1zM71 166h1v1h-1zM72 166h1v2h-1zM73 166h1v1h-1zM73 166h1v2h-1zM74 167h1v2h-1zM75 167h1v2h-1zM76 167h1v2h-1zM77 168h1v1h-1zM78 167h1v1h-1zM79 168h1v2h-1zM80 169h1v2h-1zM81 169h1v1h-1zM82 169h1v2h-1zM83 168h1v1h-1zM83 168h1v2h-1zM84 169h1v2h-1zM85 169h1v2h-1zM85 169h1v2h-1zM86 170h1v2h-1zM87 170h1v1h-1zM88 171h1v1h-1zM89 171h1v1h-1zM90 171h1v1h-1zM91 172h1v2h-1zM92 171h1v2h-1zM93 172h1v2h-1zM94 172h1v1h-1zM94 172h1v3h-1zM95 173h1v3h-1zM96 174h1v1h-1zM97 174h1v2h-1zM98 173h1v1h-1zM99 174h1v1h-1zM100 174h1v2h-1zM101 175h1v2h-1zM102 175h1v2h-1zM103 176h1v1h-1zM104 175h1v2h-1zM104 175h1v3h-1zM105 176h1v3h-1zM106 177h1v2h-1zM107 177h1v1h-1zM108 177h1v1h-1zM109 177h1v2h-1zM110 178h1v2h-1zM111 178h1v1h-1zM112 179h1v1h-1zM113 179h1v2h-1zM114 180h1v1h-1zM115 180h1v1h-1zM116 181h1v2h-1zM117 180h1v2h-1zM118 181h1v2h-1zM119 182h1v2h-1zM120 181h1v2h-1zM121 182h1v1h-1zM122 183h1v1h-1zM123 183h1v2h-1zM123 183h1v3h-1zM124 184h1v3h-1zM125 185h1v1h-1zM126 184h1v1h-1zM127 184h1v2h-1zM128 185h1v1h-1zM129 186h1v1h-1zM130 186h1v2h-1zM131 187h1v2h-1zM132 188h1v1h-1zM133 187h1v2h-1zM134 188h1v1h-1zM135 188h1v1h-1zM136 189h1v1h-1zM137 189h1v1h-1zM138 189h1v1h-1zM139 190h1v1h-1zM140 191h1v2h-1zM141 191h1v2h-1zM142 191h1v2h-1zM143 192h1v2h-1zM144 192h1v1h-1zM145 193h1v2h-1zM146 194h1v2h-1zM147 194h1v1h-1zM148 195h1v2h-1zM149 194h1v2h-1zM149 194h1v2h-1zM150 195h1v2h-1zM151 196h1v1h-1zM152 195h1v1h-1zM153 196h1v2h-1zM154 196h1v2h-1zM155 197h1v2h-1zM156 197h1v2h-1zM157 197h1v1h-1zM158 198h1v2h-1zM159 199h1v2h-1zM160 199h1v2h-1zM161 199h1v2h-1zM162 199h1v2h-1zM162 199h1v2h-1zM163 200h1v2h-1zM164 202h1v1h-1zM165 201h1v2h-1zM166 201h1v2h-1zM167 202h1v2h-1zM168 201h1v1h-1zM168 201h1v2h-1zM169 202h1v3h-1zM170 203h1v1h-1zM171 204h1v2h-1zM172 204h1v1h-1zM173 204h1v2h-1zM174 205h1v2h-1zM175 204h1v2h-1zM176 205h1v2h-1zM177 205h1v2h-1zM178 206h1v1h-1zM179 206h1v2h-1zM180 207h1v1h-1zM181 208h1v2h-1zM182 207h1v1h-1zM183 208h1v2h-1zM184 208h1v1h-1zM185 208h1v1h-1zM186 209h1v2h-1zM187 208h1v2h-1zM188 209h1v1h-1zM189 209h1v2h-1zM190 210h1v1h-1zM191 210h1v1h-1zM192 210h1v1h-1zM193 211h1v2h-1zM194 211h1v2h-1zM195 211h1v1h-1zM196 211h1v2h-1zM197 212h1v1h-1zM198 212h1v2h-1zM199 212h1v1h-1zM200 213h1v1h-1zM201 213h1v1h-1zM202 212h1v2h-1zM202 212h1v2h-1zM203 213h1v2h-1zM204 214h1v1h-1zM205 214h1v2h-1zM206 213h1v1h-1zM207 214h1v2h-1zM208 214h1v2h-1zM209 214h1v2h-1zM210 214h1v2h-1zM210 214h1v3h-1zM211 215h1v3h-1zM212 215h1v2h-1zM213 215h1v1h-1zM214 215h1v1h-1zM215 215h1v2h-1zM216 216h1v2h-1zM217 215h1v2h-1zM218 215h1v2h-1zM219 216h1v2h-1zM220 216h1v1h-1zM221 216h1v1h-1zM222 216h1v1h-1zM223 217h1v2h-1zM224 217h1v2h-1zM224 216h1v3h-1zM225 215h1v3h-1zM225 215h1v3h-1zM226 216h1v3h-1zM227 216h1v1h-1zM228 217h1v2h-1zM229 216h1v2h-1zM230 215h1v1h-1zM230 215h1v2h-1zM231 216h1v2h-1zM232 217h1v2h-1zM233 216h1v1h-1zM233 216h1v3h-1zM234 217h1v3h-1zM234 217h1v3h-1zM235 216h1v3h-1zM236 216h1v1h-1zM237 216h1v2h-1zM238 216h1v2h-1zM239 217h1v2h-1zM240 218h1v1h-1zM241 217h1v1h-1zM242 217h1v1h-1zM243 216h1v2h-1zM244 216h1v1h-1zM245 216h1v2h-1zM246 215h1v1h-1zM247 216h1v2h-1zM248 216h1v1h-1zM249 216h1v2h-1zM250 216h1v2h-1zM251 217h1v1h-1zM252 217h1v2h-1zM253 216h1v2h-1zM254 215h1v2h-1zM255 216h1v2h-1zM256 215h1v2h-1zM257 216h1v2h-1zM258 216h1v1h-1zM259 215h1v1h-1zM260 214h1v2h-1zM261 214h1v1h-1zM262 214h1v1h-1zM263 214h1v2h-1zM264 214h1v2h-1zM265 214h1v1h-1zM266 213h1v2h-1zM267 214h1v2h-1zM268 214h1v1h-1zM269 213h1v2h-1zM270 213h1v2h-1zM271 214h1v1h-1zM272 213h1v1h-1zM273 212h1v2h-1zM274 212h1v2h-1zM275 212h1v1h-1zM276 212h1v1h-1zM277 211h1v1h-1zM278 211h1v2h-1zM279 211h1v1h-1zM280 210h1v1h-1zM281 209h1v1h-1zM282 210h1v1h-1zM283 209h1v2h-1zM284 209h1v1h-1zM285 208h1v2h-1zM286 209h1v1h-1zM287 208h1v1h-1zM288 207h1v1h-1zM289 208h1v2h-1zM290 208h1v1h-1zM290 207h1v3h-1zM291 206h1v3h-1zM292 206h1v1h-1zM293 206h1v2h-1zM294 205h1v2h-1zM295 206h1v2h-1zM296 206h1v2h-1zM296 205h1v3h-1zM297 204h1v3h-1zM298 205h1v2h-1zM299 205h1v1h-1zM300 204h1v1h-1zM301 203h1v2h-1zM302 204h1v1h-1zM302 203h1v3h-1zM303 202h1v3h-1zM304 201h1v2h-1zM305 202h1v2h-1zM306 201h1v1h-1zM307 201h1v1h-1zM307 200h1v2h-1zM308 199h1v2h-1zM309 200h1v1h-1zM310 200h1v2h-1zM311 199h1v1h-1zM312 198h1v1h-1zM312 198h1v2h-1zM313 199h1v2h-1zM314 199h1v2h-1zM315 198h1v1h-1zM316 197h1v1h-1zM317 197h1v2h-1zM318 196h1v1h-1zM319 197h1v2h-1zM319 196h1v3h-1zM320 195h1v3h-1zM321 195h1v2h-1zM322 196h1v1h-1zM322 195h1v3h-1zM323 194h1v3h-1zM324 195h1v1h-1zM324 194h1v2h-1zM325 193h1v2h-1zM326 194h1v2h-1zM327 193h1v2h-1zM328 192h1v2h-1zM329 192h1v2h-1zM330 191h1v2h-1zM331 191h1v1h-1zM332 191h1v2h-1zM333 190h1v1h-1zM334 190h1v2h-1zM335 190h1v2h-1zM336 189h1v1h-1zM337 188h1v2h-1zM338 188h1v2h-1zM339 188h1v1h-1zM339 187h1v2h-1zM340 186h1v2h-1zM341 187h1v2h-1zM342 187h1v1h-1zM343 186h1v2h-1zM344 186h1v1h-1zM345 185h1v1h-1zM346 184h1v2h-1zM347 184h1v2h-1zM348 184h1v1h-1zM349 183h1v2h-1zM350 183h1v2h-1zM351 183h1v1h-1zM352 182h1v2h-1zM353 182h1v2h-1zM354 182h1v1h-1zM355 181h1v1h-1zM356 180h1v2h-1zM357 180h1v2h-1zM358 181h1v2h-1zM358 180h1v2h-1zM359 179h1v2h-1zM360 179h1v1h-1zM361 178h1v1h-1zM362 177h1v2h-1zM363 178h1v2h-1zM364 177h1v2h-1zM365 177h1v1h-1zM366 176h1v2h-1zM367 176h1v2h-1zM368 176h1v1h-1zM369 176h1v2h-1zM370 175h1v1h-1zM371 175h1v2h-1zM372 174h1v2h-1zM373 174h1v1h-1zM374 174h1v2h-1zM375 174h1v2h-1zM376 173h1v1h-1zM377 173h1v2h-1zM378 173h1v2h-1zM379 173h1v2h-1zM380 172h1v2h-1zM381 171h1v1h-1zM382 171h1v2h-1zM383 171h1v1h-1zM384 170h1v2h-1zM385 171h1v1h-1zM386 170h1v2h-1zM387 170h1v2h-1zM388 170h1v1h-1zM389 169h1v1h-1zM390 169h1v1h-1zM391 169h1v2h-1zM392 169h1v1h-1zM393 168h1v1h-1zM394 168h1v2h-1zM395 169h1v1h-1zM395 168h1v3h-1zM396 167h1v3h-1zM397 167h1v2h-1zM398 168h1v2h-1zM399 168h1v1h-1zM400 167h1v2h-1zM401 167h1v1h-1zM402 166h1v2h-1zM403 166h1v2h-1zM404 167h1v2h-1zM405 166h1v2h-1zM406 166h1v1h-1zM407 165h1v1h-1zM408 166h1v2h-1zM409 166h1v1h-1zM410 165h1v2h-1zM411 165h1v1h-1zM412 165h1v1h-1zM413 164h1v2h-1zM414 164h1v2h-1zM415 164h1v1h-1zM416 164h1v2h-1zM417 164h1v2h-1zM418 164h1v2h-1zM419 164h1v2h-1zM420 165h1v1h-1zM421 164h1v2h-1zM422 164h1v1h-1zM423 163h1v2h-1zM424 163h1v2h-1zM425 164h1v2h-1zM426 164h1v2h-1zM427 163h1v2h-1zM428 164h1v2h-1zM429 163h1v2h-1zM430 164h1v2h-1zM431 164h1v1h-1zM432 164h1v1h-1zM433 164h1v2h-1zM434 164h1v2h-1zM435 163h1v2h-1zM436 164h1v1h-1zM437 164h1v1h-1zM438 164h1v1h-1zM439 163h1v2h-1zM439 163h1v3h-1zM440 164h1v3h-1zM441 164h1v1h-1zM442 165h1v1h-1zM443 164h1v2h-1zM444 164h1v2h-1zM445 164h1v1h-1zM446 165h1v1h-1zM447 165h1v2h-1zM448 165h1v2h-1zM449 165h1v2h-1zM450 165h1v1h-1zM451 166h1v1h-1zM452 166h1v1h-1zM453 166h1v2h-1zM454 166h1v2h-1zM455 166h1v1h-1zM456 167h1v2h-1zM457 167h1v1h-1zM458 166h1v2h-1zM459 166h1v1h-1zM460 166h1v1h-1zM461 167h1v1h-1zM462 168h1v2h-1zM463 168h1v2h-1zM464 168h1v2h-1zM465 168h1v1h-1zM466 168h1v2h-1zM467 169h1v2h-1zM468 169h1v2h-1zM469 169h1v2h-1zM470 170h1v2h-1zM471 169h1v1h-1zM472 170h1v2h-1zM473 170h1v2h-1zM474 170h1v1h-1zM475 171h1v2h-1zM476 172h1v1h-1zM477 171h1v1h-1zM478 171h1v2h-1zM479 172h1v2h-1zM480 173h1v1h-1zM481 173h1v2h-1zM482 173h1v1h-1zM483 174h1v1h-1zM484 174h1v1h-1zM485 175h1v1h-1zM486 174h1v1h-1zM487 175h1v2h-1zM488 174h1v2h-1zM488 174h1v2h-1zM489 175h1v2h-1zM490 176h1v1h-1zM491 176h1v1h-1zM492 177h1v1h-1zM493 176h1v1h-1zM494 176h1v2h-1zM495 177h1v2h-1zM496 178h1v1h-1zM497 178h1v2h-1zM498 177h1v2h-1zM498 177h1v3h-1zM499 178h1v3h-1zM500 179h1v1h-1zM501 180h1v2h-1zM502 181h1v1h-1zM503 180h1v2h-1zM504 181h1v1h-1zM505 182h1v2h-1zM506 181h1v1h-1zM506 181h1v2h-1zM507 182h1v2h-1zM508 183h1v2h-1zM509 183h1v2h-1zM510 183h1v2h-1zM511 184h1v2h-1zM512 184h1v1h-1zM513 185h1v1h-1zM514 186h1v1h-1zM514 185h1v2h-1zM515 184h1v2h-1zM515 184h1v2h-1zM516 185h1v2h-1zM517 186h1v1h-1zM518 186h1v1h-1zM518 186h1v3h-1zM519 187h1v3h-1zM520 187h1v2h-1zM521 188h1v1h-1zM522 189h1v1h-1zM523 189h1v2h-1zM524 190h1v2h-1zM525 190h1v1h-1zM526 190h1v1h-1zM527 191h1v2h-1zM528 191h1v1h-1zM529 192h1v1h-1zM530 193h1v2h-1zM531 193h1v2h-1zM532 192h1v2h-1zM533 193h1v1h-1zM534 194h1v2h-1zM535 195h1v1h-1zM536 194h1v2h-1zM537 195h1v2h-1zM538 194h1v1h-1zM538 194h1v2h-1zM539 195h1v2h-1zM540 196h1v1h-1zM541 196h1v1h-1zM541 196h1v3h-1zM542 197h1v3h-1zM543 198h1v2h-1zM544 198h1v1h-1zM545 198h1v2h-1zM546 199h1v2h-1zM547 199h1v2h-1zM548 200h1v2h-1zM549 200h1v2h-1zM550 200h1v1h-1zM551 200h1v1h-1zM552 201h1v1h-1zM553 201h1v1h-1zM554 202h1v2h-1zM555 203h1v1h-1zM556 202h1v2h-1zM557 202h1v2h-1zM558 203h1v1h-1zM559 202h1v2h-1zM559 202h1v2h-1zM560 203h1v2h-1zM561 204h1v1h-1zM561 204h1v2h-1zM562 205h1v2h-1zM563 206h1v2h-1zM564 206h1v1h-1zM565 206h1v1h-1zM566 206h1v2h-1zM567 207h1v1h-1zM568 207h1v2h-1zM569 208h1v1h-1zM570 207h1v1h-1zM571 208h1v1h-1zM572 208h1v1h-1zM573 208h1v2h-1zM574 209h1v1h-1zM575 209h1v1h-1zM576 209h1v2h-1zM577 210h1v1h-1zM578 210h1v2h-1zM579 210h1v2h-1zM580 211h1v1h-1zM581 210h1v1h-1zM582 211h1v2h-1zM583 212h1v1h-1zM584 211h1v2h-1zM585 212h1v2h-1zM586 211h1v2h-1zM587 212h1v2h-1zM588 213h1v2h-1zM589 213h1v2h-1zM590 212h1v2h-1zM590 212h1v3h-1zM591 213h1v3h-1zM592 213h1v2h-1zM593 213h1v1h-1zM594 214h1v1h-1zM595 215h1v1h-1zM596 214h1v1h-1zM597 214h1v1h-1zM598 215h1v1h-1zM599 214h1v1h-1zM600 215h1v1h-1zM601 215h1v1h-1zM602 216h1v2h-1zM603 215h1v1h-1zM604 215h1v1h-1zM605 215h1v2h-1zM606 215h1v2h-1zM607 216h1v2h-1zM608 215h1v2h-1zM608 215h1v3h-1zM609 216h1v3h-1zM610 216h1v2h-1zM611 217h1v2h-1zM612 217h1v2h-1zM613 216h1v2h-1zM614 216h1v2h-1zM615 216h1v2h-1zM616 216h1v1h-1zM617 217h1v1h-1zM618 217h1v1h-1zM619 217h1v1h-1zM620 217h1v1h-1zM621 217h1v1h-1zM622 216h1v2h-1zM623 217h1v1h-1zM624 217h1v1h-1zM625 217h1v2h-1zM626 217h1v2h-1zM627 217h1v2h-1zM628 217h1v2h-1zM629 216h1v2h-1zM630 216h1v1h-1zM631 216h1v2h-1zM632 216h1v1h-1zM633 215h1v2h-1zM633 215h1v3h-1zM634 216h1v3h-1zM634 216h1v3h-1zM635 215h1v3h-1zM636 216h1v1h-1zM637 217h1v1h-1zM638 216h1v2h-1zM639 216h1v1h-1zM640 216h1v1h-1zM641 215h1v2h-1zM642 216h1v2h-1zM643 216h1v1h-1zM644 215h1v1h-1zM645 216h1v2h-1zM646 215h1v1h-1zM647 215h1v1h-1zM648 215h1v1h-1zM649 215h1v1h-1zM650 214h1v2h-1zM651 214h1v2h-1zM652 214h1v1h-1zM653 214h1v2h-1zM654 213h1v1h-1zM655 213h1v1h-1zM656 213h1v1h-1zM657 213h1v2h-1zM658 212h1v1h-1zM659 212h1v2h-1zM660 212h1v2h-1zM661 211h1v2h-1zM662 211h1v2h-1zM663 211h1v2h-1zM664 210h1v1h-1zM665 211h1v2h-1zM666 211h1v1h-1zM667 210h1v2h-1zM668 210h1v2h-1zM669 210h1v1h-1zM670 209h1v1h-1zM671 209h1v2h-1zM672 209h1v1h-1zM673 209h1v1h-1zM674 208h1v1h-1zM675 208h1v2h-1zM676 208h1v1h-1zM677 207h1v2h-1zM678 207h1v2h-1zM679 206h1v1h-1zM680 207h1v2h-1zM681 206h1v1h-1zM682 205h1v2h-1zM683 206h1v1h-1zM683 205h1v2h-1zM684 204h1v2h-1zM685 205h1v1h-1zM686 204h1v2h-1zM687 204h1v2h-1zM688 203h1v1h-1zM689 203h1v1h-1zM690 202h1v2h-1zM690 202h1v2h-1zM691 203h1v2h-1zM691 203h1v2h-1zM692 202h1v2h-1zM693 202h1v2h-1zM694 201h1v2h-1zM695 200h1v2h-1zM696 199h1v2h-1zM697 200h1v1h-1zM698 199h1v1h-1zM699 199h1v1h-1zM700 199h1v2h-1zM701 199h1v1h-1zM702 198h1v1h-1zM703 197h1v1h-1zM704 197h1v2h-1zM705 197h1v1h-1zM706 197h1v2h-1zM707 196h1v1h-1zM708 196h1v1h-1zM709 195h1v2h-1zM710 194h1v1h-1zM711 195h1v1h-1zM712 194h1v2h-1zM713 193h1v1h-1zM714 193h1v1h-1zM715 192h1v2h-1zM716 192h1v2h-1zM717 192h1v1h-1zM718 191h1v2h-1zM719 192h1v2h-1zM720 191h1v2h-1zM721 190h1v1h-1zM722 190h1v1h-1zM723 190h1v2h-1zM723 189h1v2h-1zM724 188h1v2h-1zM725 189h1v2h-1zM726 188h1v1h-1zM727 189h1v1h-1zM727 188h1v3h-1zM728 187h1v3h-1zM729 187h1v2h-1zM730 187h1v2h-1zM731 186h1v1h-1zM732 185h1v1h-1zM733 185h1v1h-1zM734 184h1v1h-1zM735 184h1v1h-1zM736 184h1v2h-1zM737 183h1v2h-1zM737 182h1v3h-1zM738 181h1v3h-1zM738 181h1v3h-1zM739 182h1v3h-1zM740 182h1v1h-1zM741 182h1v2h-1zM741 181h1v3h-1zM742 180h1v3h-1zM743 180h1v1h-1zM744 180h1v2h-1zM745 180h1v2h-1zM746 180h1v1h-1zM746 179h1v3h-1zM747 178h1v3h-1zM748 179h1v1h-1zM749 178h1v1h-1zM750 177h1v2h-1zM750 177h1v2h-1zM751 178h1v2h-1zM752 178h1v1h-1zM752 177h1v2h-1zM753 176h1v2h-1zM754 176h1v1h-1zM755 177h1v2h-1zM756 176h1v1h-1zM757 175h1v1h-1zM758 175h1v1h-1zM759 174h1v1h-1zM760 174h1v2h-1zM761 175h1v1h-1zM761 174h1v2h-1zM762 173h1v2h-1zM763 173h1v2h-1zM764 173h1v1h-1zM765 173h1v1h-1zM766 172h1v1h-1zM767 172h1v2h-1zM768 172h1v2h-1zM769 172h1v1h-1zM770 172h1v1h-1zM770 171h1v3h-1zM771 170h1v3h-1zM772 170h1v1h-1zM773 171h1v2h-1zM774 170h1v2h-1zM775 170h1v2h-1zM776 170h1v2h-1zM777 169h1v2h-1zM778 168h1v1h-1zM778 168h1v3h-1zM779 169h1v3h-1zM779 168h1v3h-1zM780 167h1v2h-1zM781 168h1v2h-1zM782 168h1v1h-1zM783 167h1v2h-1zM784 167h1v2h-1zM785 168h1v2h-1zM786 167h1v2h-1zM787 167h1v2h-1zM788 167h1v2h-1zM789 166h1v2h-1z" fill="#ee1188"/>
<path d="M403 131h1v2h1v2h1v2h1v2h-7v-2h1v-2h1v-2h1z" fill="#ffff00"/>
<path d="M403 237h1v2h1v2h1v2h1v2h-7v-2h1v-2h1v-2h1z" fill="#ee1188"/>
<path d="M790 84h2v-1h2v-1h2v-1h2v7h-2v-1h-2v-1h-2v-1h-2z" fill="#ffff00"/>
<rect x="7" y="83" width="11" height="2" fill="#ffff00"/><rect x="7" y="85" width="1" height="2" fill="#ffff00"/>
<rect x="7" y="190" width="11" height="2" fill="#ee1188"/><rect x="7" y="192" width="1" height="2" fill="#ee1188"/>
</svg><div class="a" style="left:5px;top:73px;font-size:10px;color:#ffff00;"><b style="width:7.000px">C</b><b style="width:6.000px">1</b></div><div class="a" style="left:5px;top:180px;font-size:10px;color:#ee1188;"><b style="width:7.000px">C</b><b style="width:6.000px">2</b></div><div style="position:absolute;left:4px;top:247px;width:97px;height:46px;background:#666699;border-top:1px solid #8c8cd0;border-left:1px solid #8c8cd0;border-right:1px solid #1c1c2c;border-bottom:1px solid #1c1c2c;border-radius:3px"></div><div style="position:absolute;left:6px;top:249px;width:93px;height:13px;background:#ffff00;border-radius:2px"></div><div class="a" style="left:7px;top:249px;font-size:12px;color:#000;"><b style="width:9.000px">C</b><b style="width:7.000px">1</b></div><div style="position:absolute;left:47px;top:250px;width:11px;height:11px;background:#000;border-radius:3px"></div><div class="a" style="left:49px;top:251px;font-size:10px;color:#ffff00;"><b style="width:7.000px">B</b></div><div style="position:absolute;left:59px;top:250px;width:23px;height:11px;background:#000;border-radius:3px"></div><div class="a" style="left:61px;top:251px;font-size:10px;color:#ffff00;"><b style="width:7.000px">D</b><b style="width:6.000px">5</b><b style="width:6.000px">0</b></div><div style="position:absolute;left:83px;top:250px;width:15px;height:11px;background:#000;border-radius:3px"></div><div class="a" style="left:84px;top:251px;font-size:10px;color:#ffff00;"><b style="width:3.000px">(</b><b style="width:6.000px">1</b><b style="width:3.000px">)</b></div><div class="a" style="left:39px;top:265px;font-size:12px;color:#fff;"><b style="width:7.000px">5</b><b style="width:7.000px">0</b><b style="width:7.000px">0</b><b style="width:3.000px"> </b><b style="width:10.000px">m</b><b style="width:8.000px">V</b><b style="width:3.000px">/</b><b style="width:7.000px">d</b><b style="width:3.000px">i</b><b style="width:5.000px">v</b></div><div class="a" style="left:32px;top:279px;font-size:12px;color:#fff;"><b style="width:7.000px">2</b><b style="width:7.000px">0</b><b style="width:3.000px"> </b><b style="width:10.000px">m</b><b style="width:8.000px">V</b><b style="width:3.000px"> </b><b style="width:7.000px">o</b><b style="width:3.000px">f</b><b style="width:3.000px">f</b><b style="width:6.000px">s</b><b style="width:7.000px">e</b><b style="width:3.000px">t</b></div><div style="position:absolute;left:104px;top:247px;width:97px;height:46px;background:#666699;border-top:1px solid #8c8cd0;border-left:1px solid #8c8cd0;border-right:1px solid #1c1c2c;border-bottom:1px solid #1c1c2c;border-radius:3px"></div><div style="position:absolute;left:106px;top:249px;width:93px;height:13px;background:#ee0099;border-radius:2px"></div><div class="a" style="left:107px;top:249px;font-size:12px;color:#330022;"><b style="width:9.000px">C</b><b style="width:7.000px">2</b></div><div style="position:absolute;left:147px;top:250px;width:11px;height:11px;background:#000;border-radius:3px"></div><div class="a" style="left:149px;top:251px;font-size:10px;color:#ff1a8c;"><b style="width:7.000px">B</b></div><div style="position:absolute;left:159px;top:250px;width:23px;height:11px;background:#000;border-radius:3px"></div><div class="a" style="left:161px;top:251px;font-size:10px;color:#ff1a8c;"><b style="width:7.000px">D</b><b style="width:6.000px">5</b><b style="width:6.000px">0</b></div><div style="position:absolute;left:183px;top:250px;width:15px;height:11px;background:#000;border-radius:3px"></div><div class="a" style="left:184px;top:251px;font-size:10px;color:#ff1a8c;"><b style="width:3.000px">(</b><b style="width:6.000px">1</b><b style="width:3.000px">)</b></div><div class="a" style="left:139px;top:265px;font-size:12px;color:#fff;"><b style="width:7.000px">2</b><b style="width:7.000px">0</b><b style="width:7.000px">0</b><b style="width:3.000px"> </b><b style="width:10.000px">m</b><b style="width:8.000px">V</b><b style="width:3.000px">/</b><b style="width:7.000px">d</b><b style="width:3.000px">i</b><b style="width:5.000px">v</b></div><div class="a" style="left:150px;top:279px;font-size:12px;color:#fff;"><b style="width:4.000px">-</b><b style="width:7.000px">2</b><b style="width:7.000px">0</b><b style="width:3.000px">.</b><b style="width:7.000px">0</b><b style="width:3.000px"> </b><b style="width:10.000px">m</b><b style="width:8.000px">V</b></div><div style="position:absolute;left:126px;top:257px;width:20px;height:1px;background:#ff0060"></div><div style="position:absolute;left:583px;top:247px;width:112px;height:46px;background:#666699;border-top:1px solid #8c8cd0;border-left:1px solid #8c8cd0;border-right:1px solid #1c1c2c;border-bottom:1px solid #1c1c2c;border-radius:3px"></div><div style="position:absolute;left:585px;top:249px;width:109px;height:13px;background:#fff;border-radius:2px"></div><div class="a" style="left:585px;top:249px;font-size:12px;color:#000;"><b style="width:7.000px">T</b><b style="width:3.000px">i</b><b style="width:10.000px">m</b><b style="width:7.000px">e</b><b style="width:7.000px">b</b><b style="width:7.000px">a</b><b style="width:6.000px">s</b><b style="width:7.000px">e</b></div><div class="a" style="left:660px;top:249px;font-size:12px;color:#000;"><b style="width:7.000px">0</b><b style="width:3.000px">.</b><b style="width:7.000px">0</b><b style="width:3.000px"> </b><b style="width:7.000px">n</b><b style="width:6.000px">s</b></div><div class="a" style="left:585px;top:265px;font-size:12px;color:#f0f0f0;"><b style="width:8.333px">S</b><b style="width:7.333px">e</b><b style="width:7.333px">q</b><b style="width:3.333px">:</b><b style="width:3.333px"> </b><b style="width:7.333px">1</b><b style="width:7.000px">0</b></div><div class="a" style="left:653px;top:265px;font-size:12px;color:#f0f0f0;"><b style="width:7.000px">2</b><b style="width:7.000px">0</b><b style="width:3.000px">.</b><b style="width:7.000px">0</b><b style="width:3.000px"> </b><b style="width:7.000px">n</b><b style="width:6.000px">s</b></div><div class="a" style="left:585px;top:279px;font-size:12px;color:#f0f0f0;"><b style="width:7.000px">1</b><b style="width:3.000px">.</b><b style="width:7.000px">0</b><b style="width:7.000px">0</b><b style="width:3.000px"> </b><b style="width:6.000px">k</b><b style="width:8.000px">S</b></div><div class="a" style="left:647px;top:279px;font-size:12px;color:#f0f0f0;"><b style="width:7.000px">5</b><b style="width:3.000px">.</b><b style="width:7.000px">0</b><b style="width:3.000px"> </b><b style="width:9.000px">G</b><b style="width:8.000px">S</b><b style="width:3.000px">/</b><b style="width:6.000px">s</b></div><div style="position:absolute;left:698px;top:247px;width:97px;height:46px;background:#666699;border-top:1px solid #8c8cd0;border-left:1px solid #8c8cd0;border-right:1px solid #1c1c2c;border-bottom:1px solid #1c1c2c;border-radius:3px"></div><div style="position:absolute;left:700px;top:249px;width:94px;height:13px;background:#fff;border-radius:2px"></div><div class="a" style="left:701px;top:249px;font-size:12px;color:#000;"><b style="width:7.000px">T</b><b style="width:4.000px">r</b><b style="width:3.000px">i</b><b style="width:7.000px">g</b><b style="width:7.000px">g</b><b style="width:7.000px">e</b><b style="width:4.000px">r</b></div><div style="position:absolute;left:775px;top:250px;width:18px;height:11px;background:#000;border-radius:3px"></div><div class="a" style="left:777px;top:250px;font-size:11px;color:#fff;"><b style="width:8.000px">C</b><b style="width:6.000px">1</b></div><div class="a" style="left:700px;top:265px;font-size:12px;color:#f0f0f0;"><b style="width:8.000px">S</b><b style="width:3.000px">t</b><b style="width:7.000px">o</b><b style="width:7.000px">p</b></div><div class="a" style="left:754px;top:265px;font-size:12px;color:#f0f0f0;"><b style="width:4.000px">-</b><b style="width:7.000px">2</b><b style="width:7.000px">0</b><b style="width:3.000px"> </b><b style="width:10.000px">m</b><b style="width:8.000px">V</b></div><div class="a" style="left:700px;top:279px;font-size:12px;color:#f0f0f0;"><b style="width:8.500px">E</b><b style="width:7.500px">d</b><b style="width:7.500px">g</b><b style="width:7.000px">e</b></div><div class="a" style="left:752px;top:279px;font-size:12px;color:#f0f0f0;"><b style="width:8.000px">P</b><b style="width:7.000px">o</b><b style="width:6.000px">s</b><b style="width:3.000px">i</b><b style="width:3.000px">t</b><b style="width:3.000px">i</b><b style="width:5.000px">v</b><b style="width:7.000px">e</b></div><div style="position:absolute;left:6px;top:301px;width:76px;height:29px;background:#2b2b2b;border-top:1px solid #6a6ab4;border-left:1px solid #6a6ab4;border-right:1px solid #101040;border-top-left-radius:2px"></div><div class="a" style="left:18px;top:310px;font-size:11px;color:#f0f0f0;"><b style="width:7.000px">A</b><b style="width:6.000px">c</b><b style="width:6.000px">q</b><b style="width:6.000px">u</b><b style="width:2.000px">i</b><b style="width:6.000px">s</b><b style="width:2.000px">i</b><b style="width:3.000px">t</b><b style="width:2.000px">i</b><b style="width:6.000px">o</b><b style="width:6.000px">n</b></div><div style="position:absolute;left:82px;top:299px;width:82px;height:33px;background:#333366;border-top:1px solid #7878c0;border-left:1px solid #8080c0;border-top-left-radius:3px;border-top-right-radius:3px"></div><div class="a" style="left:95px;top:310px;font-size:11px;color:#fff;"><b style="width:7.000px">T</b><b style="width:3.000px">r</b><b style="width:2.000px">i</b><b style="width:6.000px">g</b><b style="width:6.000px">g</b><b style="width:6.000px">e</b><b style="width:3.000px">r</b><b style="width:3.000px"> </b><b style="width:3.000px">t</b><b style="width:2.000px">i</b><b style="width:9.000px">m</b><b style="width:6.000px">e</b></div><div style="position:absolute;left:164px;top:301px;width:58px;height:29px;background:#2b2b2b;border-top:1px solid #6a6ab4;border-left:none;border-right:1px solid #101040;border-top-left-radius:2px"></div><div class="a" style="left:174px;top:310px;font-size:11px;color:#f0f0f0;"><b style="width:8.250px">C</b><b style="width:6.250px">1</b><b style="width:2.250px">.</b><b style="width:2.250px">.</b><b style="width:2.250px">.</b><b style="width:8.250px">C</b><b style="width:6.000px">4</b></div><div style="position:absolute;left:222px;top:301px;width:57px;height:29px;background:#2b2b2b;border-top:1px solid #6a6ab4;border-left:1px solid #6a6ab4;border-right:1px solid #101040;border-top-left-radius:2px"></div><div class="a" style="left:233px;top:310px;font-size:11px;color:#f0f0f0;"><b style="width:7.333px">F</b><b style="width:6.333px">1</b><b style="width:2.333px">.</b><b style="width:2.333px">.</b><b style="width:2.333px">.</b><b style="width:7.333px">F</b><b style="width:6.000px">4</b></div><div style="position:absolute;left:279px;top:301px;width:45px;height:29px;background:#2b2b2b;border-top:1px solid #6a6ab4;border-left:1px solid #6a6ab4;border-right:1px solid #101040;border-top-left-radius:2px"></div><div class="a" style="left:294px;top:310px;font-size:11px;color:#f0f0f0;"><b style="width:6.000px">X</b><b style="width:7.000px">Y</b></div><div style="position:absolute;left:324px;top:301px;width:61px;height:29px;background:#2b2b2b;border-top:1px solid #6a6ab4;border-left:1px solid #6a6ab4;border-right:1px solid #101040;border-top-left-radius:2px"></div><div class="a" style="left:336px;top:310px;font-size:11px;color:#f0f0f0;"><b style="width:9.167px">M</b><b style="width:6.167px">1</b><b style="width:2.167px">.</b><b style="width:2.167px">.</b><b style="width:2.167px">.</b><b style="width:9.167px">M</b><b style="width:6.000px">4</b></div><div style="position:absolute;left:385px;top:301px;width:56px;height:29px;background:#2b2b2b;border-top:1px solid #6a6ab4;border-left:1px solid #6a6ab4;border-right:1px solid #101040;border-top-left-radius:2px"></div><div class="a" style="left:397px;top:310px;font-size:11px;color:#f0f0f0;"><b style="width:9.200px">O</b><b style="width:3.200px">t</b><b style="width:6.200px">h</b><b style="width:6.200px">e</b><b style="width:3.200px">r</b><b style="width:6.000px">s</b></div><div style="position:absolute;left:752px;top:297px;width:44px;height:31px;background:#666699;border-radius:3px;border-top:1px solid #8a8abb;border-left:1px solid #7a7ab0;border-bottom:1px solid #222233"></div><div class="a" style="left:758px;top:307px;font-size:12px;color:#fff;"><b style="width:9.375px">C</b><b style="width:3.375px">l</b><b style="width:7.375px">o</b><b style="width:6.375px">s</b><b style="width:7.000px">e</b></div><div style="position:absolute;left:4px;top:330px;width:792px;height:248px;background:#333366;border-top:1px solid #9494d0;border-left:1px solid #9494d0;border-right:1px solid #3a3a50;border-bottom:1px solid #3a3a50"></div><div style="position:absolute;left:82px;top:330px;width:82px;height:1px;background:#333366"></div><div class="a" style="left:32px;top:336px;font-size:12px;color:#ffff33;"><b style="width:7.000px">T</b><b style="width:3.000px">i</b><b style="width:10.000px">m</b><b style="width:7.000px">e</b><b style="width:3.000px"> </b><b style="width:7.000px">o</b><b style="width:3.000px">f</b></div><div class="a" style="left:378px;top:336px;font-size:12px;color:#ffff33;"><b style="width:7.667px">T</b><b style="width:3.667px">i</b><b style="width:10.667px">m</b><b style="width:7.000px">e</b></div><div class="a" style="left:692px;top:336px;font-size:12px;color:#ffff33;"><b style="width:8.107px">S</b><b style="width:7.107px">h</b><b style="width:7.107px">o</b><b style="width:9.107px">w</b><b style="width:3.107px"> </b><b style="width:8.107px">S</b><b style="width:3.107px">t</b><b style="width:7.107px">a</b><b style="width:3.107px">t</b><b style="width:7.107px">u</b><b style="width:6.107px">s</b><b style="width:3.107px"> </b><b style="width:7.107px">F</b><b style="width:7.107px">o</b><b style="width:4.000px">r</b></div><div style="position:absolute;left:99px;top:354px;width:1px;height:207px;background:#a0a0a8"></div><div style="position:absolute;left:680px;top:354px;width:1px;height:207px;background:#a0a0a8"></div><div style="position:absolute;left:24px;top:366px;width:54px;height:32px;background:#cc99cc;border-top:1px solid #1a1a30;border-left:1px solid #1a1a30;border-bottom:1px solid #9999cc;border-radius:2px"></div><div class="a" style="left:27px;top:377px;font-size:12px;color:#fff;"><b style="width:9.333px">C</b><b style="width:7.333px">h</b><b style="width:7.333px">a</b><b style="width:7.333px">n</b><b style="width:7.333px">n</b><b style="width:7.333px">e</b><b style="width:3.000px">l</b></div><div style="position:absolute;left:24px;top:402px;width:54px;height:32px;border:1px solid #6a6aa8;border-radius:4px"></div><div class="a" style="left:42px;top:412px;font-size:12px;color:#a0a090;letter-spacing:-1px"><b style="width:10.000px">M</b><b style="width:7.000px">1</b></div><div style="position:absolute;left:24px;top:438px;width:54px;height:32px;border:1px solid #6a6aa8;border-radius:4px"></div><div class="a" style="left:42px;top:448px;font-size:12px;color:#a0a090;letter-spacing:-1px"><b style="width:10.000px">M</b><b style="width:7.000px">2</b></div><div style="position:absolute;left:24px;top:474px;width:54px;height:32px;border:1px solid #6a6aa8;border-radius:4px"></div><div class="a" style="left:42px;top:484px;font-size:12px;color:#a0a090;letter-spacing:-1px"><b style="width:10.000px">M</b><b style="width:7.000px">3</b></div><div style="position:absolute;left:24px;top:510px;width:54px;height:32px;border:1px solid #6a6aa8;border-radius:4px"></div><div class="a" style="left:42px;top:520px;font-size:12px;color:#a0a090;letter-spacing:-1px"><b style="width:10.000px">M</b><b style="width:7.000px">4</b></div><div class="a" style="left:112px;top:393px;font-size:12px;color:#fff;"><b style="width:8.500px">S</b><b style="width:7.500px">e</b><b style="width:7.000px">g</b></div><div class="a" style="left:161px;top:393px;font-size:12px;color:#fff;"><b style="width:3.000px">:</b></div><div class="a" style="left:224px;top:393px;font-size:12px;color:#fff;"><b style="width:7.200px">T</b><b style="width:3.200px">i</b><b style="width:10.200px">m</b><b style="width:7.200px">e</b><b style="width:3.200px"> </b><b style="width:3.000px">:</b></div><div class="a" style="left:349px;top:393px;font-size:12px;color:#fff;"><b style="width:6.000px">s</b><b style="width:3.000px">i</b><b style="width:7.000px">n</b><b style="width:6.000px">c</b><b style="width:7.000px">e</b><b style="width:3.000px"> </b><b style="width:8.000px">S</b><b style="width:7.000px">e</b><b style="width:7.000px">g</b><b style="width:10.000px">m</b><b style="width:7.000px">e</b><b style="width:7.000px">n</b><b style="width:3.000px">t</b><b style="width:3.000px"> </b><b style="width:7.000px">1</b></div><div class="a" style="left:476px;top:393px;font-size:12px;color:#fff;"><b style="width:7.000px">b</b><b style="width:7.000px">e</b><b style="width:3.000px">t</b><b style="width:9.000px">w</b><b style="width:7.000px">e</b><b style="width:7.000px">e</b><b style="width:7.000px">n</b><b style="width:3.000px"> </b><b style="width:8.000px">S</b><b style="width:7.000px">e</b><b style="width:7.000px">g</b><b style="width:10.000px">m</b><b style="width:7.000px">e</b><b style="width:7.000px">n</b><b style="width:3.000px">t</b></div><div class="a" style="left:115px;top:421px;font-size:12px;color:#fff;"><b style="width:7.000px">1</b><b style="width:4.000px">)</b></div><div class="a" style="left:193px;top:421px;font-size:12px;color:#fff;"><b style="width:7.000px">2</b><b style="width:4.000px">-</b><b style="width:9.000px">N</b><b style="width:7.000px">o</b><b style="width:5.000px">v</b><b style="width:4.000px">-</b><b style="width:7.000px">2</b><b style="width:7.000px">0</b><b style="width:7.000px">0</b><b style="width:7.000px">4</b></div><div class="a" style="left:262px;top:421px;font-size:12px;color:#fff;"><b style="width:7.000px">1</b><b style="width:7.000px">6</b><b style="width:3.000px">:</b><b style="width:7.000px">1</b><b style="width:7.000px">4</b><b style="width:3.000px">:</b><b style="width:7.000px">2</b><b style="width:7.000px">1</b></div><div class="a" style="left:115px;top:436px;font-size:12px;color:#fff;"><b style="width:7.000px">2</b><b style="width:4.000px">)</b></div><div class="a" style="left:193px;top:436px;font-size:12px;color:#fff;"><b style="width:7.000px">2</b><b style="width:4.000px">-</b><b style="width:9.000px">N</b><b style="width:7.000px">o</b><b style="width:5.000px">v</b><b style="width:4.000px">-</b><b style="width:7.000px">2</b><b style="width:7.000px">0</b><b style="width:7.000px">0</b><b style="width:7.000px">4</b></div><div class="a" style="left:262px;top:436px;font-size:12px;color:#fff;"><b style="width:7.000px">1</b><b style="width:7.000px">6</b><b style="width:3.000px">:</b><b style="width:7.000px">1</b><b style="width:7.000px">4</b><b style="width:3.000px">:</b><b style="width:7.000px">3</b><b style="width:7.000px">1</b></div><div class="a" style="left:354px;top:436px;font-size:12px;color:#fff;"><b style="width:7.000px">1</b><b style="width:7.000px">0</b><b style="width:3.000px">.</b><b style="width:7.000px">0</b><b style="width:7.000px">0</b><b style="width:7.000px">0</b><b style="width:7.000px">0</b><b style="width:7.000px">0</b><b style="width:7.000px">0</b><b style="width:7.000px">1</b><b style="width:7.000px">8</b><b style="width:7.000px">0</b><b style="width:3.000px"> </b><b style="width:6.000px">s</b></div><div class="a" style="left:488px;top:436px;font-size:12px;color:#fff;"><b style="width:7.000px">1</b><b style="width:7.000px">0</b><b style="width:3.000px">.</b><b style="width:7.000px">0</b><b style="width:7.000px">0</b><b style="width:7.000px">0</b><b style="width:7.000px">0</b><b style="width:7.000px">0</b><b style="width:7.000px">0</b><b style="width:7.000px">1</b><b style="width:7.000px">8</b><b style="width:7.000px">0</b><b style="width:3.000px"> </b><b style="width:6.000px">s</b></div><div class="a" style="left:115px;top:451px;font-size:12px;color:#fff;"><b style="width:7.000px">3</b><b style="width:4.000px">)</b></div><div class="a" style="left:193px;top:451px;font-size:12px;color:#fff;"><b style="width:7.000px">2</b><b style="width:4.000px">-</b><b style="width:9.000px">N</b><b style="width:7.000px">o</b><b style="width:5.000px">v</b><b style="width:4.000px">-</b><b style="width:7.000px">2</b><b style="width:7.000px">0</b><b style="width:7.000px">0</b><b style="width:7.000px">4</b></div><div class="a" style="left:262px;top:451px;font-size:12px;color:#fff;"><b style="width:7.000px">1</b><b style="width:7.000px">6</b><b style="width:3.000px">:</b><b style="width:7.000px">1</b><b style="width:7.000px">4</b><b style="width:3.000px">:</b><b style="width:7.000px">4</b><b style="width:7.000px">1</b></div><div class="a" style="left:354px;top:451px;font-size:12px;color:#fff;"><b style="width:7.000px">2</b><b style="width:7.000px">0</b><b style="width:3.000px">.</b><b style="width:7.000px">0</b><b style="width:7.000px">0</b><b style="width:7.000px">0</b><b style="width:7.000px">0</b><b style="width:7.000px">0</b><b style="width:7.000px">0</b><b style="width:7.000px">3</b><b style="width:7.000px">5</b><b style="width:7.000px">5</b><b style="width:3.000px"> </b><b style="width:6.000px">s</b></div><div class="a" style="left:488px;top:451px;font-size:12px;color:#fff;"><b style="width:7.000px">1</b><b style="width:7.000px">0</b><b style="width:3.000px">.</b><b style="width:7.000px">0</b><b style="width:7.000px">0</b><b style="width:7.000px">0</b><b style="width:7.000px">0</b><b style="width:7.000px">0</b><b style="width:7.000px">0</b><b style="width:7.000px">1</b><b style="width:7.000px">7</b><b style="width:7.000px">6</b><b style="width:3.000px"> </b><b style="width:6.000px">s</b></div><div class="a" style="left:115px;top:466px;font-size:12px;color:#fff;"><b style="width:7.000px">4</b><b style="width:4.000px">)</b></div><div class="a" style="left:193px;top:466px;font-size:12px;color:#fff;"><b style="width:7.000px">2</b><b style="width:4.000px">-</b><b style="width:9.000px">N</b><b style="width:7.000px">o</b><b style="width:5.000px">v</b><b style="width:4.000px">-</b><b style="width:7.000px">2</b><b style="width:7.000px">0</b><b style="width:7.000px">0</b><b style="width:7.000px">4</b></div><div class="a" style="left:262px;top:466px;font-size:12px;color:#fff;"><b style="width:7.000px">1</b><b style="width:7.000px">6</b><b style="width:3.000px">:</b><b style="width:7.000px">1</b><b style="width:7.000px">4</b><b style="width:3.000px">:</b><b style="width:7.000px">5</b><b style="width:7.000px">1</b></div><div class="a" style="left:354px;top:466px;font-size:12px;color:#fff;"><b style="width:7.000px">3</b><b style="width:7.000px">0</b><b style="width:3.000px">.</b><b style="width:7.000px">0</b><b style="width:7.000px">0</b><b style="width:7.000px">0</b><b style="width:7.000px">0</b><b style="width:7.000px">0</b><b style="width:7.000px">0</b><b style="width:7.000px">5</b><b style="width:7.000px">2</b><b style="width:7.000px">5</b><b style="width:3.000px"> </b><b style="width:6.000px">s</b></div><div class="a" style="left:488px;top:466px;font-size:12px;color:#fff;"><b style="width:7.000px">1</b><b style="width:7.000px">0</b><b style="width:3.000px">.</b><b style="width:7.000px">0</b><b style="width:7.000px">0</b><b style="width:7.000px">0</b><b style="width:7.000px">0</b><b style="width:7.000px">0</b><b style="width:7.000px">0</b><b style="width:7.000px">1</b><b style="width:7.000px">7</b><b style="width:7.000px">0</b><b style="width:3.000px"> </b><b style="width:6.000px">s</b></div><div class="a" style="left:115px;top:481px;font-size:12px;color:#fff;"><b style="width:7.000px">5</b><b style="width:4.000px">)</b></div><div class="a" style="left:193px;top:481px;font-size:12px;color:#fff;"><b style="width:7.000px">2</b><b style="width:4.000px">-</b><b style="width:9.000px">N</b><b style="width:7.000px">o</b><b style="width:5.000px">v</b><b style="width:4.000px">-</b><b style="width:7.000px">2</b><b style="width:7.000px">0</b><b style="width:7.000px">0</b><b style="width:7.000px">4</b></div><div class="a" style="left:262px;top:481px;font-size:12px;color:#fff;"><b style="width:7.000px">1</b><b style="width:7.000px">6</b><b style="width:3.000px">:</b><b style="width:7.000px">1</b><b style="width:7.000px">5</b><b style="width:3.000px">:</b><b style="width:7.000px">0</b><b style="width:7.000px">1</b></div><div class="a" style="left:354px;top:481px;font-size:12px;color:#fff;"><b style="width:7.000px">4</b><b style="width:7.000px">0</b><b style="width:3.000px">.</b><b style="width:7.000px">0</b><b style="width:7.000px">0</b><b style="width:7.000px">0</b><b style="width:7.000px">0</b><b style="width:7.000px">0</b><b style="width:7.000px">0</b><b style="width:7.000px">6</b><b style="width:7.000px">9</b><b style="width:7.000px">2</b><b style="width:3.000px"> </b><b style="width:6.000px">s</b></div><div class="a" style="left:488px;top:481px;font-size:12px;color:#fff;"><b style="width:7.000px">1</b><b style="width:7.000px">0</b><b style="width:3.000px">.</b><b style="width:7.000px">0</b><b style="width:7.000px">0</b><b style="width:7.000px">0</b><b style="width:7.000px">0</b><b style="width:7.000px">0</b><b style="width:7.000px">0</b><b style="width:7.000px">1</b><b style="width:7.000px">6</b><b style="width:7.000px">6</b><b style="width:3.000px"> </b><b style="width:6.000px">s</b></div><div class="a" style="left:115px;top:496px;font-size:12px;color:#fff;"><b style="width:7.000px">6</b><b style="width:4.000px">)</b></div><div class="a" style="left:193px;top:496px;font-size:12px;color:#fff;"><b style="width:7.000px">2</b><b style="width:4.000px">-</b><b style="width:9.000px">N</b><b style="width:7.000px">o</b><b style="width:5.000px">v</b><b style="width:4.000px">-</b><b style="width:7.000px">2</b><b style="width:7.000px">0</b><b style="width:7.000px">0</b><b style="width:7.000px">4</b></div><div class="a" style="left:262px;top:496px;font-size:12px;color:#fff;"><b style="width:7.000px">1</b><b style="width:7.000px">6</b><b style="width:3.000px">:</b><b style="width:7.000px">1</b><b style="width:7.000px">5</b><b style="width:3.000px">:</b><b style="width:7.000px">1</b><b style="width:7.000px">1</b></div><div class="a" style="left:354px;top:496px;font-size:12px;color:#fff;"><b style="width:7.000px">5</b><b style="width:7.000px">0</b><b style="width:3.000px">.</b><b style="width:7.000px">0</b><b style="width:7.000px">0</b><b style="width:7.000px">0</b><b style="width:7.000px">0</b><b style="width:7.000px">0</b><b style="width:7.000px">0</b><b style="width:7.000px">8</b><b style="width:7.000px">6</b><b style="width:7.000px">2</b><b style="width:3.000px"> </b><b style="width:6.000px">s</b></div><div class="a" style="left:488px;top:496px;font-size:12px;color:#fff;"><b style="width:7.000px">1</b><b style="width:7.000px">0</b><b style="width:3.000px">.</b><b style="width:7.000px">0</b><b style="width:7.000px">0</b><b style="width:7.000px">0</b><b style="width:7.000px">0</b><b style="width:7.000px">0</b><b style="width:7.000px">0</b><b style="width:7.000px">1</b><b style="width:7.000px">7</b><b style="width:7.000px">0</b><b style="width:3.000px"> </b><b style="width:6.000px">s</b></div><div class="a" style="left:115px;top:511px;font-size:12px;color:#fff;"><b style="width:7.000px">7</b><b style="width:4.000px">)</b></div><div class="a" style="left:193px;top:511px;font-size:12px;color:#fff;"><b style="width:7.000px">2</b><b style="width:4.000px">-</b><b style="width:9.000px">N</b><b style="width:7.000px">o</b><b style="width:5.000px">v</b><b style="width:4.000px">-</b><b style="width:7.000px">2</b><b style="width:7.000px">0</b><b style="width:7.000px">0</b><b style="width:7.000px">4</b></div><div class="a" style="left:262px;top:511px;font-size:12px;color:#fff;"><b style="width:7.000px">1</b><b style="width:7.000px">6</b><b style="width:3.000px">:</b><b style="width:7.000px">1</b><b style="width:7.000px">5</b><b style="width:3.000px">:</b><b style="width:7.000px">2</b><b style="width:7.000px">1</b></div><div class="a" style="left:354px;top:511px;font-size:12px;color:#fff;"><b style="width:7.000px">6</b><b style="width:7.000px">0</b><b style="width:3.000px">.</b><b style="width:7.000px">0</b><b style="width:7.000px">0</b><b style="width:7.000px">0</b><b style="width:7.000px">0</b><b style="width:7.000px">0</b><b style="width:7.000px">1</b><b style="width:7.000px">0</b><b style="width:7.000px">2</b><b style="width:7.000px">9</b><b style="width:3.000px"> </b><b style="width:6.000px">s</b></div><div class="a" style="left:488px;top:511px;font-size:12px;color:#fff;"><b style="width:7.000px">1</b><b style="width:7.000px">0</b><b style="width:3.000px">.</b><b style="width:7.000px">0</b><b style="width:7.000px">0</b><b style="width:7.000px">0</b><b style="width:7.000px">0</b><b style="width:7.000px">0</b><b style="width:7.000px">0</b><b style="width:7.000px">1</b><b style="width:7.000px">6</b><b style="width:7.000px">7</b><b style="width:3.000px"> </b><b style="width:6.000px">s</b></div><div class="a" style="left:115px;top:526px;font-size:12px;color:#fff;"><b style="width:7.000px">8</b><b style="width:4.000px">)</b></div><div class="a" style="left:193px;top:526px;font-size:12px;color:#fff;"><b style="width:7.000px">2</b><b style="width:4.000px">-</b><b style="width:9.000px">N</b><b style="width:7.000px">o</b><b style="width:5.000px">v</b><b style="width:4.000px">-</b><b style="width:7.000px">2</b><b style="width:7.000px">0</b><b style="width:7.000px">0</b><b style="width:7.000px">4</b></div><div class="a" style="left:262px;top:526px;font-size:12px;color:#fff;"><b style="width:7.000px">1</b><b style="width:7.000px">6</b><b style="width:3.000px">:</b><b style="width:7.000px">1</b><b style="width:7.000px">5</b><b style="width:3.000px">:</b><b style="width:7.000px">3</b><b style="width:7.000px">1</b></div><div class="a" style="left:354px;top:526px;font-size:12px;color:#fff;"><b style="width:7.000px">7</b><b style="width:7.000px">0</b><b style="width:3.000px">.</b><b style="width:7.000px">0</b><b style="width:7.000px">0</b><b style="width:7.000px">0</b><b style="width:7.000px">0</b><b style="width:7.000px">0</b><b style="width:7.000px">1</b><b style="width:7.000px">1</b><b style="width:7.000px">8</b><b style="width:7.000px">9</b><b style="width:3.000px"> </b><b style="width:6.000px">s</b></div><div class="a" style="left:488px;top:526px;font-size:12px;color:#fff;"><b style="width:7.000px">1</b><b style="width:7.000px">0</b><b style="width:3.000px">.</b><b style="width:7.000px">0</b><b style="width:7.000px">0</b><b style="width:7.000px">0</b><b style="width:7.000px">0</b><b style="width:7.000px">0</b><b style="width:7.000px">0</b><b style="width:7.000px">1</b><b style="width:7.000px">6</b><b style="width:7.000px">0</b><b style="width:3.000px"> </b><b style="width:6.000px">s</b></div><div class="a" style="left:115px;top:541px;font-size:12px;color:#fff;"><b style="width:7.000px">9</b><b style="width:4.000px">)</b></div><div class="a" style="left:193px;top:541px;font-size:12px;color:#fff;"><b style="width:7.000px">2</b><b style="width:4.000px">-</b><b style="width:9.000px">N</b><b style="width:7.000px">o</b><b style="width:5.000px">v</b><b style="width:4.000px">-</b><b style="width:7.000px">2</b><b style="width:7.000px">0</b><b style="width:7.000px">0</b><b style="width:7.000px">4</b></div><div class="a" style="left:262px;top:541px;font-size:12px;color:#fff;"><b style="width:7.000px">1</b><b style="width:7.000px">6</b><b style="width:3.000px">:</b><b style="width:7.000px">1</b><b style="width:7.000px">5</b><b style="width:3.000px">:</b><b style="width:7.000px">4</b><b style="width:7.000px">1</b></div><div class="a" style="left:354px;top:541px;font-size:12px;color:#fff;"><b style="width:7.000px">8</b><b style="width:7.000px">0</b><b style="width:3.000px">.</b><b style="width:7.000px">0</b><b style="width:7.000px">0</b><b style="width:7.000px">0</b><b style="width:7.000px">0</b><b style="width:7.000px">0</b><b style="width:7.000px">1</b><b style="width:7.000px">3</b><b style="width:7.000px">4</b><b style="width:7.000px">4</b><b style="width:3.000px"> </b><b style="width:6.000px">s</b></div><div class="a" style="left:488px;top:541px;font-size:12px;color:#fff;"><b style="width:7.000px">1</b><b style="width:7.000px">0</b><b style="width:3.000px">.</b><b style="width:7.000px">0</b><b style="width:7.000px">0</b><b style="width:7.000px">0</b><b style="width:7.000px">0</b><b style="width:7.000px">0</b><b style="width:7.000px">0</b><b style="width:7.000px">1</b><b style="width:7.000px">5</b><b style="width:7.000px">5</b><b style="width:3.000px"> </b><b style="width:6.000px">s</b></div><div class="a" style="left:115px;top:556px;font-size:12px;color:#fff;"><b style="width:7.000px">1</b><b style="width:7.000px">0</b><b style="width:4.000px">)</b></div><div class="a" style="left:193px;top:556px;font-size:12px;color:#fff;"><b style="width:7.000px">2</b><b style="width:4.000px">-</b><b style="width:9.000px">N</b><b style="width:7.000px">o</b><b style="width:5.000px">v</b><b style="width:4.000px">-</b><b style="width:7.000px">2</b><b style="width:7.000px">0</b><b style="width:7.000px">0</b><b style="width:7.000px">4</b></div><div class="a" style="left:262px;top:556px;font-size:12px;color:#fff;"><b style="width:7.000px">1</b><b style="width:7.000px">6</b><b style="width:3.000px">:</b><b style="width:7.000px">1</b><b style="width:7.000px">5</b><b style="width:3.000px">:</b><b style="width:7.000px">5</b><b style="width:7.000px">1</b></div><div class="a" style="left:354px;top:556px;font-size:12px;color:#fff;"><b style="width:7.000px">9</b><b style="width:7.000px">0</b><b style="width:3.000px">.</b><b style="width:7.000px">0</b><b style="width:7.000px">0</b><b style="width:7.000px">0</b><b style="width:7.000px">0</b><b style="width:7.000px">0</b><b style="width:7.000px">1</b><b style="width:7.000px">4</b><b style="width:7.000px">9</b><b style="width:7.000px">1</b><b style="width:3.000px"> </b><b style="width:6.000px">s</b></div><div class="a" style="left:488px;top:556px;font-size:12px;color:#fff;"><b style="width:7.000px">1</b><b style="width:7.000px">0</b><b style="width:3.000px">.</b><b style="width:7.000px">0</b><b style="width:7.000px">0</b><b style="width:7.000px">0</b><b style="width:7.000px">0</b><b style="width:7.000px">0</b><b style="width:7.000px">0</b><b style="width:7.000px">1</b><b style="width:7.000px">4</b><b style="width:7.000px">8</b><b style="width:3.000px"> </b><b style="width:6.000px">s</b></div><div style="position:absolute;left:694px;top:384px;width:43px;height:32px;background:#666699;border-top:1px solid #8c8cc4;border-left:1px solid #8c8cc4;border-bottom:1px solid #222233;border-radius:3px"></div><div class="a" style="left:701px;top:394px;font-size:12px;color:#fff;"><b style="width:8.000px">A</b><b style="width:6.000px">c</b><b style="width:7.000px">q</b><b style="width:7.000px">u</b><b style="width:3.000px">.</b></div><div style="position:absolute;left:742px;top:384px;width:43px;height:32px;background:#cc99cc;border-top:1px solid #1a1a30;border-left:1px solid #1a1a30;border-bottom:1px solid #9999cc;border-radius:3px"></div><div class="a" style="left:751px;top:394px;font-size:12px;color:#fff;"><b style="width:7.667px">T</b><b style="width:3.667px">i</b><b style="width:10.667px">m</b><b style="width:7.000px">e</b></div><div style="position:absolute;left:694px;top:420px;width:43px;height:32px;background:#666699;border-top:1px solid #8c8cc4;border-left:1px solid #8c8cc4;border-bottom:1px solid #222233;border-radius:3px"></div><div class="a" style="left:695px;top:430px;font-size:12px;color:#fff;"><b style="width:9.000px">C</b><b style="width:7.000px">1</b><b style="width:3.000px">.</b><b style="width:3.000px">.</b><b style="width:3.000px">.</b><b style="width:9.000px">C</b><b style="width:7.000px">4</b></div><div style="position:absolute;left:742px;top:420px;width:43px;height:32px;background:#666699;border-top:1px solid #8c8cc4;border-left:1px solid #8c8cc4;border-bottom:1px solid #222233;border-radius:3px"></div><div class="a" style="left:745px;top:430px;font-size:12px;color:#fff;"><b style="width:7.000px">F</b><b style="width:7.000px">1</b><b style="width:3.000px">.</b><b style="width:3.000px">.</b><b style="width:3.000px">.</b><b style="width:7.000px">F</b><b style="width:7.000px">4</b></div><div style="position:absolute;left:694px;top:456px;width:43px;height:32px;background:#666699;border-top:1px solid #8c8cc4;border-left:1px solid #8c8cc4;border-bottom:1px solid #222233;border-radius:3px"></div><div class="a" style="left:707px;top:466px;font-size:12px;color:#fff;"><b style="width:8.000px">X</b><b style="width:8.000px">Y</b></div><div style="position:absolute;left:742px;top:456px;width:43px;height:32px;background:#666699;border-top:1px solid #8c8cc4;border-left:1px solid #8c8cc4;border-bottom:1px solid #222233;border-radius:3px"></div><div class="a" style="left:742px;top:466px;font-size:12px;color:#fff;"><b style="width:10.000px">M</b><b style="width:7.000px">1</b><b style="width:3.000px">.</b><b style="width:3.000px">.</b><b style="width:3.000px">.</b><b style="width:10.000px">M</b><b style="width:7.000px">4</b></div><div style="position:absolute;left:694px;top:492px;width:43px;height:32px;background:#666699;border-top:1px solid #8c8cc4;border-left:1px solid #8c8cc4;border-bottom:1px solid #222233;border-radius:3px"></div><div class="a" style="left:697px;top:502px;font-size:12px;color:#fff;"><b style="width:9.000px">O</b><b style="width:3.000px">t</b><b style="width:7.000px">h</b><b style="width:7.000px">e</b><b style="width:4.000px">r</b><b style="width:6.000px">s</b></div><div class="a" style="left:9px;top:582px;font-size:16px;line-height:16px;font-weight:bold;color:#0000ff;letter-spacing:-0.2px">LeCroy</div><div style="position:absolute;left:6px;top:597px;width:51px;height:2px;background:#0000ff"></div><div class="a" style="left:672px;top:586px;font-size:12px;color:#fff;"><b style="width:7.000px">0</b><b style="width:7.000px">2</b><b style="width:3.000px">.</b><b style="width:7.000px">1</b><b style="width:7.000px">1</b><b style="width:3.000px">.</b><b style="width:7.000px">2</b><b style="width:7.000px">0</b><b style="width:7.000px">0</b><b style="width:7.000px">4</b><b style="width:3.000px"> </b><b style="width:7.000px">1</b><b style="width:7.000px">6</b><b style="width:3.000px">:</b><b style="width:7.000px">1</b><b style="width:7.000px">6</b><b style="width:3.000px">:</b><b style="width:7.000px">4</b><b style="width:7.000px">6</b></div></div></body></html>
